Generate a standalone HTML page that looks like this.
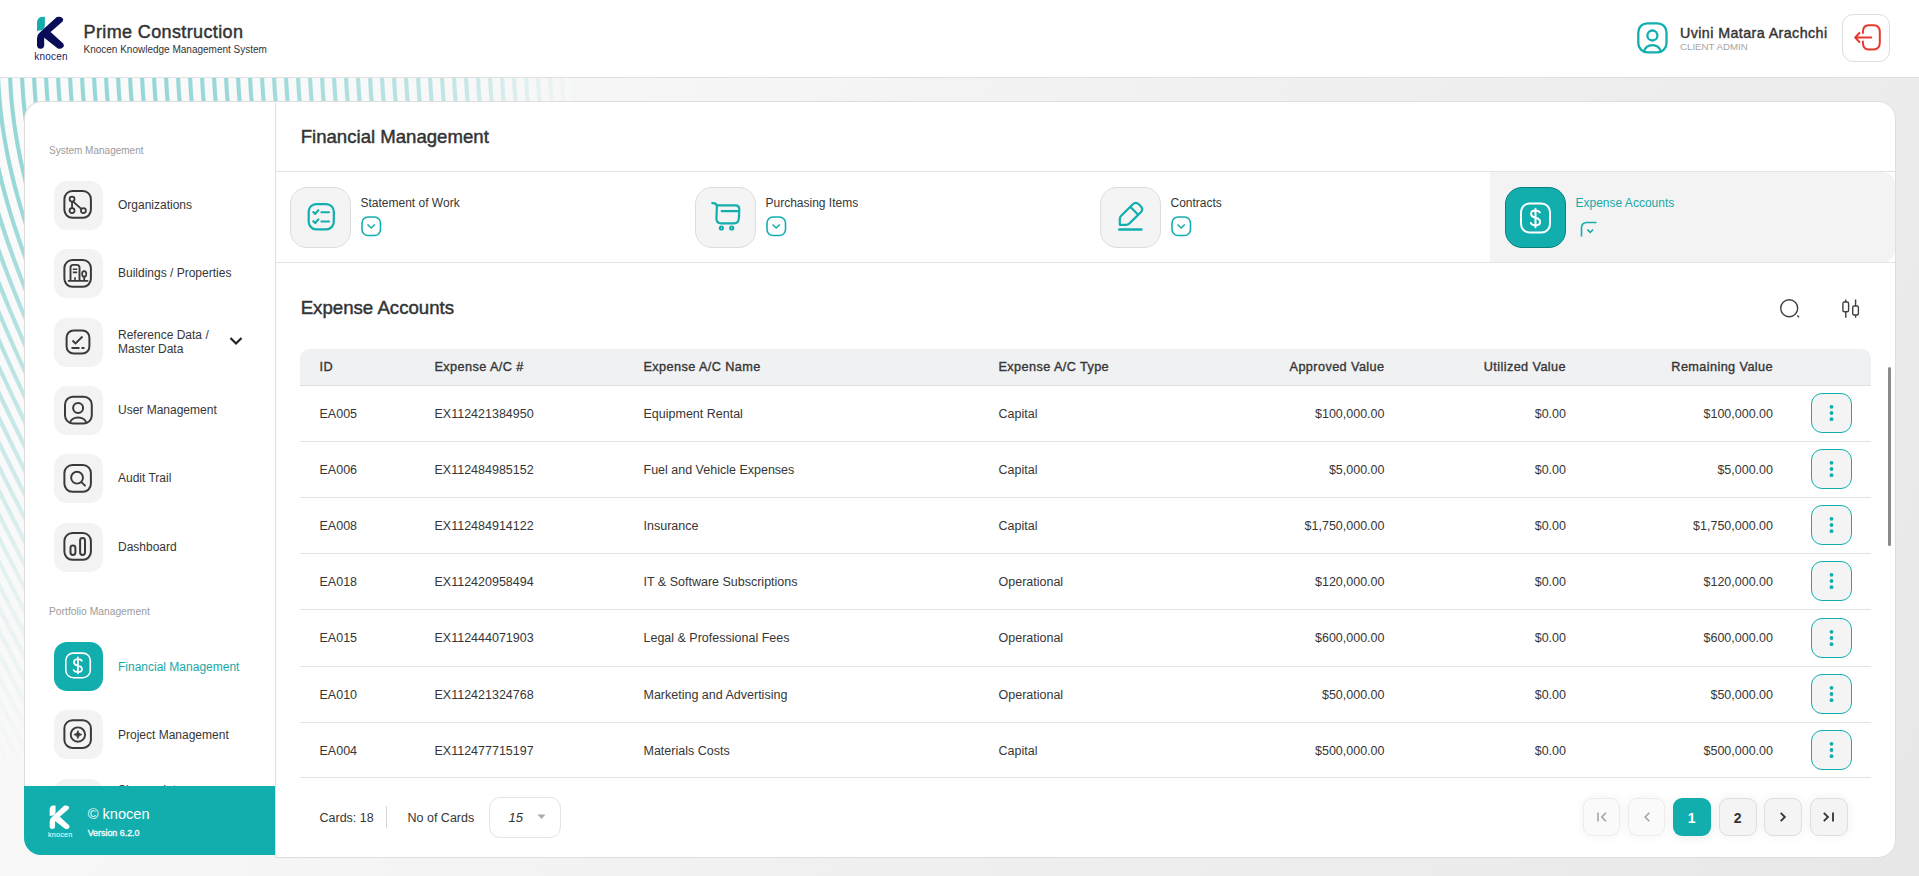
<!DOCTYPE html>
<html><head><meta charset="utf-8">
<style>
*{margin:0;padding:0;box-sizing:border-box}
html,body{width:1919px;height:876px;overflow:hidden}
body{position:relative;font-family:"Liberation Sans",sans-serif;color:#363636;background:linear-gradient(120deg,#fbfbfb 0%,#f7f7f7 25%,#efefef 60%,#ececec 80%,#e7e7e7 100%)}
.a{position:absolute;white-space:nowrap;line-height:1}
svg{overflow:visible}
</style></head><body>

<svg style="position:absolute;left:0;top:0" width="1919" height="876" viewBox="0 0 1919 876"><defs><linearGradient id="gx" gradientUnits="userSpaceOnUse" x1="0" y1="0" x2="600" y2="0"><stop offset="0" stop-color="#fff"/><stop offset="0.4" stop-color="#fff" stop-opacity="0.95"/><stop offset="0.75" stop-color="#fff" stop-opacity="0.55"/><stop offset="0.97" stop-color="#fff" stop-opacity="0"/></linearGradient><linearGradient id="gy" gradientUnits="userSpaceOnUse" x1="0" y1="78" x2="0" y2="780"><stop offset="0" stop-color="#fff"/><stop offset="0.18" stop-color="#fff" stop-opacity="0.95"/><stop offset="0.5" stop-color="#fff" stop-opacity="0.5"/><stop offset="0.72" stop-color="#fff" stop-opacity="0.2"/><stop offset="1" stop-color="#fff" stop-opacity="0"/></linearGradient><mask id="mx" maskUnits="userSpaceOnUse" x="0" y="0" width="1919" height="876"><rect x="0" y="0" width="1919" height="876" fill="url(#gx)"/></mask><mask id="my" maskUnits="userSpaceOnUse" x="0" y="0" width="1919" height="876"><rect x="0" y="0" width="1919" height="876" fill="url(#gy)"/></mask></defs><g mask="url(#mx)"><g mask="url(#my)"><g fill="none" stroke="#94d6d6" stroke-width="4.1"><polyline transform="translate(-830.2,0)" points="0.09,70 0.33,78 0.71,86 1.23,94 1.90,102 2.71,110 3.65,118 4.73,126 5.95,134 7.30,142 8.78,150 10.39,158 12.11,166 13.96,174 15.92,182 18.00,190 20.18,198 22.47,206 24.86,214 27.35,222 29.93,230 32.60,238 35.35,246 38.19,254 41.11,262 44.10,270 47.16,278 50.29,286 53.49,294 56.74,302 60.06,310 63.42,318 66.85,326 70.32,334 73.83,342 77.39,350 81.00,358 84.64,366 88.32,374 92.03,382 95.78,390 99.55,398 103.36,406 107.20,414 111.05,422 114.94,430 118.84,438 122.77,446 126.72,454 130.69,462 134.67,470 138.67,478 142.69,486 146.72,494 150.76,502 154.82,510 158.89,518 162.97,526 167.06,534 171.16,542 175.27,550 179.38,558 183.51,566 187.64,574 191.78,582 195.93,590 200.08,598 204.24,606 208.40,614 212.57,622 216.75,630 220.93,638 225.11,646 229.29,654 233.48,662 237.68,670 241.87,678 246.07,686 250.27,694 254.48,702 258.68,710 262.89,718 267.10,726 271.31,734 275.53,742 279.75,750 283.96,758 288.18,766 292.40,774 296.63,782 300.85,790 305.07,798 309.30,806 313.52,814 317.75,822 321.98,830 326.21,838 330.44,846 334.67,854 338.90,862 343.13,870 347.36,878"/><polyline transform="translate(-818.2,0)" points="0.09,70 0.33,78 0.71,86 1.23,94 1.90,102 2.71,110 3.65,118 4.73,126 5.95,134 7.30,142 8.78,150 10.39,158 12.11,166 13.96,174 15.92,182 18.00,190 20.18,198 22.47,206 24.86,214 27.35,222 29.93,230 32.60,238 35.35,246 38.19,254 41.11,262 44.10,270 47.16,278 50.29,286 53.49,294 56.74,302 60.06,310 63.42,318 66.85,326 70.32,334 73.83,342 77.39,350 81.00,358 84.64,366 88.32,374 92.03,382 95.78,390 99.55,398 103.36,406 107.20,414 111.05,422 114.94,430 118.84,438 122.77,446 126.72,454 130.69,462 134.67,470 138.67,478 142.69,486 146.72,494 150.76,502 154.82,510 158.89,518 162.97,526 167.06,534 171.16,542 175.27,550 179.38,558 183.51,566 187.64,574 191.78,582 195.93,590 200.08,598 204.24,606 208.40,614 212.57,622 216.75,630 220.93,638 225.11,646 229.29,654 233.48,662 237.68,670 241.87,678 246.07,686 250.27,694 254.48,702 258.68,710 262.89,718 267.10,726 271.31,734 275.53,742 279.75,750 283.96,758 288.18,766 292.40,774 296.63,782 300.85,790 305.07,798 309.30,806 313.52,814 317.75,822 321.98,830 326.21,838 330.44,846 334.67,854 338.90,862 343.13,870 347.36,878"/><polyline transform="translate(-806.2,0)" points="0.09,70 0.33,78 0.71,86 1.23,94 1.90,102 2.71,110 3.65,118 4.73,126 5.95,134 7.30,142 8.78,150 10.39,158 12.11,166 13.96,174 15.92,182 18.00,190 20.18,198 22.47,206 24.86,214 27.35,222 29.93,230 32.60,238 35.35,246 38.19,254 41.11,262 44.10,270 47.16,278 50.29,286 53.49,294 56.74,302 60.06,310 63.42,318 66.85,326 70.32,334 73.83,342 77.39,350 81.00,358 84.64,366 88.32,374 92.03,382 95.78,390 99.55,398 103.36,406 107.20,414 111.05,422 114.94,430 118.84,438 122.77,446 126.72,454 130.69,462 134.67,470 138.67,478 142.69,486 146.72,494 150.76,502 154.82,510 158.89,518 162.97,526 167.06,534 171.16,542 175.27,550 179.38,558 183.51,566 187.64,574 191.78,582 195.93,590 200.08,598 204.24,606 208.40,614 212.57,622 216.75,630 220.93,638 225.11,646 229.29,654 233.48,662 237.68,670 241.87,678 246.07,686 250.27,694 254.48,702 258.68,710 262.89,718 267.10,726 271.31,734 275.53,742 279.75,750 283.96,758 288.18,766 292.40,774 296.63,782 300.85,790 305.07,798 309.30,806 313.52,814 317.75,822 321.98,830 326.21,838 330.44,846 334.67,854 338.90,862 343.13,870 347.36,878"/><polyline transform="translate(-794.2,0)" points="0.09,70 0.33,78 0.71,86 1.23,94 1.90,102 2.71,110 3.65,118 4.73,126 5.95,134 7.30,142 8.78,150 10.39,158 12.11,166 13.96,174 15.92,182 18.00,190 20.18,198 22.47,206 24.86,214 27.35,222 29.93,230 32.60,238 35.35,246 38.19,254 41.11,262 44.10,270 47.16,278 50.29,286 53.49,294 56.74,302 60.06,310 63.42,318 66.85,326 70.32,334 73.83,342 77.39,350 81.00,358 84.64,366 88.32,374 92.03,382 95.78,390 99.55,398 103.36,406 107.20,414 111.05,422 114.94,430 118.84,438 122.77,446 126.72,454 130.69,462 134.67,470 138.67,478 142.69,486 146.72,494 150.76,502 154.82,510 158.89,518 162.97,526 167.06,534 171.16,542 175.27,550 179.38,558 183.51,566 187.64,574 191.78,582 195.93,590 200.08,598 204.24,606 208.40,614 212.57,622 216.75,630 220.93,638 225.11,646 229.29,654 233.48,662 237.68,670 241.87,678 246.07,686 250.27,694 254.48,702 258.68,710 262.89,718 267.10,726 271.31,734 275.53,742 279.75,750 283.96,758 288.18,766 292.40,774 296.63,782 300.85,790 305.07,798 309.30,806 313.52,814 317.75,822 321.98,830 326.21,838 330.44,846 334.67,854 338.90,862 343.13,870 347.36,878"/><polyline transform="translate(-782.2,0)" points="0.09,70 0.33,78 0.71,86 1.23,94 1.90,102 2.71,110 3.65,118 4.73,126 5.95,134 7.30,142 8.78,150 10.39,158 12.11,166 13.96,174 15.92,182 18.00,190 20.18,198 22.47,206 24.86,214 27.35,222 29.93,230 32.60,238 35.35,246 38.19,254 41.11,262 44.10,270 47.16,278 50.29,286 53.49,294 56.74,302 60.06,310 63.42,318 66.85,326 70.32,334 73.83,342 77.39,350 81.00,358 84.64,366 88.32,374 92.03,382 95.78,390 99.55,398 103.36,406 107.20,414 111.05,422 114.94,430 118.84,438 122.77,446 126.72,454 130.69,462 134.67,470 138.67,478 142.69,486 146.72,494 150.76,502 154.82,510 158.89,518 162.97,526 167.06,534 171.16,542 175.27,550 179.38,558 183.51,566 187.64,574 191.78,582 195.93,590 200.08,598 204.24,606 208.40,614 212.57,622 216.75,630 220.93,638 225.11,646 229.29,654 233.48,662 237.68,670 241.87,678 246.07,686 250.27,694 254.48,702 258.68,710 262.89,718 267.10,726 271.31,734 275.53,742 279.75,750 283.96,758 288.18,766 292.40,774 296.63,782 300.85,790 305.07,798 309.30,806 313.52,814 317.75,822 321.98,830 326.21,838 330.44,846 334.67,854 338.90,862 343.13,870 347.36,878"/><polyline transform="translate(-770.2,0)" points="0.09,70 0.33,78 0.71,86 1.23,94 1.90,102 2.71,110 3.65,118 4.73,126 5.95,134 7.30,142 8.78,150 10.39,158 12.11,166 13.96,174 15.92,182 18.00,190 20.18,198 22.47,206 24.86,214 27.35,222 29.93,230 32.60,238 35.35,246 38.19,254 41.11,262 44.10,270 47.16,278 50.29,286 53.49,294 56.74,302 60.06,310 63.42,318 66.85,326 70.32,334 73.83,342 77.39,350 81.00,358 84.64,366 88.32,374 92.03,382 95.78,390 99.55,398 103.36,406 107.20,414 111.05,422 114.94,430 118.84,438 122.77,446 126.72,454 130.69,462 134.67,470 138.67,478 142.69,486 146.72,494 150.76,502 154.82,510 158.89,518 162.97,526 167.06,534 171.16,542 175.27,550 179.38,558 183.51,566 187.64,574 191.78,582 195.93,590 200.08,598 204.24,606 208.40,614 212.57,622 216.75,630 220.93,638 225.11,646 229.29,654 233.48,662 237.68,670 241.87,678 246.07,686 250.27,694 254.48,702 258.68,710 262.89,718 267.10,726 271.31,734 275.53,742 279.75,750 283.96,758 288.18,766 292.40,774 296.63,782 300.85,790 305.07,798 309.30,806 313.52,814 317.75,822 321.98,830 326.21,838 330.44,846 334.67,854 338.90,862 343.13,870 347.36,878"/><polyline transform="translate(-758.2,0)" points="0.09,70 0.33,78 0.71,86 1.23,94 1.90,102 2.71,110 3.65,118 4.73,126 5.95,134 7.30,142 8.78,150 10.39,158 12.11,166 13.96,174 15.92,182 18.00,190 20.18,198 22.47,206 24.86,214 27.35,222 29.93,230 32.60,238 35.35,246 38.19,254 41.11,262 44.10,270 47.16,278 50.29,286 53.49,294 56.74,302 60.06,310 63.42,318 66.85,326 70.32,334 73.83,342 77.39,350 81.00,358 84.64,366 88.32,374 92.03,382 95.78,390 99.55,398 103.36,406 107.20,414 111.05,422 114.94,430 118.84,438 122.77,446 126.72,454 130.69,462 134.67,470 138.67,478 142.69,486 146.72,494 150.76,502 154.82,510 158.89,518 162.97,526 167.06,534 171.16,542 175.27,550 179.38,558 183.51,566 187.64,574 191.78,582 195.93,590 200.08,598 204.24,606 208.40,614 212.57,622 216.75,630 220.93,638 225.11,646 229.29,654 233.48,662 237.68,670 241.87,678 246.07,686 250.27,694 254.48,702 258.68,710 262.89,718 267.10,726 271.31,734 275.53,742 279.75,750 283.96,758 288.18,766 292.40,774 296.63,782 300.85,790 305.07,798 309.30,806 313.52,814 317.75,822 321.98,830 326.21,838 330.44,846 334.67,854 338.90,862 343.13,870 347.36,878"/><polyline transform="translate(-746.2,0)" points="0.09,70 0.33,78 0.71,86 1.23,94 1.90,102 2.71,110 3.65,118 4.73,126 5.95,134 7.30,142 8.78,150 10.39,158 12.11,166 13.96,174 15.92,182 18.00,190 20.18,198 22.47,206 24.86,214 27.35,222 29.93,230 32.60,238 35.35,246 38.19,254 41.11,262 44.10,270 47.16,278 50.29,286 53.49,294 56.74,302 60.06,310 63.42,318 66.85,326 70.32,334 73.83,342 77.39,350 81.00,358 84.64,366 88.32,374 92.03,382 95.78,390 99.55,398 103.36,406 107.20,414 111.05,422 114.94,430 118.84,438 122.77,446 126.72,454 130.69,462 134.67,470 138.67,478 142.69,486 146.72,494 150.76,502 154.82,510 158.89,518 162.97,526 167.06,534 171.16,542 175.27,550 179.38,558 183.51,566 187.64,574 191.78,582 195.93,590 200.08,598 204.24,606 208.40,614 212.57,622 216.75,630 220.93,638 225.11,646 229.29,654 233.48,662 237.68,670 241.87,678 246.07,686 250.27,694 254.48,702 258.68,710 262.89,718 267.10,726 271.31,734 275.53,742 279.75,750 283.96,758 288.18,766 292.40,774 296.63,782 300.85,790 305.07,798 309.30,806 313.52,814 317.75,822 321.98,830 326.21,838 330.44,846 334.67,854 338.90,862 343.13,870 347.36,878"/><polyline transform="translate(-734.2,0)" points="0.09,70 0.33,78 0.71,86 1.23,94 1.90,102 2.71,110 3.65,118 4.73,126 5.95,134 7.30,142 8.78,150 10.39,158 12.11,166 13.96,174 15.92,182 18.00,190 20.18,198 22.47,206 24.86,214 27.35,222 29.93,230 32.60,238 35.35,246 38.19,254 41.11,262 44.10,270 47.16,278 50.29,286 53.49,294 56.74,302 60.06,310 63.42,318 66.85,326 70.32,334 73.83,342 77.39,350 81.00,358 84.64,366 88.32,374 92.03,382 95.78,390 99.55,398 103.36,406 107.20,414 111.05,422 114.94,430 118.84,438 122.77,446 126.72,454 130.69,462 134.67,470 138.67,478 142.69,486 146.72,494 150.76,502 154.82,510 158.89,518 162.97,526 167.06,534 171.16,542 175.27,550 179.38,558 183.51,566 187.64,574 191.78,582 195.93,590 200.08,598 204.24,606 208.40,614 212.57,622 216.75,630 220.93,638 225.11,646 229.29,654 233.48,662 237.68,670 241.87,678 246.07,686 250.27,694 254.48,702 258.68,710 262.89,718 267.10,726 271.31,734 275.53,742 279.75,750 283.96,758 288.18,766 292.40,774 296.63,782 300.85,790 305.07,798 309.30,806 313.52,814 317.75,822 321.98,830 326.21,838 330.44,846 334.67,854 338.90,862 343.13,870 347.36,878"/><polyline transform="translate(-722.2,0)" points="0.09,70 0.33,78 0.71,86 1.23,94 1.90,102 2.71,110 3.65,118 4.73,126 5.95,134 7.30,142 8.78,150 10.39,158 12.11,166 13.96,174 15.92,182 18.00,190 20.18,198 22.47,206 24.86,214 27.35,222 29.93,230 32.60,238 35.35,246 38.19,254 41.11,262 44.10,270 47.16,278 50.29,286 53.49,294 56.74,302 60.06,310 63.42,318 66.85,326 70.32,334 73.83,342 77.39,350 81.00,358 84.64,366 88.32,374 92.03,382 95.78,390 99.55,398 103.36,406 107.20,414 111.05,422 114.94,430 118.84,438 122.77,446 126.72,454 130.69,462 134.67,470 138.67,478 142.69,486 146.72,494 150.76,502 154.82,510 158.89,518 162.97,526 167.06,534 171.16,542 175.27,550 179.38,558 183.51,566 187.64,574 191.78,582 195.93,590 200.08,598 204.24,606 208.40,614 212.57,622 216.75,630 220.93,638 225.11,646 229.29,654 233.48,662 237.68,670 241.87,678 246.07,686 250.27,694 254.48,702 258.68,710 262.89,718 267.10,726 271.31,734 275.53,742 279.75,750 283.96,758 288.18,766 292.40,774 296.63,782 300.85,790 305.07,798 309.30,806 313.52,814 317.75,822 321.98,830 326.21,838 330.44,846 334.67,854 338.90,862 343.13,870 347.36,878"/><polyline transform="translate(-710.2,0)" points="0.09,70 0.33,78 0.71,86 1.23,94 1.90,102 2.71,110 3.65,118 4.73,126 5.95,134 7.30,142 8.78,150 10.39,158 12.11,166 13.96,174 15.92,182 18.00,190 20.18,198 22.47,206 24.86,214 27.35,222 29.93,230 32.60,238 35.35,246 38.19,254 41.11,262 44.10,270 47.16,278 50.29,286 53.49,294 56.74,302 60.06,310 63.42,318 66.85,326 70.32,334 73.83,342 77.39,350 81.00,358 84.64,366 88.32,374 92.03,382 95.78,390 99.55,398 103.36,406 107.20,414 111.05,422 114.94,430 118.84,438 122.77,446 126.72,454 130.69,462 134.67,470 138.67,478 142.69,486 146.72,494 150.76,502 154.82,510 158.89,518 162.97,526 167.06,534 171.16,542 175.27,550 179.38,558 183.51,566 187.64,574 191.78,582 195.93,590 200.08,598 204.24,606 208.40,614 212.57,622 216.75,630 220.93,638 225.11,646 229.29,654 233.48,662 237.68,670 241.87,678 246.07,686 250.27,694 254.48,702 258.68,710 262.89,718 267.10,726 271.31,734 275.53,742 279.75,750 283.96,758 288.18,766 292.40,774 296.63,782 300.85,790 305.07,798 309.30,806 313.52,814 317.75,822 321.98,830 326.21,838 330.44,846 334.67,854 338.90,862 343.13,870 347.36,878"/><polyline transform="translate(-698.2,0)" points="0.09,70 0.33,78 0.71,86 1.23,94 1.90,102 2.71,110 3.65,118 4.73,126 5.95,134 7.30,142 8.78,150 10.39,158 12.11,166 13.96,174 15.92,182 18.00,190 20.18,198 22.47,206 24.86,214 27.35,222 29.93,230 32.60,238 35.35,246 38.19,254 41.11,262 44.10,270 47.16,278 50.29,286 53.49,294 56.74,302 60.06,310 63.42,318 66.85,326 70.32,334 73.83,342 77.39,350 81.00,358 84.64,366 88.32,374 92.03,382 95.78,390 99.55,398 103.36,406 107.20,414 111.05,422 114.94,430 118.84,438 122.77,446 126.72,454 130.69,462 134.67,470 138.67,478 142.69,486 146.72,494 150.76,502 154.82,510 158.89,518 162.97,526 167.06,534 171.16,542 175.27,550 179.38,558 183.51,566 187.64,574 191.78,582 195.93,590 200.08,598 204.24,606 208.40,614 212.57,622 216.75,630 220.93,638 225.11,646 229.29,654 233.48,662 237.68,670 241.87,678 246.07,686 250.27,694 254.48,702 258.68,710 262.89,718 267.10,726 271.31,734 275.53,742 279.75,750 283.96,758 288.18,766 292.40,774 296.63,782 300.85,790 305.07,798 309.30,806 313.52,814 317.75,822 321.98,830 326.21,838 330.44,846 334.67,854 338.90,862 343.13,870 347.36,878"/><polyline transform="translate(-686.2,0)" points="0.09,70 0.33,78 0.71,86 1.23,94 1.90,102 2.71,110 3.65,118 4.73,126 5.95,134 7.30,142 8.78,150 10.39,158 12.11,166 13.96,174 15.92,182 18.00,190 20.18,198 22.47,206 24.86,214 27.35,222 29.93,230 32.60,238 35.35,246 38.19,254 41.11,262 44.10,270 47.16,278 50.29,286 53.49,294 56.74,302 60.06,310 63.42,318 66.85,326 70.32,334 73.83,342 77.39,350 81.00,358 84.64,366 88.32,374 92.03,382 95.78,390 99.55,398 103.36,406 107.20,414 111.05,422 114.94,430 118.84,438 122.77,446 126.72,454 130.69,462 134.67,470 138.67,478 142.69,486 146.72,494 150.76,502 154.82,510 158.89,518 162.97,526 167.06,534 171.16,542 175.27,550 179.38,558 183.51,566 187.64,574 191.78,582 195.93,590 200.08,598 204.24,606 208.40,614 212.57,622 216.75,630 220.93,638 225.11,646 229.29,654 233.48,662 237.68,670 241.87,678 246.07,686 250.27,694 254.48,702 258.68,710 262.89,718 267.10,726 271.31,734 275.53,742 279.75,750 283.96,758 288.18,766 292.40,774 296.63,782 300.85,790 305.07,798 309.30,806 313.52,814 317.75,822 321.98,830 326.21,838 330.44,846 334.67,854 338.90,862 343.13,870 347.36,878"/><polyline transform="translate(-674.2,0)" points="0.09,70 0.33,78 0.71,86 1.23,94 1.90,102 2.71,110 3.65,118 4.73,126 5.95,134 7.30,142 8.78,150 10.39,158 12.11,166 13.96,174 15.92,182 18.00,190 20.18,198 22.47,206 24.86,214 27.35,222 29.93,230 32.60,238 35.35,246 38.19,254 41.11,262 44.10,270 47.16,278 50.29,286 53.49,294 56.74,302 60.06,310 63.42,318 66.85,326 70.32,334 73.83,342 77.39,350 81.00,358 84.64,366 88.32,374 92.03,382 95.78,390 99.55,398 103.36,406 107.20,414 111.05,422 114.94,430 118.84,438 122.77,446 126.72,454 130.69,462 134.67,470 138.67,478 142.69,486 146.72,494 150.76,502 154.82,510 158.89,518 162.97,526 167.06,534 171.16,542 175.27,550 179.38,558 183.51,566 187.64,574 191.78,582 195.93,590 200.08,598 204.24,606 208.40,614 212.57,622 216.75,630 220.93,638 225.11,646 229.29,654 233.48,662 237.68,670 241.87,678 246.07,686 250.27,694 254.48,702 258.68,710 262.89,718 267.10,726 271.31,734 275.53,742 279.75,750 283.96,758 288.18,766 292.40,774 296.63,782 300.85,790 305.07,798 309.30,806 313.52,814 317.75,822 321.98,830 326.21,838 330.44,846 334.67,854 338.90,862 343.13,870 347.36,878"/><polyline transform="translate(-662.2,0)" points="0.09,70 0.33,78 0.71,86 1.23,94 1.90,102 2.71,110 3.65,118 4.73,126 5.95,134 7.30,142 8.78,150 10.39,158 12.11,166 13.96,174 15.92,182 18.00,190 20.18,198 22.47,206 24.86,214 27.35,222 29.93,230 32.60,238 35.35,246 38.19,254 41.11,262 44.10,270 47.16,278 50.29,286 53.49,294 56.74,302 60.06,310 63.42,318 66.85,326 70.32,334 73.83,342 77.39,350 81.00,358 84.64,366 88.32,374 92.03,382 95.78,390 99.55,398 103.36,406 107.20,414 111.05,422 114.94,430 118.84,438 122.77,446 126.72,454 130.69,462 134.67,470 138.67,478 142.69,486 146.72,494 150.76,502 154.82,510 158.89,518 162.97,526 167.06,534 171.16,542 175.27,550 179.38,558 183.51,566 187.64,574 191.78,582 195.93,590 200.08,598 204.24,606 208.40,614 212.57,622 216.75,630 220.93,638 225.11,646 229.29,654 233.48,662 237.68,670 241.87,678 246.07,686 250.27,694 254.48,702 258.68,710 262.89,718 267.10,726 271.31,734 275.53,742 279.75,750 283.96,758 288.18,766 292.40,774 296.63,782 300.85,790 305.07,798 309.30,806 313.52,814 317.75,822 321.98,830 326.21,838 330.44,846 334.67,854 338.90,862 343.13,870 347.36,878"/><polyline transform="translate(-650.2,0)" points="0.09,70 0.33,78 0.71,86 1.23,94 1.90,102 2.71,110 3.65,118 4.73,126 5.95,134 7.30,142 8.78,150 10.39,158 12.11,166 13.96,174 15.92,182 18.00,190 20.18,198 22.47,206 24.86,214 27.35,222 29.93,230 32.60,238 35.35,246 38.19,254 41.11,262 44.10,270 47.16,278 50.29,286 53.49,294 56.74,302 60.06,310 63.42,318 66.85,326 70.32,334 73.83,342 77.39,350 81.00,358 84.64,366 88.32,374 92.03,382 95.78,390 99.55,398 103.36,406 107.20,414 111.05,422 114.94,430 118.84,438 122.77,446 126.72,454 130.69,462 134.67,470 138.67,478 142.69,486 146.72,494 150.76,502 154.82,510 158.89,518 162.97,526 167.06,534 171.16,542 175.27,550 179.38,558 183.51,566 187.64,574 191.78,582 195.93,590 200.08,598 204.24,606 208.40,614 212.57,622 216.75,630 220.93,638 225.11,646 229.29,654 233.48,662 237.68,670 241.87,678 246.07,686 250.27,694 254.48,702 258.68,710 262.89,718 267.10,726 271.31,734 275.53,742 279.75,750 283.96,758 288.18,766 292.40,774 296.63,782 300.85,790 305.07,798 309.30,806 313.52,814 317.75,822 321.98,830 326.21,838 330.44,846 334.67,854 338.90,862 343.13,870 347.36,878"/><polyline transform="translate(-638.2,0)" points="0.09,70 0.33,78 0.71,86 1.23,94 1.90,102 2.71,110 3.65,118 4.73,126 5.95,134 7.30,142 8.78,150 10.39,158 12.11,166 13.96,174 15.92,182 18.00,190 20.18,198 22.47,206 24.86,214 27.35,222 29.93,230 32.60,238 35.35,246 38.19,254 41.11,262 44.10,270 47.16,278 50.29,286 53.49,294 56.74,302 60.06,310 63.42,318 66.85,326 70.32,334 73.83,342 77.39,350 81.00,358 84.64,366 88.32,374 92.03,382 95.78,390 99.55,398 103.36,406 107.20,414 111.05,422 114.94,430 118.84,438 122.77,446 126.72,454 130.69,462 134.67,470 138.67,478 142.69,486 146.72,494 150.76,502 154.82,510 158.89,518 162.97,526 167.06,534 171.16,542 175.27,550 179.38,558 183.51,566 187.64,574 191.78,582 195.93,590 200.08,598 204.24,606 208.40,614 212.57,622 216.75,630 220.93,638 225.11,646 229.29,654 233.48,662 237.68,670 241.87,678 246.07,686 250.27,694 254.48,702 258.68,710 262.89,718 267.10,726 271.31,734 275.53,742 279.75,750 283.96,758 288.18,766 292.40,774 296.63,782 300.85,790 305.07,798 309.30,806 313.52,814 317.75,822 321.98,830 326.21,838 330.44,846 334.67,854 338.90,862 343.13,870 347.36,878"/><polyline transform="translate(-626.2,0)" points="0.09,70 0.33,78 0.71,86 1.23,94 1.90,102 2.71,110 3.65,118 4.73,126 5.95,134 7.30,142 8.78,150 10.39,158 12.11,166 13.96,174 15.92,182 18.00,190 20.18,198 22.47,206 24.86,214 27.35,222 29.93,230 32.60,238 35.35,246 38.19,254 41.11,262 44.10,270 47.16,278 50.29,286 53.49,294 56.74,302 60.06,310 63.42,318 66.85,326 70.32,334 73.83,342 77.39,350 81.00,358 84.64,366 88.32,374 92.03,382 95.78,390 99.55,398 103.36,406 107.20,414 111.05,422 114.94,430 118.84,438 122.77,446 126.72,454 130.69,462 134.67,470 138.67,478 142.69,486 146.72,494 150.76,502 154.82,510 158.89,518 162.97,526 167.06,534 171.16,542 175.27,550 179.38,558 183.51,566 187.64,574 191.78,582 195.93,590 200.08,598 204.24,606 208.40,614 212.57,622 216.75,630 220.93,638 225.11,646 229.29,654 233.48,662 237.68,670 241.87,678 246.07,686 250.27,694 254.48,702 258.68,710 262.89,718 267.10,726 271.31,734 275.53,742 279.75,750 283.96,758 288.18,766 292.40,774 296.63,782 300.85,790 305.07,798 309.30,806 313.52,814 317.75,822 321.98,830 326.21,838 330.44,846 334.67,854 338.90,862 343.13,870 347.36,878"/><polyline transform="translate(-614.2,0)" points="0.09,70 0.33,78 0.71,86 1.23,94 1.90,102 2.71,110 3.65,118 4.73,126 5.95,134 7.30,142 8.78,150 10.39,158 12.11,166 13.96,174 15.92,182 18.00,190 20.18,198 22.47,206 24.86,214 27.35,222 29.93,230 32.60,238 35.35,246 38.19,254 41.11,262 44.10,270 47.16,278 50.29,286 53.49,294 56.74,302 60.06,310 63.42,318 66.85,326 70.32,334 73.83,342 77.39,350 81.00,358 84.64,366 88.32,374 92.03,382 95.78,390 99.55,398 103.36,406 107.20,414 111.05,422 114.94,430 118.84,438 122.77,446 126.72,454 130.69,462 134.67,470 138.67,478 142.69,486 146.72,494 150.76,502 154.82,510 158.89,518 162.97,526 167.06,534 171.16,542 175.27,550 179.38,558 183.51,566 187.64,574 191.78,582 195.93,590 200.08,598 204.24,606 208.40,614 212.57,622 216.75,630 220.93,638 225.11,646 229.29,654 233.48,662 237.68,670 241.87,678 246.07,686 250.27,694 254.48,702 258.68,710 262.89,718 267.10,726 271.31,734 275.53,742 279.75,750 283.96,758 288.18,766 292.40,774 296.63,782 300.85,790 305.07,798 309.30,806 313.52,814 317.75,822 321.98,830 326.21,838 330.44,846 334.67,854 338.90,862 343.13,870 347.36,878"/><polyline transform="translate(-602.2,0)" points="0.09,70 0.33,78 0.71,86 1.23,94 1.90,102 2.71,110 3.65,118 4.73,126 5.95,134 7.30,142 8.78,150 10.39,158 12.11,166 13.96,174 15.92,182 18.00,190 20.18,198 22.47,206 24.86,214 27.35,222 29.93,230 32.60,238 35.35,246 38.19,254 41.11,262 44.10,270 47.16,278 50.29,286 53.49,294 56.74,302 60.06,310 63.42,318 66.85,326 70.32,334 73.83,342 77.39,350 81.00,358 84.64,366 88.32,374 92.03,382 95.78,390 99.55,398 103.36,406 107.20,414 111.05,422 114.94,430 118.84,438 122.77,446 126.72,454 130.69,462 134.67,470 138.67,478 142.69,486 146.72,494 150.76,502 154.82,510 158.89,518 162.97,526 167.06,534 171.16,542 175.27,550 179.38,558 183.51,566 187.64,574 191.78,582 195.93,590 200.08,598 204.24,606 208.40,614 212.57,622 216.75,630 220.93,638 225.11,646 229.29,654 233.48,662 237.68,670 241.87,678 246.07,686 250.27,694 254.48,702 258.68,710 262.89,718 267.10,726 271.31,734 275.53,742 279.75,750 283.96,758 288.18,766 292.40,774 296.63,782 300.85,790 305.07,798 309.30,806 313.52,814 317.75,822 321.98,830 326.21,838 330.44,846 334.67,854 338.90,862 343.13,870 347.36,878"/><polyline transform="translate(-590.2,0)" points="0.09,70 0.33,78 0.71,86 1.23,94 1.90,102 2.71,110 3.65,118 4.73,126 5.95,134 7.30,142 8.78,150 10.39,158 12.11,166 13.96,174 15.92,182 18.00,190 20.18,198 22.47,206 24.86,214 27.35,222 29.93,230 32.60,238 35.35,246 38.19,254 41.11,262 44.10,270 47.16,278 50.29,286 53.49,294 56.74,302 60.06,310 63.42,318 66.85,326 70.32,334 73.83,342 77.39,350 81.00,358 84.64,366 88.32,374 92.03,382 95.78,390 99.55,398 103.36,406 107.20,414 111.05,422 114.94,430 118.84,438 122.77,446 126.72,454 130.69,462 134.67,470 138.67,478 142.69,486 146.72,494 150.76,502 154.82,510 158.89,518 162.97,526 167.06,534 171.16,542 175.27,550 179.38,558 183.51,566 187.64,574 191.78,582 195.93,590 200.08,598 204.24,606 208.40,614 212.57,622 216.75,630 220.93,638 225.11,646 229.29,654 233.48,662 237.68,670 241.87,678 246.07,686 250.27,694 254.48,702 258.68,710 262.89,718 267.10,726 271.31,734 275.53,742 279.75,750 283.96,758 288.18,766 292.40,774 296.63,782 300.85,790 305.07,798 309.30,806 313.52,814 317.75,822 321.98,830 326.21,838 330.44,846 334.67,854 338.90,862 343.13,870 347.36,878"/><polyline transform="translate(-578.2,0)" points="0.09,70 0.33,78 0.71,86 1.23,94 1.90,102 2.71,110 3.65,118 4.73,126 5.95,134 7.30,142 8.78,150 10.39,158 12.11,166 13.96,174 15.92,182 18.00,190 20.18,198 22.47,206 24.86,214 27.35,222 29.93,230 32.60,238 35.35,246 38.19,254 41.11,262 44.10,270 47.16,278 50.29,286 53.49,294 56.74,302 60.06,310 63.42,318 66.85,326 70.32,334 73.83,342 77.39,350 81.00,358 84.64,366 88.32,374 92.03,382 95.78,390 99.55,398 103.36,406 107.20,414 111.05,422 114.94,430 118.84,438 122.77,446 126.72,454 130.69,462 134.67,470 138.67,478 142.69,486 146.72,494 150.76,502 154.82,510 158.89,518 162.97,526 167.06,534 171.16,542 175.27,550 179.38,558 183.51,566 187.64,574 191.78,582 195.93,590 200.08,598 204.24,606 208.40,614 212.57,622 216.75,630 220.93,638 225.11,646 229.29,654 233.48,662 237.68,670 241.87,678 246.07,686 250.27,694 254.48,702 258.68,710 262.89,718 267.10,726 271.31,734 275.53,742 279.75,750 283.96,758 288.18,766 292.40,774 296.63,782 300.85,790 305.07,798 309.30,806 313.52,814 317.75,822 321.98,830 326.21,838 330.44,846 334.67,854 338.90,862 343.13,870 347.36,878"/><polyline transform="translate(-566.2,0)" points="0.09,70 0.33,78 0.71,86 1.23,94 1.90,102 2.71,110 3.65,118 4.73,126 5.95,134 7.30,142 8.78,150 10.39,158 12.11,166 13.96,174 15.92,182 18.00,190 20.18,198 22.47,206 24.86,214 27.35,222 29.93,230 32.60,238 35.35,246 38.19,254 41.11,262 44.10,270 47.16,278 50.29,286 53.49,294 56.74,302 60.06,310 63.42,318 66.85,326 70.32,334 73.83,342 77.39,350 81.00,358 84.64,366 88.32,374 92.03,382 95.78,390 99.55,398 103.36,406 107.20,414 111.05,422 114.94,430 118.84,438 122.77,446 126.72,454 130.69,462 134.67,470 138.67,478 142.69,486 146.72,494 150.76,502 154.82,510 158.89,518 162.97,526 167.06,534 171.16,542 175.27,550 179.38,558 183.51,566 187.64,574 191.78,582 195.93,590 200.08,598 204.24,606 208.40,614 212.57,622 216.75,630 220.93,638 225.11,646 229.29,654 233.48,662 237.68,670 241.87,678 246.07,686 250.27,694 254.48,702 258.68,710 262.89,718 267.10,726 271.31,734 275.53,742 279.75,750 283.96,758 288.18,766 292.40,774 296.63,782 300.85,790 305.07,798 309.30,806 313.52,814 317.75,822 321.98,830 326.21,838 330.44,846 334.67,854 338.90,862 343.13,870 347.36,878"/><polyline transform="translate(-554.2,0)" points="0.09,70 0.33,78 0.71,86 1.23,94 1.90,102 2.71,110 3.65,118 4.73,126 5.95,134 7.30,142 8.78,150 10.39,158 12.11,166 13.96,174 15.92,182 18.00,190 20.18,198 22.47,206 24.86,214 27.35,222 29.93,230 32.60,238 35.35,246 38.19,254 41.11,262 44.10,270 47.16,278 50.29,286 53.49,294 56.74,302 60.06,310 63.42,318 66.85,326 70.32,334 73.83,342 77.39,350 81.00,358 84.64,366 88.32,374 92.03,382 95.78,390 99.55,398 103.36,406 107.20,414 111.05,422 114.94,430 118.84,438 122.77,446 126.72,454 130.69,462 134.67,470 138.67,478 142.69,486 146.72,494 150.76,502 154.82,510 158.89,518 162.97,526 167.06,534 171.16,542 175.27,550 179.38,558 183.51,566 187.64,574 191.78,582 195.93,590 200.08,598 204.24,606 208.40,614 212.57,622 216.75,630 220.93,638 225.11,646 229.29,654 233.48,662 237.68,670 241.87,678 246.07,686 250.27,694 254.48,702 258.68,710 262.89,718 267.10,726 271.31,734 275.53,742 279.75,750 283.96,758 288.18,766 292.40,774 296.63,782 300.85,790 305.07,798 309.30,806 313.52,814 317.75,822 321.98,830 326.21,838 330.44,846 334.67,854 338.90,862 343.13,870 347.36,878"/><polyline transform="translate(-542.2,0)" points="0.09,70 0.33,78 0.71,86 1.23,94 1.90,102 2.71,110 3.65,118 4.73,126 5.95,134 7.30,142 8.78,150 10.39,158 12.11,166 13.96,174 15.92,182 18.00,190 20.18,198 22.47,206 24.86,214 27.35,222 29.93,230 32.60,238 35.35,246 38.19,254 41.11,262 44.10,270 47.16,278 50.29,286 53.49,294 56.74,302 60.06,310 63.42,318 66.85,326 70.32,334 73.83,342 77.39,350 81.00,358 84.64,366 88.32,374 92.03,382 95.78,390 99.55,398 103.36,406 107.20,414 111.05,422 114.94,430 118.84,438 122.77,446 126.72,454 130.69,462 134.67,470 138.67,478 142.69,486 146.72,494 150.76,502 154.82,510 158.89,518 162.97,526 167.06,534 171.16,542 175.27,550 179.38,558 183.51,566 187.64,574 191.78,582 195.93,590 200.08,598 204.24,606 208.40,614 212.57,622 216.75,630 220.93,638 225.11,646 229.29,654 233.48,662 237.68,670 241.87,678 246.07,686 250.27,694 254.48,702 258.68,710 262.89,718 267.10,726 271.31,734 275.53,742 279.75,750 283.96,758 288.18,766 292.40,774 296.63,782 300.85,790 305.07,798 309.30,806 313.52,814 317.75,822 321.98,830 326.21,838 330.44,846 334.67,854 338.90,862 343.13,870 347.36,878"/><polyline transform="translate(-530.2,0)" points="0.09,70 0.33,78 0.71,86 1.23,94 1.90,102 2.71,110 3.65,118 4.73,126 5.95,134 7.30,142 8.78,150 10.39,158 12.11,166 13.96,174 15.92,182 18.00,190 20.18,198 22.47,206 24.86,214 27.35,222 29.93,230 32.60,238 35.35,246 38.19,254 41.11,262 44.10,270 47.16,278 50.29,286 53.49,294 56.74,302 60.06,310 63.42,318 66.85,326 70.32,334 73.83,342 77.39,350 81.00,358 84.64,366 88.32,374 92.03,382 95.78,390 99.55,398 103.36,406 107.20,414 111.05,422 114.94,430 118.84,438 122.77,446 126.72,454 130.69,462 134.67,470 138.67,478 142.69,486 146.72,494 150.76,502 154.82,510 158.89,518 162.97,526 167.06,534 171.16,542 175.27,550 179.38,558 183.51,566 187.64,574 191.78,582 195.93,590 200.08,598 204.24,606 208.40,614 212.57,622 216.75,630 220.93,638 225.11,646 229.29,654 233.48,662 237.68,670 241.87,678 246.07,686 250.27,694 254.48,702 258.68,710 262.89,718 267.10,726 271.31,734 275.53,742 279.75,750 283.96,758 288.18,766 292.40,774 296.63,782 300.85,790 305.07,798 309.30,806 313.52,814 317.75,822 321.98,830 326.21,838 330.44,846 334.67,854 338.90,862 343.13,870 347.36,878"/><polyline transform="translate(-518.2,0)" points="0.09,70 0.33,78 0.71,86 1.23,94 1.90,102 2.71,110 3.65,118 4.73,126 5.95,134 7.30,142 8.78,150 10.39,158 12.11,166 13.96,174 15.92,182 18.00,190 20.18,198 22.47,206 24.86,214 27.35,222 29.93,230 32.60,238 35.35,246 38.19,254 41.11,262 44.10,270 47.16,278 50.29,286 53.49,294 56.74,302 60.06,310 63.42,318 66.85,326 70.32,334 73.83,342 77.39,350 81.00,358 84.64,366 88.32,374 92.03,382 95.78,390 99.55,398 103.36,406 107.20,414 111.05,422 114.94,430 118.84,438 122.77,446 126.72,454 130.69,462 134.67,470 138.67,478 142.69,486 146.72,494 150.76,502 154.82,510 158.89,518 162.97,526 167.06,534 171.16,542 175.27,550 179.38,558 183.51,566 187.64,574 191.78,582 195.93,590 200.08,598 204.24,606 208.40,614 212.57,622 216.75,630 220.93,638 225.11,646 229.29,654 233.48,662 237.68,670 241.87,678 246.07,686 250.27,694 254.48,702 258.68,710 262.89,718 267.10,726 271.31,734 275.53,742 279.75,750 283.96,758 288.18,766 292.40,774 296.63,782 300.85,790 305.07,798 309.30,806 313.52,814 317.75,822 321.98,830 326.21,838 330.44,846 334.67,854 338.90,862 343.13,870 347.36,878"/><polyline transform="translate(-506.2,0)" points="0.09,70 0.33,78 0.71,86 1.23,94 1.90,102 2.71,110 3.65,118 4.73,126 5.95,134 7.30,142 8.78,150 10.39,158 12.11,166 13.96,174 15.92,182 18.00,190 20.18,198 22.47,206 24.86,214 27.35,222 29.93,230 32.60,238 35.35,246 38.19,254 41.11,262 44.10,270 47.16,278 50.29,286 53.49,294 56.74,302 60.06,310 63.42,318 66.85,326 70.32,334 73.83,342 77.39,350 81.00,358 84.64,366 88.32,374 92.03,382 95.78,390 99.55,398 103.36,406 107.20,414 111.05,422 114.94,430 118.84,438 122.77,446 126.72,454 130.69,462 134.67,470 138.67,478 142.69,486 146.72,494 150.76,502 154.82,510 158.89,518 162.97,526 167.06,534 171.16,542 175.27,550 179.38,558 183.51,566 187.64,574 191.78,582 195.93,590 200.08,598 204.24,606 208.40,614 212.57,622 216.75,630 220.93,638 225.11,646 229.29,654 233.48,662 237.68,670 241.87,678 246.07,686 250.27,694 254.48,702 258.68,710 262.89,718 267.10,726 271.31,734 275.53,742 279.75,750 283.96,758 288.18,766 292.40,774 296.63,782 300.85,790 305.07,798 309.30,806 313.52,814 317.75,822 321.98,830 326.21,838 330.44,846 334.67,854 338.90,862 343.13,870 347.36,878"/><polyline transform="translate(-494.2,0)" points="0.09,70 0.33,78 0.71,86 1.23,94 1.90,102 2.71,110 3.65,118 4.73,126 5.95,134 7.30,142 8.78,150 10.39,158 12.11,166 13.96,174 15.92,182 18.00,190 20.18,198 22.47,206 24.86,214 27.35,222 29.93,230 32.60,238 35.35,246 38.19,254 41.11,262 44.10,270 47.16,278 50.29,286 53.49,294 56.74,302 60.06,310 63.42,318 66.85,326 70.32,334 73.83,342 77.39,350 81.00,358 84.64,366 88.32,374 92.03,382 95.78,390 99.55,398 103.36,406 107.20,414 111.05,422 114.94,430 118.84,438 122.77,446 126.72,454 130.69,462 134.67,470 138.67,478 142.69,486 146.72,494 150.76,502 154.82,510 158.89,518 162.97,526 167.06,534 171.16,542 175.27,550 179.38,558 183.51,566 187.64,574 191.78,582 195.93,590 200.08,598 204.24,606 208.40,614 212.57,622 216.75,630 220.93,638 225.11,646 229.29,654 233.48,662 237.68,670 241.87,678 246.07,686 250.27,694 254.48,702 258.68,710 262.89,718 267.10,726 271.31,734 275.53,742 279.75,750 283.96,758 288.18,766 292.40,774 296.63,782 300.85,790 305.07,798 309.30,806 313.52,814 317.75,822 321.98,830 326.21,838 330.44,846 334.67,854 338.90,862 343.13,870 347.36,878"/><polyline transform="translate(-482.2,0)" points="0.09,70 0.33,78 0.71,86 1.23,94 1.90,102 2.71,110 3.65,118 4.73,126 5.95,134 7.30,142 8.78,150 10.39,158 12.11,166 13.96,174 15.92,182 18.00,190 20.18,198 22.47,206 24.86,214 27.35,222 29.93,230 32.60,238 35.35,246 38.19,254 41.11,262 44.10,270 47.16,278 50.29,286 53.49,294 56.74,302 60.06,310 63.42,318 66.85,326 70.32,334 73.83,342 77.39,350 81.00,358 84.64,366 88.32,374 92.03,382 95.78,390 99.55,398 103.36,406 107.20,414 111.05,422 114.94,430 118.84,438 122.77,446 126.72,454 130.69,462 134.67,470 138.67,478 142.69,486 146.72,494 150.76,502 154.82,510 158.89,518 162.97,526 167.06,534 171.16,542 175.27,550 179.38,558 183.51,566 187.64,574 191.78,582 195.93,590 200.08,598 204.24,606 208.40,614 212.57,622 216.75,630 220.93,638 225.11,646 229.29,654 233.48,662 237.68,670 241.87,678 246.07,686 250.27,694 254.48,702 258.68,710 262.89,718 267.10,726 271.31,734 275.53,742 279.75,750 283.96,758 288.18,766 292.40,774 296.63,782 300.85,790 305.07,798 309.30,806 313.52,814 317.75,822 321.98,830 326.21,838 330.44,846 334.67,854 338.90,862 343.13,870 347.36,878"/><polyline transform="translate(-470.2,0)" points="0.09,70 0.33,78 0.71,86 1.23,94 1.90,102 2.71,110 3.65,118 4.73,126 5.95,134 7.30,142 8.78,150 10.39,158 12.11,166 13.96,174 15.92,182 18.00,190 20.18,198 22.47,206 24.86,214 27.35,222 29.93,230 32.60,238 35.35,246 38.19,254 41.11,262 44.10,270 47.16,278 50.29,286 53.49,294 56.74,302 60.06,310 63.42,318 66.85,326 70.32,334 73.83,342 77.39,350 81.00,358 84.64,366 88.32,374 92.03,382 95.78,390 99.55,398 103.36,406 107.20,414 111.05,422 114.94,430 118.84,438 122.77,446 126.72,454 130.69,462 134.67,470 138.67,478 142.69,486 146.72,494 150.76,502 154.82,510 158.89,518 162.97,526 167.06,534 171.16,542 175.27,550 179.38,558 183.51,566 187.64,574 191.78,582 195.93,590 200.08,598 204.24,606 208.40,614 212.57,622 216.75,630 220.93,638 225.11,646 229.29,654 233.48,662 237.68,670 241.87,678 246.07,686 250.27,694 254.48,702 258.68,710 262.89,718 267.10,726 271.31,734 275.53,742 279.75,750 283.96,758 288.18,766 292.40,774 296.63,782 300.85,790 305.07,798 309.30,806 313.52,814 317.75,822 321.98,830 326.21,838 330.44,846 334.67,854 338.90,862 343.13,870 347.36,878"/><polyline transform="translate(-458.2,0)" points="0.09,70 0.33,78 0.71,86 1.23,94 1.90,102 2.71,110 3.65,118 4.73,126 5.95,134 7.30,142 8.78,150 10.39,158 12.11,166 13.96,174 15.92,182 18.00,190 20.18,198 22.47,206 24.86,214 27.35,222 29.93,230 32.60,238 35.35,246 38.19,254 41.11,262 44.10,270 47.16,278 50.29,286 53.49,294 56.74,302 60.06,310 63.42,318 66.85,326 70.32,334 73.83,342 77.39,350 81.00,358 84.64,366 88.32,374 92.03,382 95.78,390 99.55,398 103.36,406 107.20,414 111.05,422 114.94,430 118.84,438 122.77,446 126.72,454 130.69,462 134.67,470 138.67,478 142.69,486 146.72,494 150.76,502 154.82,510 158.89,518 162.97,526 167.06,534 171.16,542 175.27,550 179.38,558 183.51,566 187.64,574 191.78,582 195.93,590 200.08,598 204.24,606 208.40,614 212.57,622 216.75,630 220.93,638 225.11,646 229.29,654 233.48,662 237.68,670 241.87,678 246.07,686 250.27,694 254.48,702 258.68,710 262.89,718 267.10,726 271.31,734 275.53,742 279.75,750 283.96,758 288.18,766 292.40,774 296.63,782 300.85,790 305.07,798 309.30,806 313.52,814 317.75,822 321.98,830 326.21,838 330.44,846 334.67,854 338.90,862 343.13,870 347.36,878"/><polyline transform="translate(-446.2,0)" points="0.09,70 0.33,78 0.71,86 1.23,94 1.90,102 2.71,110 3.65,118 4.73,126 5.95,134 7.30,142 8.78,150 10.39,158 12.11,166 13.96,174 15.92,182 18.00,190 20.18,198 22.47,206 24.86,214 27.35,222 29.93,230 32.60,238 35.35,246 38.19,254 41.11,262 44.10,270 47.16,278 50.29,286 53.49,294 56.74,302 60.06,310 63.42,318 66.85,326 70.32,334 73.83,342 77.39,350 81.00,358 84.64,366 88.32,374 92.03,382 95.78,390 99.55,398 103.36,406 107.20,414 111.05,422 114.94,430 118.84,438 122.77,446 126.72,454 130.69,462 134.67,470 138.67,478 142.69,486 146.72,494 150.76,502 154.82,510 158.89,518 162.97,526 167.06,534 171.16,542 175.27,550 179.38,558 183.51,566 187.64,574 191.78,582 195.93,590 200.08,598 204.24,606 208.40,614 212.57,622 216.75,630 220.93,638 225.11,646 229.29,654 233.48,662 237.68,670 241.87,678 246.07,686 250.27,694 254.48,702 258.68,710 262.89,718 267.10,726 271.31,734 275.53,742 279.75,750 283.96,758 288.18,766 292.40,774 296.63,782 300.85,790 305.07,798 309.30,806 313.52,814 317.75,822 321.98,830 326.21,838 330.44,846 334.67,854 338.90,862 343.13,870 347.36,878"/><polyline transform="translate(-434.2,0)" points="0.09,70 0.33,78 0.71,86 1.23,94 1.90,102 2.71,110 3.65,118 4.73,126 5.95,134 7.30,142 8.78,150 10.39,158 12.11,166 13.96,174 15.92,182 18.00,190 20.18,198 22.47,206 24.86,214 27.35,222 29.93,230 32.60,238 35.35,246 38.19,254 41.11,262 44.10,270 47.16,278 50.29,286 53.49,294 56.74,302 60.06,310 63.42,318 66.85,326 70.32,334 73.83,342 77.39,350 81.00,358 84.64,366 88.32,374 92.03,382 95.78,390 99.55,398 103.36,406 107.20,414 111.05,422 114.94,430 118.84,438 122.77,446 126.72,454 130.69,462 134.67,470 138.67,478 142.69,486 146.72,494 150.76,502 154.82,510 158.89,518 162.97,526 167.06,534 171.16,542 175.27,550 179.38,558 183.51,566 187.64,574 191.78,582 195.93,590 200.08,598 204.24,606 208.40,614 212.57,622 216.75,630 220.93,638 225.11,646 229.29,654 233.48,662 237.68,670 241.87,678 246.07,686 250.27,694 254.48,702 258.68,710 262.89,718 267.10,726 271.31,734 275.53,742 279.75,750 283.96,758 288.18,766 292.40,774 296.63,782 300.85,790 305.07,798 309.30,806 313.52,814 317.75,822 321.98,830 326.21,838 330.44,846 334.67,854 338.90,862 343.13,870 347.36,878"/><polyline transform="translate(-422.2,0)" points="0.09,70 0.33,78 0.71,86 1.23,94 1.90,102 2.71,110 3.65,118 4.73,126 5.95,134 7.30,142 8.78,150 10.39,158 12.11,166 13.96,174 15.92,182 18.00,190 20.18,198 22.47,206 24.86,214 27.35,222 29.93,230 32.60,238 35.35,246 38.19,254 41.11,262 44.10,270 47.16,278 50.29,286 53.49,294 56.74,302 60.06,310 63.42,318 66.85,326 70.32,334 73.83,342 77.39,350 81.00,358 84.64,366 88.32,374 92.03,382 95.78,390 99.55,398 103.36,406 107.20,414 111.05,422 114.94,430 118.84,438 122.77,446 126.72,454 130.69,462 134.67,470 138.67,478 142.69,486 146.72,494 150.76,502 154.82,510 158.89,518 162.97,526 167.06,534 171.16,542 175.27,550 179.38,558 183.51,566 187.64,574 191.78,582 195.93,590 200.08,598 204.24,606 208.40,614 212.57,622 216.75,630 220.93,638 225.11,646 229.29,654 233.48,662 237.68,670 241.87,678 246.07,686 250.27,694 254.48,702 258.68,710 262.89,718 267.10,726 271.31,734 275.53,742 279.75,750 283.96,758 288.18,766 292.40,774 296.63,782 300.85,790 305.07,798 309.30,806 313.52,814 317.75,822 321.98,830 326.21,838 330.44,846 334.67,854 338.90,862 343.13,870 347.36,878"/><polyline transform="translate(-410.2,0)" points="0.09,70 0.33,78 0.71,86 1.23,94 1.90,102 2.71,110 3.65,118 4.73,126 5.95,134 7.30,142 8.78,150 10.39,158 12.11,166 13.96,174 15.92,182 18.00,190 20.18,198 22.47,206 24.86,214 27.35,222 29.93,230 32.60,238 35.35,246 38.19,254 41.11,262 44.10,270 47.16,278 50.29,286 53.49,294 56.74,302 60.06,310 63.42,318 66.85,326 70.32,334 73.83,342 77.39,350 81.00,358 84.64,366 88.32,374 92.03,382 95.78,390 99.55,398 103.36,406 107.20,414 111.05,422 114.94,430 118.84,438 122.77,446 126.72,454 130.69,462 134.67,470 138.67,478 142.69,486 146.72,494 150.76,502 154.82,510 158.89,518 162.97,526 167.06,534 171.16,542 175.27,550 179.38,558 183.51,566 187.64,574 191.78,582 195.93,590 200.08,598 204.24,606 208.40,614 212.57,622 216.75,630 220.93,638 225.11,646 229.29,654 233.48,662 237.68,670 241.87,678 246.07,686 250.27,694 254.48,702 258.68,710 262.89,718 267.10,726 271.31,734 275.53,742 279.75,750 283.96,758 288.18,766 292.40,774 296.63,782 300.85,790 305.07,798 309.30,806 313.52,814 317.75,822 321.98,830 326.21,838 330.44,846 334.67,854 338.90,862 343.13,870 347.36,878"/><polyline transform="translate(-398.2,0)" points="0.09,70 0.33,78 0.71,86 1.23,94 1.90,102 2.71,110 3.65,118 4.73,126 5.95,134 7.30,142 8.78,150 10.39,158 12.11,166 13.96,174 15.92,182 18.00,190 20.18,198 22.47,206 24.86,214 27.35,222 29.93,230 32.60,238 35.35,246 38.19,254 41.11,262 44.10,270 47.16,278 50.29,286 53.49,294 56.74,302 60.06,310 63.42,318 66.85,326 70.32,334 73.83,342 77.39,350 81.00,358 84.64,366 88.32,374 92.03,382 95.78,390 99.55,398 103.36,406 107.20,414 111.05,422 114.94,430 118.84,438 122.77,446 126.72,454 130.69,462 134.67,470 138.67,478 142.69,486 146.72,494 150.76,502 154.82,510 158.89,518 162.97,526 167.06,534 171.16,542 175.27,550 179.38,558 183.51,566 187.64,574 191.78,582 195.93,590 200.08,598 204.24,606 208.40,614 212.57,622 216.75,630 220.93,638 225.11,646 229.29,654 233.48,662 237.68,670 241.87,678 246.07,686 250.27,694 254.48,702 258.68,710 262.89,718 267.10,726 271.31,734 275.53,742 279.75,750 283.96,758 288.18,766 292.40,774 296.63,782 300.85,790 305.07,798 309.30,806 313.52,814 317.75,822 321.98,830 326.21,838 330.44,846 334.67,854 338.90,862 343.13,870 347.36,878"/><polyline transform="translate(-386.2,0)" points="0.09,70 0.33,78 0.71,86 1.23,94 1.90,102 2.71,110 3.65,118 4.73,126 5.95,134 7.30,142 8.78,150 10.39,158 12.11,166 13.96,174 15.92,182 18.00,190 20.18,198 22.47,206 24.86,214 27.35,222 29.93,230 32.60,238 35.35,246 38.19,254 41.11,262 44.10,270 47.16,278 50.29,286 53.49,294 56.74,302 60.06,310 63.42,318 66.85,326 70.32,334 73.83,342 77.39,350 81.00,358 84.64,366 88.32,374 92.03,382 95.78,390 99.55,398 103.36,406 107.20,414 111.05,422 114.94,430 118.84,438 122.77,446 126.72,454 130.69,462 134.67,470 138.67,478 142.69,486 146.72,494 150.76,502 154.82,510 158.89,518 162.97,526 167.06,534 171.16,542 175.27,550 179.38,558 183.51,566 187.64,574 191.78,582 195.93,590 200.08,598 204.24,606 208.40,614 212.57,622 216.75,630 220.93,638 225.11,646 229.29,654 233.48,662 237.68,670 241.87,678 246.07,686 250.27,694 254.48,702 258.68,710 262.89,718 267.10,726 271.31,734 275.53,742 279.75,750 283.96,758 288.18,766 292.40,774 296.63,782 300.85,790 305.07,798 309.30,806 313.52,814 317.75,822 321.98,830 326.21,838 330.44,846 334.67,854 338.90,862 343.13,870 347.36,878"/><polyline transform="translate(-374.2,0)" points="0.09,70 0.33,78 0.71,86 1.23,94 1.90,102 2.71,110 3.65,118 4.73,126 5.95,134 7.30,142 8.78,150 10.39,158 12.11,166 13.96,174 15.92,182 18.00,190 20.18,198 22.47,206 24.86,214 27.35,222 29.93,230 32.60,238 35.35,246 38.19,254 41.11,262 44.10,270 47.16,278 50.29,286 53.49,294 56.74,302 60.06,310 63.42,318 66.85,326 70.32,334 73.83,342 77.39,350 81.00,358 84.64,366 88.32,374 92.03,382 95.78,390 99.55,398 103.36,406 107.20,414 111.05,422 114.94,430 118.84,438 122.77,446 126.72,454 130.69,462 134.67,470 138.67,478 142.69,486 146.72,494 150.76,502 154.82,510 158.89,518 162.97,526 167.06,534 171.16,542 175.27,550 179.38,558 183.51,566 187.64,574 191.78,582 195.93,590 200.08,598 204.24,606 208.40,614 212.57,622 216.75,630 220.93,638 225.11,646 229.29,654 233.48,662 237.68,670 241.87,678 246.07,686 250.27,694 254.48,702 258.68,710 262.89,718 267.10,726 271.31,734 275.53,742 279.75,750 283.96,758 288.18,766 292.40,774 296.63,782 300.85,790 305.07,798 309.30,806 313.52,814 317.75,822 321.98,830 326.21,838 330.44,846 334.67,854 338.90,862 343.13,870 347.36,878"/><polyline transform="translate(-362.2,0)" points="0.09,70 0.33,78 0.71,86 1.23,94 1.90,102 2.71,110 3.65,118 4.73,126 5.95,134 7.30,142 8.78,150 10.39,158 12.11,166 13.96,174 15.92,182 18.00,190 20.18,198 22.47,206 24.86,214 27.35,222 29.93,230 32.60,238 35.35,246 38.19,254 41.11,262 44.10,270 47.16,278 50.29,286 53.49,294 56.74,302 60.06,310 63.42,318 66.85,326 70.32,334 73.83,342 77.39,350 81.00,358 84.64,366 88.32,374 92.03,382 95.78,390 99.55,398 103.36,406 107.20,414 111.05,422 114.94,430 118.84,438 122.77,446 126.72,454 130.69,462 134.67,470 138.67,478 142.69,486 146.72,494 150.76,502 154.82,510 158.89,518 162.97,526 167.06,534 171.16,542 175.27,550 179.38,558 183.51,566 187.64,574 191.78,582 195.93,590 200.08,598 204.24,606 208.40,614 212.57,622 216.75,630 220.93,638 225.11,646 229.29,654 233.48,662 237.68,670 241.87,678 246.07,686 250.27,694 254.48,702 258.68,710 262.89,718 267.10,726 271.31,734 275.53,742 279.75,750 283.96,758 288.18,766 292.40,774 296.63,782 300.85,790 305.07,798 309.30,806 313.52,814 317.75,822 321.98,830 326.21,838 330.44,846 334.67,854 338.90,862 343.13,870 347.36,878"/><polyline transform="translate(-350.2,0)" points="0.09,70 0.33,78 0.71,86 1.23,94 1.90,102 2.71,110 3.65,118 4.73,126 5.95,134 7.30,142 8.78,150 10.39,158 12.11,166 13.96,174 15.92,182 18.00,190 20.18,198 22.47,206 24.86,214 27.35,222 29.93,230 32.60,238 35.35,246 38.19,254 41.11,262 44.10,270 47.16,278 50.29,286 53.49,294 56.74,302 60.06,310 63.42,318 66.85,326 70.32,334 73.83,342 77.39,350 81.00,358 84.64,366 88.32,374 92.03,382 95.78,390 99.55,398 103.36,406 107.20,414 111.05,422 114.94,430 118.84,438 122.77,446 126.72,454 130.69,462 134.67,470 138.67,478 142.69,486 146.72,494 150.76,502 154.82,510 158.89,518 162.97,526 167.06,534 171.16,542 175.27,550 179.38,558 183.51,566 187.64,574 191.78,582 195.93,590 200.08,598 204.24,606 208.40,614 212.57,622 216.75,630 220.93,638 225.11,646 229.29,654 233.48,662 237.68,670 241.87,678 246.07,686 250.27,694 254.48,702 258.68,710 262.89,718 267.10,726 271.31,734 275.53,742 279.75,750 283.96,758 288.18,766 292.40,774 296.63,782 300.85,790 305.07,798 309.30,806 313.52,814 317.75,822 321.98,830 326.21,838 330.44,846 334.67,854 338.90,862 343.13,870 347.36,878"/><polyline transform="translate(-338.2,0)" points="0.09,70 0.33,78 0.71,86 1.23,94 1.90,102 2.71,110 3.65,118 4.73,126 5.95,134 7.30,142 8.78,150 10.39,158 12.11,166 13.96,174 15.92,182 18.00,190 20.18,198 22.47,206 24.86,214 27.35,222 29.93,230 32.60,238 35.35,246 38.19,254 41.11,262 44.10,270 47.16,278 50.29,286 53.49,294 56.74,302 60.06,310 63.42,318 66.85,326 70.32,334 73.83,342 77.39,350 81.00,358 84.64,366 88.32,374 92.03,382 95.78,390 99.55,398 103.36,406 107.20,414 111.05,422 114.94,430 118.84,438 122.77,446 126.72,454 130.69,462 134.67,470 138.67,478 142.69,486 146.72,494 150.76,502 154.82,510 158.89,518 162.97,526 167.06,534 171.16,542 175.27,550 179.38,558 183.51,566 187.64,574 191.78,582 195.93,590 200.08,598 204.24,606 208.40,614 212.57,622 216.75,630 220.93,638 225.11,646 229.29,654 233.48,662 237.68,670 241.87,678 246.07,686 250.27,694 254.48,702 258.68,710 262.89,718 267.10,726 271.31,734 275.53,742 279.75,750 283.96,758 288.18,766 292.40,774 296.63,782 300.85,790 305.07,798 309.30,806 313.52,814 317.75,822 321.98,830 326.21,838 330.44,846 334.67,854 338.90,862 343.13,870 347.36,878"/><polyline transform="translate(-326.2,0)" points="0.09,70 0.33,78 0.71,86 1.23,94 1.90,102 2.71,110 3.65,118 4.73,126 5.95,134 7.30,142 8.78,150 10.39,158 12.11,166 13.96,174 15.92,182 18.00,190 20.18,198 22.47,206 24.86,214 27.35,222 29.93,230 32.60,238 35.35,246 38.19,254 41.11,262 44.10,270 47.16,278 50.29,286 53.49,294 56.74,302 60.06,310 63.42,318 66.85,326 70.32,334 73.83,342 77.39,350 81.00,358 84.64,366 88.32,374 92.03,382 95.78,390 99.55,398 103.36,406 107.20,414 111.05,422 114.94,430 118.84,438 122.77,446 126.72,454 130.69,462 134.67,470 138.67,478 142.69,486 146.72,494 150.76,502 154.82,510 158.89,518 162.97,526 167.06,534 171.16,542 175.27,550 179.38,558 183.51,566 187.64,574 191.78,582 195.93,590 200.08,598 204.24,606 208.40,614 212.57,622 216.75,630 220.93,638 225.11,646 229.29,654 233.48,662 237.68,670 241.87,678 246.07,686 250.27,694 254.48,702 258.68,710 262.89,718 267.10,726 271.31,734 275.53,742 279.75,750 283.96,758 288.18,766 292.40,774 296.63,782 300.85,790 305.07,798 309.30,806 313.52,814 317.75,822 321.98,830 326.21,838 330.44,846 334.67,854 338.90,862 343.13,870 347.36,878"/><polyline transform="translate(-314.2,0)" points="0.09,70 0.33,78 0.71,86 1.23,94 1.90,102 2.71,110 3.65,118 4.73,126 5.95,134 7.30,142 8.78,150 10.39,158 12.11,166 13.96,174 15.92,182 18.00,190 20.18,198 22.47,206 24.86,214 27.35,222 29.93,230 32.60,238 35.35,246 38.19,254 41.11,262 44.10,270 47.16,278 50.29,286 53.49,294 56.74,302 60.06,310 63.42,318 66.85,326 70.32,334 73.83,342 77.39,350 81.00,358 84.64,366 88.32,374 92.03,382 95.78,390 99.55,398 103.36,406 107.20,414 111.05,422 114.94,430 118.84,438 122.77,446 126.72,454 130.69,462 134.67,470 138.67,478 142.69,486 146.72,494 150.76,502 154.82,510 158.89,518 162.97,526 167.06,534 171.16,542 175.27,550 179.38,558 183.51,566 187.64,574 191.78,582 195.93,590 200.08,598 204.24,606 208.40,614 212.57,622 216.75,630 220.93,638 225.11,646 229.29,654 233.48,662 237.68,670 241.87,678 246.07,686 250.27,694 254.48,702 258.68,710 262.89,718 267.10,726 271.31,734 275.53,742 279.75,750 283.96,758 288.18,766 292.40,774 296.63,782 300.85,790 305.07,798 309.30,806 313.52,814 317.75,822 321.98,830 326.21,838 330.44,846 334.67,854 338.90,862 343.13,870 347.36,878"/><polyline transform="translate(-302.2,0)" points="0.09,70 0.33,78 0.71,86 1.23,94 1.90,102 2.71,110 3.65,118 4.73,126 5.95,134 7.30,142 8.78,150 10.39,158 12.11,166 13.96,174 15.92,182 18.00,190 20.18,198 22.47,206 24.86,214 27.35,222 29.93,230 32.60,238 35.35,246 38.19,254 41.11,262 44.10,270 47.16,278 50.29,286 53.49,294 56.74,302 60.06,310 63.42,318 66.85,326 70.32,334 73.83,342 77.39,350 81.00,358 84.64,366 88.32,374 92.03,382 95.78,390 99.55,398 103.36,406 107.20,414 111.05,422 114.94,430 118.84,438 122.77,446 126.72,454 130.69,462 134.67,470 138.67,478 142.69,486 146.72,494 150.76,502 154.82,510 158.89,518 162.97,526 167.06,534 171.16,542 175.27,550 179.38,558 183.51,566 187.64,574 191.78,582 195.93,590 200.08,598 204.24,606 208.40,614 212.57,622 216.75,630 220.93,638 225.11,646 229.29,654 233.48,662 237.68,670 241.87,678 246.07,686 250.27,694 254.48,702 258.68,710 262.89,718 267.10,726 271.31,734 275.53,742 279.75,750 283.96,758 288.18,766 292.40,774 296.63,782 300.85,790 305.07,798 309.30,806 313.52,814 317.75,822 321.98,830 326.21,838 330.44,846 334.67,854 338.90,862 343.13,870 347.36,878"/><polyline transform="translate(-290.2,0)" points="0.09,70 0.33,78 0.71,86 1.23,94 1.90,102 2.71,110 3.65,118 4.73,126 5.95,134 7.30,142 8.78,150 10.39,158 12.11,166 13.96,174 15.92,182 18.00,190 20.18,198 22.47,206 24.86,214 27.35,222 29.93,230 32.60,238 35.35,246 38.19,254 41.11,262 44.10,270 47.16,278 50.29,286 53.49,294 56.74,302 60.06,310 63.42,318 66.85,326 70.32,334 73.83,342 77.39,350 81.00,358 84.64,366 88.32,374 92.03,382 95.78,390 99.55,398 103.36,406 107.20,414 111.05,422 114.94,430 118.84,438 122.77,446 126.72,454 130.69,462 134.67,470 138.67,478 142.69,486 146.72,494 150.76,502 154.82,510 158.89,518 162.97,526 167.06,534 171.16,542 175.27,550 179.38,558 183.51,566 187.64,574 191.78,582 195.93,590 200.08,598 204.24,606 208.40,614 212.57,622 216.75,630 220.93,638 225.11,646 229.29,654 233.48,662 237.68,670 241.87,678 246.07,686 250.27,694 254.48,702 258.68,710 262.89,718 267.10,726 271.31,734 275.53,742 279.75,750 283.96,758 288.18,766 292.40,774 296.63,782 300.85,790 305.07,798 309.30,806 313.52,814 317.75,822 321.98,830 326.21,838 330.44,846 334.67,854 338.90,862 343.13,870 347.36,878"/><polyline transform="translate(-278.2,0)" points="0.09,70 0.33,78 0.71,86 1.23,94 1.90,102 2.71,110 3.65,118 4.73,126 5.95,134 7.30,142 8.78,150 10.39,158 12.11,166 13.96,174 15.92,182 18.00,190 20.18,198 22.47,206 24.86,214 27.35,222 29.93,230 32.60,238 35.35,246 38.19,254 41.11,262 44.10,270 47.16,278 50.29,286 53.49,294 56.74,302 60.06,310 63.42,318 66.85,326 70.32,334 73.83,342 77.39,350 81.00,358 84.64,366 88.32,374 92.03,382 95.78,390 99.55,398 103.36,406 107.20,414 111.05,422 114.94,430 118.84,438 122.77,446 126.72,454 130.69,462 134.67,470 138.67,478 142.69,486 146.72,494 150.76,502 154.82,510 158.89,518 162.97,526 167.06,534 171.16,542 175.27,550 179.38,558 183.51,566 187.64,574 191.78,582 195.93,590 200.08,598 204.24,606 208.40,614 212.57,622 216.75,630 220.93,638 225.11,646 229.29,654 233.48,662 237.68,670 241.87,678 246.07,686 250.27,694 254.48,702 258.68,710 262.89,718 267.10,726 271.31,734 275.53,742 279.75,750 283.96,758 288.18,766 292.40,774 296.63,782 300.85,790 305.07,798 309.30,806 313.52,814 317.75,822 321.98,830 326.21,838 330.44,846 334.67,854 338.90,862 343.13,870 347.36,878"/><polyline transform="translate(-266.2,0)" points="0.09,70 0.33,78 0.71,86 1.23,94 1.90,102 2.71,110 3.65,118 4.73,126 5.95,134 7.30,142 8.78,150 10.39,158 12.11,166 13.96,174 15.92,182 18.00,190 20.18,198 22.47,206 24.86,214 27.35,222 29.93,230 32.60,238 35.35,246 38.19,254 41.11,262 44.10,270 47.16,278 50.29,286 53.49,294 56.74,302 60.06,310 63.42,318 66.85,326 70.32,334 73.83,342 77.39,350 81.00,358 84.64,366 88.32,374 92.03,382 95.78,390 99.55,398 103.36,406 107.20,414 111.05,422 114.94,430 118.84,438 122.77,446 126.72,454 130.69,462 134.67,470 138.67,478 142.69,486 146.72,494 150.76,502 154.82,510 158.89,518 162.97,526 167.06,534 171.16,542 175.27,550 179.38,558 183.51,566 187.64,574 191.78,582 195.93,590 200.08,598 204.24,606 208.40,614 212.57,622 216.75,630 220.93,638 225.11,646 229.29,654 233.48,662 237.68,670 241.87,678 246.07,686 250.27,694 254.48,702 258.68,710 262.89,718 267.10,726 271.31,734 275.53,742 279.75,750 283.96,758 288.18,766 292.40,774 296.63,782 300.85,790 305.07,798 309.30,806 313.52,814 317.75,822 321.98,830 326.21,838 330.44,846 334.67,854 338.90,862 343.13,870 347.36,878"/><polyline transform="translate(-254.2,0)" points="0.09,70 0.33,78 0.71,86 1.23,94 1.90,102 2.71,110 3.65,118 4.73,126 5.95,134 7.30,142 8.78,150 10.39,158 12.11,166 13.96,174 15.92,182 18.00,190 20.18,198 22.47,206 24.86,214 27.35,222 29.93,230 32.60,238 35.35,246 38.19,254 41.11,262 44.10,270 47.16,278 50.29,286 53.49,294 56.74,302 60.06,310 63.42,318 66.85,326 70.32,334 73.83,342 77.39,350 81.00,358 84.64,366 88.32,374 92.03,382 95.78,390 99.55,398 103.36,406 107.20,414 111.05,422 114.94,430 118.84,438 122.77,446 126.72,454 130.69,462 134.67,470 138.67,478 142.69,486 146.72,494 150.76,502 154.82,510 158.89,518 162.97,526 167.06,534 171.16,542 175.27,550 179.38,558 183.51,566 187.64,574 191.78,582 195.93,590 200.08,598 204.24,606 208.40,614 212.57,622 216.75,630 220.93,638 225.11,646 229.29,654 233.48,662 237.68,670 241.87,678 246.07,686 250.27,694 254.48,702 258.68,710 262.89,718 267.10,726 271.31,734 275.53,742 279.75,750 283.96,758 288.18,766 292.40,774 296.63,782 300.85,790 305.07,798 309.30,806 313.52,814 317.75,822 321.98,830 326.21,838 330.44,846 334.67,854 338.90,862 343.13,870 347.36,878"/><polyline transform="translate(-242.2,0)" points="0.09,70 0.33,78 0.71,86 1.23,94 1.90,102 2.71,110 3.65,118 4.73,126 5.95,134 7.30,142 8.78,150 10.39,158 12.11,166 13.96,174 15.92,182 18.00,190 20.18,198 22.47,206 24.86,214 27.35,222 29.93,230 32.60,238 35.35,246 38.19,254 41.11,262 44.10,270 47.16,278 50.29,286 53.49,294 56.74,302 60.06,310 63.42,318 66.85,326 70.32,334 73.83,342 77.39,350 81.00,358 84.64,366 88.32,374 92.03,382 95.78,390 99.55,398 103.36,406 107.20,414 111.05,422 114.94,430 118.84,438 122.77,446 126.72,454 130.69,462 134.67,470 138.67,478 142.69,486 146.72,494 150.76,502 154.82,510 158.89,518 162.97,526 167.06,534 171.16,542 175.27,550 179.38,558 183.51,566 187.64,574 191.78,582 195.93,590 200.08,598 204.24,606 208.40,614 212.57,622 216.75,630 220.93,638 225.11,646 229.29,654 233.48,662 237.68,670 241.87,678 246.07,686 250.27,694 254.48,702 258.68,710 262.89,718 267.10,726 271.31,734 275.53,742 279.75,750 283.96,758 288.18,766 292.40,774 296.63,782 300.85,790 305.07,798 309.30,806 313.52,814 317.75,822 321.98,830 326.21,838 330.44,846 334.67,854 338.90,862 343.13,870 347.36,878"/><polyline transform="translate(-230.2,0)" points="0.09,70 0.33,78 0.71,86 1.23,94 1.90,102 2.71,110 3.65,118 4.73,126 5.95,134 7.30,142 8.78,150 10.39,158 12.11,166 13.96,174 15.92,182 18.00,190 20.18,198 22.47,206 24.86,214 27.35,222 29.93,230 32.60,238 35.35,246 38.19,254 41.11,262 44.10,270 47.16,278 50.29,286 53.49,294 56.74,302 60.06,310 63.42,318 66.85,326 70.32,334 73.83,342 77.39,350 81.00,358 84.64,366 88.32,374 92.03,382 95.78,390 99.55,398 103.36,406 107.20,414 111.05,422 114.94,430 118.84,438 122.77,446 126.72,454 130.69,462 134.67,470 138.67,478 142.69,486 146.72,494 150.76,502 154.82,510 158.89,518 162.97,526 167.06,534 171.16,542 175.27,550 179.38,558 183.51,566 187.64,574 191.78,582 195.93,590 200.08,598 204.24,606 208.40,614 212.57,622 216.75,630 220.93,638 225.11,646 229.29,654 233.48,662 237.68,670 241.87,678 246.07,686 250.27,694 254.48,702 258.68,710 262.89,718 267.10,726 271.31,734 275.53,742 279.75,750 283.96,758 288.18,766 292.40,774 296.63,782 300.85,790 305.07,798 309.30,806 313.52,814 317.75,822 321.98,830 326.21,838 330.44,846 334.67,854 338.90,862 343.13,870 347.36,878"/><polyline transform="translate(-218.2,0)" points="0.09,70 0.33,78 0.71,86 1.23,94 1.90,102 2.71,110 3.65,118 4.73,126 5.95,134 7.30,142 8.78,150 10.39,158 12.11,166 13.96,174 15.92,182 18.00,190 20.18,198 22.47,206 24.86,214 27.35,222 29.93,230 32.60,238 35.35,246 38.19,254 41.11,262 44.10,270 47.16,278 50.29,286 53.49,294 56.74,302 60.06,310 63.42,318 66.85,326 70.32,334 73.83,342 77.39,350 81.00,358 84.64,366 88.32,374 92.03,382 95.78,390 99.55,398 103.36,406 107.20,414 111.05,422 114.94,430 118.84,438 122.77,446 126.72,454 130.69,462 134.67,470 138.67,478 142.69,486 146.72,494 150.76,502 154.82,510 158.89,518 162.97,526 167.06,534 171.16,542 175.27,550 179.38,558 183.51,566 187.64,574 191.78,582 195.93,590 200.08,598 204.24,606 208.40,614 212.57,622 216.75,630 220.93,638 225.11,646 229.29,654 233.48,662 237.68,670 241.87,678 246.07,686 250.27,694 254.48,702 258.68,710 262.89,718 267.10,726 271.31,734 275.53,742 279.75,750 283.96,758 288.18,766 292.40,774 296.63,782 300.85,790 305.07,798 309.30,806 313.52,814 317.75,822 321.98,830 326.21,838 330.44,846 334.67,854 338.90,862 343.13,870 347.36,878"/><polyline transform="translate(-206.2,0)" points="0.09,70 0.33,78 0.71,86 1.23,94 1.90,102 2.71,110 3.65,118 4.73,126 5.95,134 7.30,142 8.78,150 10.39,158 12.11,166 13.96,174 15.92,182 18.00,190 20.18,198 22.47,206 24.86,214 27.35,222 29.93,230 32.60,238 35.35,246 38.19,254 41.11,262 44.10,270 47.16,278 50.29,286 53.49,294 56.74,302 60.06,310 63.42,318 66.85,326 70.32,334 73.83,342 77.39,350 81.00,358 84.64,366 88.32,374 92.03,382 95.78,390 99.55,398 103.36,406 107.20,414 111.05,422 114.94,430 118.84,438 122.77,446 126.72,454 130.69,462 134.67,470 138.67,478 142.69,486 146.72,494 150.76,502 154.82,510 158.89,518 162.97,526 167.06,534 171.16,542 175.27,550 179.38,558 183.51,566 187.64,574 191.78,582 195.93,590 200.08,598 204.24,606 208.40,614 212.57,622 216.75,630 220.93,638 225.11,646 229.29,654 233.48,662 237.68,670 241.87,678 246.07,686 250.27,694 254.48,702 258.68,710 262.89,718 267.10,726 271.31,734 275.53,742 279.75,750 283.96,758 288.18,766 292.40,774 296.63,782 300.85,790 305.07,798 309.30,806 313.52,814 317.75,822 321.98,830 326.21,838 330.44,846 334.67,854 338.90,862 343.13,870 347.36,878"/><polyline transform="translate(-194.2,0)" points="0.09,70 0.33,78 0.71,86 1.23,94 1.90,102 2.71,110 3.65,118 4.73,126 5.95,134 7.30,142 8.78,150 10.39,158 12.11,166 13.96,174 15.92,182 18.00,190 20.18,198 22.47,206 24.86,214 27.35,222 29.93,230 32.60,238 35.35,246 38.19,254 41.11,262 44.10,270 47.16,278 50.29,286 53.49,294 56.74,302 60.06,310 63.42,318 66.85,326 70.32,334 73.83,342 77.39,350 81.00,358 84.64,366 88.32,374 92.03,382 95.78,390 99.55,398 103.36,406 107.20,414 111.05,422 114.94,430 118.84,438 122.77,446 126.72,454 130.69,462 134.67,470 138.67,478 142.69,486 146.72,494 150.76,502 154.82,510 158.89,518 162.97,526 167.06,534 171.16,542 175.27,550 179.38,558 183.51,566 187.64,574 191.78,582 195.93,590 200.08,598 204.24,606 208.40,614 212.57,622 216.75,630 220.93,638 225.11,646 229.29,654 233.48,662 237.68,670 241.87,678 246.07,686 250.27,694 254.48,702 258.68,710 262.89,718 267.10,726 271.31,734 275.53,742 279.75,750 283.96,758 288.18,766 292.40,774 296.63,782 300.85,790 305.07,798 309.30,806 313.52,814 317.75,822 321.98,830 326.21,838 330.44,846 334.67,854 338.90,862 343.13,870 347.36,878"/><polyline transform="translate(-182.2,0)" points="0.09,70 0.33,78 0.71,86 1.23,94 1.90,102 2.71,110 3.65,118 4.73,126 5.95,134 7.30,142 8.78,150 10.39,158 12.11,166 13.96,174 15.92,182 18.00,190 20.18,198 22.47,206 24.86,214 27.35,222 29.93,230 32.60,238 35.35,246 38.19,254 41.11,262 44.10,270 47.16,278 50.29,286 53.49,294 56.74,302 60.06,310 63.42,318 66.85,326 70.32,334 73.83,342 77.39,350 81.00,358 84.64,366 88.32,374 92.03,382 95.78,390 99.55,398 103.36,406 107.20,414 111.05,422 114.94,430 118.84,438 122.77,446 126.72,454 130.69,462 134.67,470 138.67,478 142.69,486 146.72,494 150.76,502 154.82,510 158.89,518 162.97,526 167.06,534 171.16,542 175.27,550 179.38,558 183.51,566 187.64,574 191.78,582 195.93,590 200.08,598 204.24,606 208.40,614 212.57,622 216.75,630 220.93,638 225.11,646 229.29,654 233.48,662 237.68,670 241.87,678 246.07,686 250.27,694 254.48,702 258.68,710 262.89,718 267.10,726 271.31,734 275.53,742 279.75,750 283.96,758 288.18,766 292.40,774 296.63,782 300.85,790 305.07,798 309.30,806 313.52,814 317.75,822 321.98,830 326.21,838 330.44,846 334.67,854 338.90,862 343.13,870 347.36,878"/><polyline transform="translate(-170.2,0)" points="0.09,70 0.33,78 0.71,86 1.23,94 1.90,102 2.71,110 3.65,118 4.73,126 5.95,134 7.30,142 8.78,150 10.39,158 12.11,166 13.96,174 15.92,182 18.00,190 20.18,198 22.47,206 24.86,214 27.35,222 29.93,230 32.60,238 35.35,246 38.19,254 41.11,262 44.10,270 47.16,278 50.29,286 53.49,294 56.74,302 60.06,310 63.42,318 66.85,326 70.32,334 73.83,342 77.39,350 81.00,358 84.64,366 88.32,374 92.03,382 95.78,390 99.55,398 103.36,406 107.20,414 111.05,422 114.94,430 118.84,438 122.77,446 126.72,454 130.69,462 134.67,470 138.67,478 142.69,486 146.72,494 150.76,502 154.82,510 158.89,518 162.97,526 167.06,534 171.16,542 175.27,550 179.38,558 183.51,566 187.64,574 191.78,582 195.93,590 200.08,598 204.24,606 208.40,614 212.57,622 216.75,630 220.93,638 225.11,646 229.29,654 233.48,662 237.68,670 241.87,678 246.07,686 250.27,694 254.48,702 258.68,710 262.89,718 267.10,726 271.31,734 275.53,742 279.75,750 283.96,758 288.18,766 292.40,774 296.63,782 300.85,790 305.07,798 309.30,806 313.52,814 317.75,822 321.98,830 326.21,838 330.44,846 334.67,854 338.90,862 343.13,870 347.36,878"/><polyline transform="translate(-158.2,0)" points="0.09,70 0.33,78 0.71,86 1.23,94 1.90,102 2.71,110 3.65,118 4.73,126 5.95,134 7.30,142 8.78,150 10.39,158 12.11,166 13.96,174 15.92,182 18.00,190 20.18,198 22.47,206 24.86,214 27.35,222 29.93,230 32.60,238 35.35,246 38.19,254 41.11,262 44.10,270 47.16,278 50.29,286 53.49,294 56.74,302 60.06,310 63.42,318 66.85,326 70.32,334 73.83,342 77.39,350 81.00,358 84.64,366 88.32,374 92.03,382 95.78,390 99.55,398 103.36,406 107.20,414 111.05,422 114.94,430 118.84,438 122.77,446 126.72,454 130.69,462 134.67,470 138.67,478 142.69,486 146.72,494 150.76,502 154.82,510 158.89,518 162.97,526 167.06,534 171.16,542 175.27,550 179.38,558 183.51,566 187.64,574 191.78,582 195.93,590 200.08,598 204.24,606 208.40,614 212.57,622 216.75,630 220.93,638 225.11,646 229.29,654 233.48,662 237.68,670 241.87,678 246.07,686 250.27,694 254.48,702 258.68,710 262.89,718 267.10,726 271.31,734 275.53,742 279.75,750 283.96,758 288.18,766 292.40,774 296.63,782 300.85,790 305.07,798 309.30,806 313.52,814 317.75,822 321.98,830 326.21,838 330.44,846 334.67,854 338.90,862 343.13,870 347.36,878"/><polyline transform="translate(-146.2,0)" points="0.09,70 0.33,78 0.71,86 1.23,94 1.90,102 2.71,110 3.65,118 4.73,126 5.95,134 7.30,142 8.78,150 10.39,158 12.11,166 13.96,174 15.92,182 18.00,190 20.18,198 22.47,206 24.86,214 27.35,222 29.93,230 32.60,238 35.35,246 38.19,254 41.11,262 44.10,270 47.16,278 50.29,286 53.49,294 56.74,302 60.06,310 63.42,318 66.85,326 70.32,334 73.83,342 77.39,350 81.00,358 84.64,366 88.32,374 92.03,382 95.78,390 99.55,398 103.36,406 107.20,414 111.05,422 114.94,430 118.84,438 122.77,446 126.72,454 130.69,462 134.67,470 138.67,478 142.69,486 146.72,494 150.76,502 154.82,510 158.89,518 162.97,526 167.06,534 171.16,542 175.27,550 179.38,558 183.51,566 187.64,574 191.78,582 195.93,590 200.08,598 204.24,606 208.40,614 212.57,622 216.75,630 220.93,638 225.11,646 229.29,654 233.48,662 237.68,670 241.87,678 246.07,686 250.27,694 254.48,702 258.68,710 262.89,718 267.10,726 271.31,734 275.53,742 279.75,750 283.96,758 288.18,766 292.40,774 296.63,782 300.85,790 305.07,798 309.30,806 313.52,814 317.75,822 321.98,830 326.21,838 330.44,846 334.67,854 338.90,862 343.13,870 347.36,878"/><polyline transform="translate(-134.2,0)" points="0.09,70 0.33,78 0.71,86 1.23,94 1.90,102 2.71,110 3.65,118 4.73,126 5.95,134 7.30,142 8.78,150 10.39,158 12.11,166 13.96,174 15.92,182 18.00,190 20.18,198 22.47,206 24.86,214 27.35,222 29.93,230 32.60,238 35.35,246 38.19,254 41.11,262 44.10,270 47.16,278 50.29,286 53.49,294 56.74,302 60.06,310 63.42,318 66.85,326 70.32,334 73.83,342 77.39,350 81.00,358 84.64,366 88.32,374 92.03,382 95.78,390 99.55,398 103.36,406 107.20,414 111.05,422 114.94,430 118.84,438 122.77,446 126.72,454 130.69,462 134.67,470 138.67,478 142.69,486 146.72,494 150.76,502 154.82,510 158.89,518 162.97,526 167.06,534 171.16,542 175.27,550 179.38,558 183.51,566 187.64,574 191.78,582 195.93,590 200.08,598 204.24,606 208.40,614 212.57,622 216.75,630 220.93,638 225.11,646 229.29,654 233.48,662 237.68,670 241.87,678 246.07,686 250.27,694 254.48,702 258.68,710 262.89,718 267.10,726 271.31,734 275.53,742 279.75,750 283.96,758 288.18,766 292.40,774 296.63,782 300.85,790 305.07,798 309.30,806 313.52,814 317.75,822 321.98,830 326.21,838 330.44,846 334.67,854 338.90,862 343.13,870 347.36,878"/><polyline transform="translate(-122.2,0)" points="0.09,70 0.33,78 0.71,86 1.23,94 1.90,102 2.71,110 3.65,118 4.73,126 5.95,134 7.30,142 8.78,150 10.39,158 12.11,166 13.96,174 15.92,182 18.00,190 20.18,198 22.47,206 24.86,214 27.35,222 29.93,230 32.60,238 35.35,246 38.19,254 41.11,262 44.10,270 47.16,278 50.29,286 53.49,294 56.74,302 60.06,310 63.42,318 66.85,326 70.32,334 73.83,342 77.39,350 81.00,358 84.64,366 88.32,374 92.03,382 95.78,390 99.55,398 103.36,406 107.20,414 111.05,422 114.94,430 118.84,438 122.77,446 126.72,454 130.69,462 134.67,470 138.67,478 142.69,486 146.72,494 150.76,502 154.82,510 158.89,518 162.97,526 167.06,534 171.16,542 175.27,550 179.38,558 183.51,566 187.64,574 191.78,582 195.93,590 200.08,598 204.24,606 208.40,614 212.57,622 216.75,630 220.93,638 225.11,646 229.29,654 233.48,662 237.68,670 241.87,678 246.07,686 250.27,694 254.48,702 258.68,710 262.89,718 267.10,726 271.31,734 275.53,742 279.75,750 283.96,758 288.18,766 292.40,774 296.63,782 300.85,790 305.07,798 309.30,806 313.52,814 317.75,822 321.98,830 326.21,838 330.44,846 334.67,854 338.90,862 343.13,870 347.36,878"/><polyline transform="translate(-110.2,0)" points="0.09,70 0.33,78 0.71,86 1.23,94 1.90,102 2.71,110 3.65,118 4.73,126 5.95,134 7.30,142 8.78,150 10.39,158 12.11,166 13.96,174 15.92,182 18.00,190 20.18,198 22.47,206 24.86,214 27.35,222 29.93,230 32.60,238 35.35,246 38.19,254 41.11,262 44.10,270 47.16,278 50.29,286 53.49,294 56.74,302 60.06,310 63.42,318 66.85,326 70.32,334 73.83,342 77.39,350 81.00,358 84.64,366 88.32,374 92.03,382 95.78,390 99.55,398 103.36,406 107.20,414 111.05,422 114.94,430 118.84,438 122.77,446 126.72,454 130.69,462 134.67,470 138.67,478 142.69,486 146.72,494 150.76,502 154.82,510 158.89,518 162.97,526 167.06,534 171.16,542 175.27,550 179.38,558 183.51,566 187.64,574 191.78,582 195.93,590 200.08,598 204.24,606 208.40,614 212.57,622 216.75,630 220.93,638 225.11,646 229.29,654 233.48,662 237.68,670 241.87,678 246.07,686 250.27,694 254.48,702 258.68,710 262.89,718 267.10,726 271.31,734 275.53,742 279.75,750 283.96,758 288.18,766 292.40,774 296.63,782 300.85,790 305.07,798 309.30,806 313.52,814 317.75,822 321.98,830 326.21,838 330.44,846 334.67,854 338.90,862 343.13,870 347.36,878"/><polyline transform="translate(-98.2,0)" points="0.09,70 0.33,78 0.71,86 1.23,94 1.90,102 2.71,110 3.65,118 4.73,126 5.95,134 7.30,142 8.78,150 10.39,158 12.11,166 13.96,174 15.92,182 18.00,190 20.18,198 22.47,206 24.86,214 27.35,222 29.93,230 32.60,238 35.35,246 38.19,254 41.11,262 44.10,270 47.16,278 50.29,286 53.49,294 56.74,302 60.06,310 63.42,318 66.85,326 70.32,334 73.83,342 77.39,350 81.00,358 84.64,366 88.32,374 92.03,382 95.78,390 99.55,398 103.36,406 107.20,414 111.05,422 114.94,430 118.84,438 122.77,446 126.72,454 130.69,462 134.67,470 138.67,478 142.69,486 146.72,494 150.76,502 154.82,510 158.89,518 162.97,526 167.06,534 171.16,542 175.27,550 179.38,558 183.51,566 187.64,574 191.78,582 195.93,590 200.08,598 204.24,606 208.40,614 212.57,622 216.75,630 220.93,638 225.11,646 229.29,654 233.48,662 237.68,670 241.87,678 246.07,686 250.27,694 254.48,702 258.68,710 262.89,718 267.10,726 271.31,734 275.53,742 279.75,750 283.96,758 288.18,766 292.40,774 296.63,782 300.85,790 305.07,798 309.30,806 313.52,814 317.75,822 321.98,830 326.21,838 330.44,846 334.67,854 338.90,862 343.13,870 347.36,878"/><polyline transform="translate(-86.2,0)" points="0.09,70 0.33,78 0.71,86 1.23,94 1.90,102 2.71,110 3.65,118 4.73,126 5.95,134 7.30,142 8.78,150 10.39,158 12.11,166 13.96,174 15.92,182 18.00,190 20.18,198 22.47,206 24.86,214 27.35,222 29.93,230 32.60,238 35.35,246 38.19,254 41.11,262 44.10,270 47.16,278 50.29,286 53.49,294 56.74,302 60.06,310 63.42,318 66.85,326 70.32,334 73.83,342 77.39,350 81.00,358 84.64,366 88.32,374 92.03,382 95.78,390 99.55,398 103.36,406 107.20,414 111.05,422 114.94,430 118.84,438 122.77,446 126.72,454 130.69,462 134.67,470 138.67,478 142.69,486 146.72,494 150.76,502 154.82,510 158.89,518 162.97,526 167.06,534 171.16,542 175.27,550 179.38,558 183.51,566 187.64,574 191.78,582 195.93,590 200.08,598 204.24,606 208.40,614 212.57,622 216.75,630 220.93,638 225.11,646 229.29,654 233.48,662 237.68,670 241.87,678 246.07,686 250.27,694 254.48,702 258.68,710 262.89,718 267.10,726 271.31,734 275.53,742 279.75,750 283.96,758 288.18,766 292.40,774 296.63,782 300.85,790 305.07,798 309.30,806 313.52,814 317.75,822 321.98,830 326.21,838 330.44,846 334.67,854 338.90,862 343.13,870 347.36,878"/><polyline transform="translate(-74.2,0)" points="0.09,70 0.33,78 0.71,86 1.23,94 1.90,102 2.71,110 3.65,118 4.73,126 5.95,134 7.30,142 8.78,150 10.39,158 12.11,166 13.96,174 15.92,182 18.00,190 20.18,198 22.47,206 24.86,214 27.35,222 29.93,230 32.60,238 35.35,246 38.19,254 41.11,262 44.10,270 47.16,278 50.29,286 53.49,294 56.74,302 60.06,310 63.42,318 66.85,326 70.32,334 73.83,342 77.39,350 81.00,358 84.64,366 88.32,374 92.03,382 95.78,390 99.55,398 103.36,406 107.20,414 111.05,422 114.94,430 118.84,438 122.77,446 126.72,454 130.69,462 134.67,470 138.67,478 142.69,486 146.72,494 150.76,502 154.82,510 158.89,518 162.97,526 167.06,534 171.16,542 175.27,550 179.38,558 183.51,566 187.64,574 191.78,582 195.93,590 200.08,598 204.24,606 208.40,614 212.57,622 216.75,630 220.93,638 225.11,646 229.29,654 233.48,662 237.68,670 241.87,678 246.07,686 250.27,694 254.48,702 258.68,710 262.89,718 267.10,726 271.31,734 275.53,742 279.75,750 283.96,758 288.18,766 292.40,774 296.63,782 300.85,790 305.07,798 309.30,806 313.52,814 317.75,822 321.98,830 326.21,838 330.44,846 334.67,854 338.90,862 343.13,870 347.36,878"/><polyline transform="translate(-62.2,0)" points="0.09,70 0.33,78 0.71,86 1.23,94 1.90,102 2.71,110 3.65,118 4.73,126 5.95,134 7.30,142 8.78,150 10.39,158 12.11,166 13.96,174 15.92,182 18.00,190 20.18,198 22.47,206 24.86,214 27.35,222 29.93,230 32.60,238 35.35,246 38.19,254 41.11,262 44.10,270 47.16,278 50.29,286 53.49,294 56.74,302 60.06,310 63.42,318 66.85,326 70.32,334 73.83,342 77.39,350 81.00,358 84.64,366 88.32,374 92.03,382 95.78,390 99.55,398 103.36,406 107.20,414 111.05,422 114.94,430 118.84,438 122.77,446 126.72,454 130.69,462 134.67,470 138.67,478 142.69,486 146.72,494 150.76,502 154.82,510 158.89,518 162.97,526 167.06,534 171.16,542 175.27,550 179.38,558 183.51,566 187.64,574 191.78,582 195.93,590 200.08,598 204.24,606 208.40,614 212.57,622 216.75,630 220.93,638 225.11,646 229.29,654 233.48,662 237.68,670 241.87,678 246.07,686 250.27,694 254.48,702 258.68,710 262.89,718 267.10,726 271.31,734 275.53,742 279.75,750 283.96,758 288.18,766 292.40,774 296.63,782 300.85,790 305.07,798 309.30,806 313.52,814 317.75,822 321.98,830 326.21,838 330.44,846 334.67,854 338.90,862 343.13,870 347.36,878"/><polyline transform="translate(-50.2,0)" points="0.09,70 0.33,78 0.71,86 1.23,94 1.90,102 2.71,110 3.65,118 4.73,126 5.95,134 7.30,142 8.78,150 10.39,158 12.11,166 13.96,174 15.92,182 18.00,190 20.18,198 22.47,206 24.86,214 27.35,222 29.93,230 32.60,238 35.35,246 38.19,254 41.11,262 44.10,270 47.16,278 50.29,286 53.49,294 56.74,302 60.06,310 63.42,318 66.85,326 70.32,334 73.83,342 77.39,350 81.00,358 84.64,366 88.32,374 92.03,382 95.78,390 99.55,398 103.36,406 107.20,414 111.05,422 114.94,430 118.84,438 122.77,446 126.72,454 130.69,462 134.67,470 138.67,478 142.69,486 146.72,494 150.76,502 154.82,510 158.89,518 162.97,526 167.06,534 171.16,542 175.27,550 179.38,558 183.51,566 187.64,574 191.78,582 195.93,590 200.08,598 204.24,606 208.40,614 212.57,622 216.75,630 220.93,638 225.11,646 229.29,654 233.48,662 237.68,670 241.87,678 246.07,686 250.27,694 254.48,702 258.68,710 262.89,718 267.10,726 271.31,734 275.53,742 279.75,750 283.96,758 288.18,766 292.40,774 296.63,782 300.85,790 305.07,798 309.30,806 313.52,814 317.75,822 321.98,830 326.21,838 330.44,846 334.67,854 338.90,862 343.13,870 347.36,878"/><polyline transform="translate(-38.2,0)" points="0.09,70 0.33,78 0.71,86 1.23,94 1.90,102 2.71,110 3.65,118 4.73,126 5.95,134 7.30,142 8.78,150 10.39,158 12.11,166 13.96,174 15.92,182 18.00,190 20.18,198 22.47,206 24.86,214 27.35,222 29.93,230 32.60,238 35.35,246 38.19,254 41.11,262 44.10,270 47.16,278 50.29,286 53.49,294 56.74,302 60.06,310 63.42,318 66.85,326 70.32,334 73.83,342 77.39,350 81.00,358 84.64,366 88.32,374 92.03,382 95.78,390 99.55,398 103.36,406 107.20,414 111.05,422 114.94,430 118.84,438 122.77,446 126.72,454 130.69,462 134.67,470 138.67,478 142.69,486 146.72,494 150.76,502 154.82,510 158.89,518 162.97,526 167.06,534 171.16,542 175.27,550 179.38,558 183.51,566 187.64,574 191.78,582 195.93,590 200.08,598 204.24,606 208.40,614 212.57,622 216.75,630 220.93,638 225.11,646 229.29,654 233.48,662 237.68,670 241.87,678 246.07,686 250.27,694 254.48,702 258.68,710 262.89,718 267.10,726 271.31,734 275.53,742 279.75,750 283.96,758 288.18,766 292.40,774 296.63,782 300.85,790 305.07,798 309.30,806 313.52,814 317.75,822 321.98,830 326.21,838 330.44,846 334.67,854 338.90,862 343.13,870 347.36,878"/><polyline transform="translate(-26.2,0)" points="0.09,70 0.33,78 0.71,86 1.23,94 1.90,102 2.71,110 3.65,118 4.73,126 5.95,134 7.30,142 8.78,150 10.39,158 12.11,166 13.96,174 15.92,182 18.00,190 20.18,198 22.47,206 24.86,214 27.35,222 29.93,230 32.60,238 35.35,246 38.19,254 41.11,262 44.10,270 47.16,278 50.29,286 53.49,294 56.74,302 60.06,310 63.42,318 66.85,326 70.32,334 73.83,342 77.39,350 81.00,358 84.64,366 88.32,374 92.03,382 95.78,390 99.55,398 103.36,406 107.20,414 111.05,422 114.94,430 118.84,438 122.77,446 126.72,454 130.69,462 134.67,470 138.67,478 142.69,486 146.72,494 150.76,502 154.82,510 158.89,518 162.97,526 167.06,534 171.16,542 175.27,550 179.38,558 183.51,566 187.64,574 191.78,582 195.93,590 200.08,598 204.24,606 208.40,614 212.57,622 216.75,630 220.93,638 225.11,646 229.29,654 233.48,662 237.68,670 241.87,678 246.07,686 250.27,694 254.48,702 258.68,710 262.89,718 267.10,726 271.31,734 275.53,742 279.75,750 283.96,758 288.18,766 292.40,774 296.63,782 300.85,790 305.07,798 309.30,806 313.52,814 317.75,822 321.98,830 326.21,838 330.44,846 334.67,854 338.90,862 343.13,870 347.36,878"/><polyline transform="translate(-14.2,0)" points="0.09,70 0.33,78 0.71,86 1.23,94 1.90,102 2.71,110 3.65,118 4.73,126 5.95,134 7.30,142 8.78,150 10.39,158 12.11,166 13.96,174 15.92,182 18.00,190 20.18,198 22.47,206 24.86,214 27.35,222 29.93,230 32.60,238 35.35,246 38.19,254 41.11,262 44.10,270 47.16,278 50.29,286 53.49,294 56.74,302 60.06,310 63.42,318 66.85,326 70.32,334 73.83,342 77.39,350 81.00,358 84.64,366 88.32,374 92.03,382 95.78,390 99.55,398 103.36,406 107.20,414 111.05,422 114.94,430 118.84,438 122.77,446 126.72,454 130.69,462 134.67,470 138.67,478 142.69,486 146.72,494 150.76,502 154.82,510 158.89,518 162.97,526 167.06,534 171.16,542 175.27,550 179.38,558 183.51,566 187.64,574 191.78,582 195.93,590 200.08,598 204.24,606 208.40,614 212.57,622 216.75,630 220.93,638 225.11,646 229.29,654 233.48,662 237.68,670 241.87,678 246.07,686 250.27,694 254.48,702 258.68,710 262.89,718 267.10,726 271.31,734 275.53,742 279.75,750 283.96,758 288.18,766 292.40,774 296.63,782 300.85,790 305.07,798 309.30,806 313.52,814 317.75,822 321.98,830 326.21,838 330.44,846 334.67,854 338.90,862 343.13,870 347.36,878"/><polyline transform="translate(-2.2,0)" points="0.09,70 0.33,78 0.71,86 1.23,94 1.90,102 2.71,110 3.65,118 4.73,126 5.95,134 7.30,142 8.78,150 10.39,158 12.11,166 13.96,174 15.92,182 18.00,190 20.18,198 22.47,206 24.86,214 27.35,222 29.93,230 32.60,238 35.35,246 38.19,254 41.11,262 44.10,270 47.16,278 50.29,286 53.49,294 56.74,302 60.06,310 63.42,318 66.85,326 70.32,334 73.83,342 77.39,350 81.00,358 84.64,366 88.32,374 92.03,382 95.78,390 99.55,398 103.36,406 107.20,414 111.05,422 114.94,430 118.84,438 122.77,446 126.72,454 130.69,462 134.67,470 138.67,478 142.69,486 146.72,494 150.76,502 154.82,510 158.89,518 162.97,526 167.06,534 171.16,542 175.27,550 179.38,558 183.51,566 187.64,574 191.78,582 195.93,590 200.08,598 204.24,606 208.40,614 212.57,622 216.75,630 220.93,638 225.11,646 229.29,654 233.48,662 237.68,670 241.87,678 246.07,686 250.27,694 254.48,702 258.68,710 262.89,718 267.10,726 271.31,734 275.53,742 279.75,750 283.96,758 288.18,766 292.40,774 296.63,782 300.85,790 305.07,798 309.30,806 313.52,814 317.75,822 321.98,830 326.21,838 330.44,846 334.67,854 338.90,862 343.13,870 347.36,878"/><polyline transform="translate(9.8,0)" points="0.09,70 0.33,78 0.71,86 1.23,94 1.90,102 2.71,110 3.65,118 4.73,126 5.95,134 7.30,142 8.78,150 10.39,158 12.11,166 13.96,174 15.92,182 18.00,190 20.18,198 22.47,206 24.86,214 27.35,222 29.93,230 32.60,238 35.35,246 38.19,254 41.11,262 44.10,270 47.16,278 50.29,286 53.49,294 56.74,302 60.06,310 63.42,318 66.85,326 70.32,334 73.83,342 77.39,350 81.00,358 84.64,366 88.32,374 92.03,382 95.78,390 99.55,398 103.36,406 107.20,414 111.05,422 114.94,430 118.84,438 122.77,446 126.72,454 130.69,462 134.67,470 138.67,478 142.69,486 146.72,494 150.76,502 154.82,510 158.89,518 162.97,526 167.06,534 171.16,542 175.27,550 179.38,558 183.51,566 187.64,574 191.78,582 195.93,590 200.08,598 204.24,606 208.40,614 212.57,622 216.75,630 220.93,638 225.11,646 229.29,654 233.48,662 237.68,670 241.87,678 246.07,686 250.27,694 254.48,702 258.68,710 262.89,718 267.10,726 271.31,734 275.53,742 279.75,750 283.96,758 288.18,766 292.40,774 296.63,782 300.85,790 305.07,798 309.30,806 313.52,814 317.75,822 321.98,830 326.21,838 330.44,846 334.67,854 338.90,862 343.13,870 347.36,878"/><polyline transform="translate(21.8,0)" points="0.09,70 0.33,78 0.71,86 1.23,94 1.90,102 2.71,110 3.65,118 4.73,126 5.95,134 7.30,142 8.78,150 10.39,158 12.11,166 13.96,174 15.92,182 18.00,190 20.18,198 22.47,206 24.86,214 27.35,222 29.93,230 32.60,238 35.35,246 38.19,254 41.11,262 44.10,270 47.16,278 50.29,286 53.49,294 56.74,302 60.06,310 63.42,318 66.85,326 70.32,334 73.83,342 77.39,350 81.00,358 84.64,366 88.32,374 92.03,382 95.78,390 99.55,398 103.36,406 107.20,414 111.05,422 114.94,430 118.84,438 122.77,446 126.72,454 130.69,462 134.67,470 138.67,478 142.69,486 146.72,494 150.76,502 154.82,510 158.89,518 162.97,526 167.06,534 171.16,542 175.27,550 179.38,558 183.51,566 187.64,574 191.78,582 195.93,590 200.08,598 204.24,606 208.40,614 212.57,622 216.75,630 220.93,638 225.11,646 229.29,654 233.48,662 237.68,670 241.87,678 246.07,686 250.27,694 254.48,702 258.68,710 262.89,718 267.10,726 271.31,734 275.53,742 279.75,750 283.96,758 288.18,766 292.40,774 296.63,782 300.85,790 305.07,798 309.30,806 313.52,814 317.75,822 321.98,830 326.21,838 330.44,846 334.67,854 338.90,862 343.13,870 347.36,878"/><polyline transform="translate(33.8,0)" points="0.09,70 0.33,78 0.71,86 1.23,94 1.90,102 2.71,110 3.65,118 4.73,126 5.95,134 7.30,142 8.78,150 10.39,158 12.11,166 13.96,174 15.92,182 18.00,190 20.18,198 22.47,206 24.86,214 27.35,222 29.93,230 32.60,238 35.35,246 38.19,254 41.11,262 44.10,270 47.16,278 50.29,286 53.49,294 56.74,302 60.06,310 63.42,318 66.85,326 70.32,334 73.83,342 77.39,350 81.00,358 84.64,366 88.32,374 92.03,382 95.78,390 99.55,398 103.36,406 107.20,414 111.05,422 114.94,430 118.84,438 122.77,446 126.72,454 130.69,462 134.67,470 138.67,478 142.69,486 146.72,494 150.76,502 154.82,510 158.89,518 162.97,526 167.06,534 171.16,542 175.27,550 179.38,558 183.51,566 187.64,574 191.78,582 195.93,590 200.08,598 204.24,606 208.40,614 212.57,622 216.75,630 220.93,638 225.11,646 229.29,654 233.48,662 237.68,670 241.87,678 246.07,686 250.27,694 254.48,702 258.68,710 262.89,718 267.10,726 271.31,734 275.53,742 279.75,750 283.96,758 288.18,766 292.40,774 296.63,782 300.85,790 305.07,798 309.30,806 313.52,814 317.75,822 321.98,830 326.21,838 330.44,846 334.67,854 338.90,862 343.13,870 347.36,878"/><polyline transform="translate(45.8,0)" points="0.09,70 0.33,78 0.71,86 1.23,94 1.90,102 2.71,110 3.65,118 4.73,126 5.95,134 7.30,142 8.78,150 10.39,158 12.11,166 13.96,174 15.92,182 18.00,190 20.18,198 22.47,206 24.86,214 27.35,222 29.93,230 32.60,238 35.35,246 38.19,254 41.11,262 44.10,270 47.16,278 50.29,286 53.49,294 56.74,302 60.06,310 63.42,318 66.85,326 70.32,334 73.83,342 77.39,350 81.00,358 84.64,366 88.32,374 92.03,382 95.78,390 99.55,398 103.36,406 107.20,414 111.05,422 114.94,430 118.84,438 122.77,446 126.72,454 130.69,462 134.67,470 138.67,478 142.69,486 146.72,494 150.76,502 154.82,510 158.89,518 162.97,526 167.06,534 171.16,542 175.27,550 179.38,558 183.51,566 187.64,574 191.78,582 195.93,590 200.08,598 204.24,606 208.40,614 212.57,622 216.75,630 220.93,638 225.11,646 229.29,654 233.48,662 237.68,670 241.87,678 246.07,686 250.27,694 254.48,702 258.68,710 262.89,718 267.10,726 271.31,734 275.53,742 279.75,750 283.96,758 288.18,766 292.40,774 296.63,782 300.85,790 305.07,798 309.30,806 313.52,814 317.75,822 321.98,830 326.21,838 330.44,846 334.67,854 338.90,862 343.13,870 347.36,878"/><polyline transform="translate(57.8,0)" points="0.09,70 0.33,78 0.71,86 1.23,94 1.90,102 2.71,110 3.65,118 4.73,126 5.95,134 7.30,142 8.78,150 10.39,158 12.11,166 13.96,174 15.92,182 18.00,190 20.18,198 22.47,206 24.86,214 27.35,222 29.93,230 32.60,238 35.35,246 38.19,254 41.11,262 44.10,270 47.16,278 50.29,286 53.49,294 56.74,302 60.06,310 63.42,318 66.85,326 70.32,334 73.83,342 77.39,350 81.00,358 84.64,366 88.32,374 92.03,382 95.78,390 99.55,398 103.36,406 107.20,414 111.05,422 114.94,430 118.84,438 122.77,446 126.72,454 130.69,462 134.67,470 138.67,478 142.69,486 146.72,494 150.76,502 154.82,510 158.89,518 162.97,526 167.06,534 171.16,542 175.27,550 179.38,558 183.51,566 187.64,574 191.78,582 195.93,590 200.08,598 204.24,606 208.40,614 212.57,622 216.75,630 220.93,638 225.11,646 229.29,654 233.48,662 237.68,670 241.87,678 246.07,686 250.27,694 254.48,702 258.68,710 262.89,718 267.10,726 271.31,734 275.53,742 279.75,750 283.96,758 288.18,766 292.40,774 296.63,782 300.85,790 305.07,798 309.30,806 313.52,814 317.75,822 321.98,830 326.21,838 330.44,846 334.67,854 338.90,862 343.13,870 347.36,878"/><polyline transform="translate(69.8,0)" points="0.09,70 0.33,78 0.71,86 1.23,94 1.90,102 2.71,110 3.65,118 4.73,126 5.95,134 7.30,142 8.78,150 10.39,158 12.11,166 13.96,174 15.92,182 18.00,190 20.18,198 22.47,206 24.86,214 27.35,222 29.93,230 32.60,238 35.35,246 38.19,254 41.11,262 44.10,270 47.16,278 50.29,286 53.49,294 56.74,302 60.06,310 63.42,318 66.85,326 70.32,334 73.83,342 77.39,350 81.00,358 84.64,366 88.32,374 92.03,382 95.78,390 99.55,398 103.36,406 107.20,414 111.05,422 114.94,430 118.84,438 122.77,446 126.72,454 130.69,462 134.67,470 138.67,478 142.69,486 146.72,494 150.76,502 154.82,510 158.89,518 162.97,526 167.06,534 171.16,542 175.27,550 179.38,558 183.51,566 187.64,574 191.78,582 195.93,590 200.08,598 204.24,606 208.40,614 212.57,622 216.75,630 220.93,638 225.11,646 229.29,654 233.48,662 237.68,670 241.87,678 246.07,686 250.27,694 254.48,702 258.68,710 262.89,718 267.10,726 271.31,734 275.53,742 279.75,750 283.96,758 288.18,766 292.40,774 296.63,782 300.85,790 305.07,798 309.30,806 313.52,814 317.75,822 321.98,830 326.21,838 330.44,846 334.67,854 338.90,862 343.13,870 347.36,878"/><polyline transform="translate(81.8,0)" points="0.09,70 0.33,78 0.71,86 1.23,94 1.90,102 2.71,110 3.65,118 4.73,126 5.95,134 7.30,142 8.78,150 10.39,158 12.11,166 13.96,174 15.92,182 18.00,190 20.18,198 22.47,206 24.86,214 27.35,222 29.93,230 32.60,238 35.35,246 38.19,254 41.11,262 44.10,270 47.16,278 50.29,286 53.49,294 56.74,302 60.06,310 63.42,318 66.85,326 70.32,334 73.83,342 77.39,350 81.00,358 84.64,366 88.32,374 92.03,382 95.78,390 99.55,398 103.36,406 107.20,414 111.05,422 114.94,430 118.84,438 122.77,446 126.72,454 130.69,462 134.67,470 138.67,478 142.69,486 146.72,494 150.76,502 154.82,510 158.89,518 162.97,526 167.06,534 171.16,542 175.27,550 179.38,558 183.51,566 187.64,574 191.78,582 195.93,590 200.08,598 204.24,606 208.40,614 212.57,622 216.75,630 220.93,638 225.11,646 229.29,654 233.48,662 237.68,670 241.87,678 246.07,686 250.27,694 254.48,702 258.68,710 262.89,718 267.10,726 271.31,734 275.53,742 279.75,750 283.96,758 288.18,766 292.40,774 296.63,782 300.85,790 305.07,798 309.30,806 313.52,814 317.75,822 321.98,830 326.21,838 330.44,846 334.67,854 338.90,862 343.13,870 347.36,878"/><polyline transform="translate(93.8,0)" points="0.09,70 0.33,78 0.71,86 1.23,94 1.90,102 2.71,110 3.65,118 4.73,126 5.95,134 7.30,142 8.78,150 10.39,158 12.11,166 13.96,174 15.92,182 18.00,190 20.18,198 22.47,206 24.86,214 27.35,222 29.93,230 32.60,238 35.35,246 38.19,254 41.11,262 44.10,270 47.16,278 50.29,286 53.49,294 56.74,302 60.06,310 63.42,318 66.85,326 70.32,334 73.83,342 77.39,350 81.00,358 84.64,366 88.32,374 92.03,382 95.78,390 99.55,398 103.36,406 107.20,414 111.05,422 114.94,430 118.84,438 122.77,446 126.72,454 130.69,462 134.67,470 138.67,478 142.69,486 146.72,494 150.76,502 154.82,510 158.89,518 162.97,526 167.06,534 171.16,542 175.27,550 179.38,558 183.51,566 187.64,574 191.78,582 195.93,590 200.08,598 204.24,606 208.40,614 212.57,622 216.75,630 220.93,638 225.11,646 229.29,654 233.48,662 237.68,670 241.87,678 246.07,686 250.27,694 254.48,702 258.68,710 262.89,718 267.10,726 271.31,734 275.53,742 279.75,750 283.96,758 288.18,766 292.40,774 296.63,782 300.85,790 305.07,798 309.30,806 313.52,814 317.75,822 321.98,830 326.21,838 330.44,846 334.67,854 338.90,862 343.13,870 347.36,878"/><polyline transform="translate(105.8,0)" points="0.09,70 0.33,78 0.71,86 1.23,94 1.90,102 2.71,110 3.65,118 4.73,126 5.95,134 7.30,142 8.78,150 10.39,158 12.11,166 13.96,174 15.92,182 18.00,190 20.18,198 22.47,206 24.86,214 27.35,222 29.93,230 32.60,238 35.35,246 38.19,254 41.11,262 44.10,270 47.16,278 50.29,286 53.49,294 56.74,302 60.06,310 63.42,318 66.85,326 70.32,334 73.83,342 77.39,350 81.00,358 84.64,366 88.32,374 92.03,382 95.78,390 99.55,398 103.36,406 107.20,414 111.05,422 114.94,430 118.84,438 122.77,446 126.72,454 130.69,462 134.67,470 138.67,478 142.69,486 146.72,494 150.76,502 154.82,510 158.89,518 162.97,526 167.06,534 171.16,542 175.27,550 179.38,558 183.51,566 187.64,574 191.78,582 195.93,590 200.08,598 204.24,606 208.40,614 212.57,622 216.75,630 220.93,638 225.11,646 229.29,654 233.48,662 237.68,670 241.87,678 246.07,686 250.27,694 254.48,702 258.68,710 262.89,718 267.10,726 271.31,734 275.53,742 279.75,750 283.96,758 288.18,766 292.40,774 296.63,782 300.85,790 305.07,798 309.30,806 313.52,814 317.75,822 321.98,830 326.21,838 330.44,846 334.67,854 338.90,862 343.13,870 347.36,878"/><polyline transform="translate(117.8,0)" points="0.09,70 0.33,78 0.71,86 1.23,94 1.90,102 2.71,110 3.65,118 4.73,126 5.95,134 7.30,142 8.78,150 10.39,158 12.11,166 13.96,174 15.92,182 18.00,190 20.18,198 22.47,206 24.86,214 27.35,222 29.93,230 32.60,238 35.35,246 38.19,254 41.11,262 44.10,270 47.16,278 50.29,286 53.49,294 56.74,302 60.06,310 63.42,318 66.85,326 70.32,334 73.83,342 77.39,350 81.00,358 84.64,366 88.32,374 92.03,382 95.78,390 99.55,398 103.36,406 107.20,414 111.05,422 114.94,430 118.84,438 122.77,446 126.72,454 130.69,462 134.67,470 138.67,478 142.69,486 146.72,494 150.76,502 154.82,510 158.89,518 162.97,526 167.06,534 171.16,542 175.27,550 179.38,558 183.51,566 187.64,574 191.78,582 195.93,590 200.08,598 204.24,606 208.40,614 212.57,622 216.75,630 220.93,638 225.11,646 229.29,654 233.48,662 237.68,670 241.87,678 246.07,686 250.27,694 254.48,702 258.68,710 262.89,718 267.10,726 271.31,734 275.53,742 279.75,750 283.96,758 288.18,766 292.40,774 296.63,782 300.85,790 305.07,798 309.30,806 313.52,814 317.75,822 321.98,830 326.21,838 330.44,846 334.67,854 338.90,862 343.13,870 347.36,878"/><polyline transform="translate(129.8,0)" points="0.09,70 0.33,78 0.71,86 1.23,94 1.90,102 2.71,110 3.65,118 4.73,126 5.95,134 7.30,142 8.78,150 10.39,158 12.11,166 13.96,174 15.92,182 18.00,190 20.18,198 22.47,206 24.86,214 27.35,222 29.93,230 32.60,238 35.35,246 38.19,254 41.11,262 44.10,270 47.16,278 50.29,286 53.49,294 56.74,302 60.06,310 63.42,318 66.85,326 70.32,334 73.83,342 77.39,350 81.00,358 84.64,366 88.32,374 92.03,382 95.78,390 99.55,398 103.36,406 107.20,414 111.05,422 114.94,430 118.84,438 122.77,446 126.72,454 130.69,462 134.67,470 138.67,478 142.69,486 146.72,494 150.76,502 154.82,510 158.89,518 162.97,526 167.06,534 171.16,542 175.27,550 179.38,558 183.51,566 187.64,574 191.78,582 195.93,590 200.08,598 204.24,606 208.40,614 212.57,622 216.75,630 220.93,638 225.11,646 229.29,654 233.48,662 237.68,670 241.87,678 246.07,686 250.27,694 254.48,702 258.68,710 262.89,718 267.10,726 271.31,734 275.53,742 279.75,750 283.96,758 288.18,766 292.40,774 296.63,782 300.85,790 305.07,798 309.30,806 313.52,814 317.75,822 321.98,830 326.21,838 330.44,846 334.67,854 338.90,862 343.13,870 347.36,878"/><polyline transform="translate(141.8,0)" points="0.09,70 0.33,78 0.71,86 1.23,94 1.90,102 2.71,110 3.65,118 4.73,126 5.95,134 7.30,142 8.78,150 10.39,158 12.11,166 13.96,174 15.92,182 18.00,190 20.18,198 22.47,206 24.86,214 27.35,222 29.93,230 32.60,238 35.35,246 38.19,254 41.11,262 44.10,270 47.16,278 50.29,286 53.49,294 56.74,302 60.06,310 63.42,318 66.85,326 70.32,334 73.83,342 77.39,350 81.00,358 84.64,366 88.32,374 92.03,382 95.78,390 99.55,398 103.36,406 107.20,414 111.05,422 114.94,430 118.84,438 122.77,446 126.72,454 130.69,462 134.67,470 138.67,478 142.69,486 146.72,494 150.76,502 154.82,510 158.89,518 162.97,526 167.06,534 171.16,542 175.27,550 179.38,558 183.51,566 187.64,574 191.78,582 195.93,590 200.08,598 204.24,606 208.40,614 212.57,622 216.75,630 220.93,638 225.11,646 229.29,654 233.48,662 237.68,670 241.87,678 246.07,686 250.27,694 254.48,702 258.68,710 262.89,718 267.10,726 271.31,734 275.53,742 279.75,750 283.96,758 288.18,766 292.40,774 296.63,782 300.85,790 305.07,798 309.30,806 313.52,814 317.75,822 321.98,830 326.21,838 330.44,846 334.67,854 338.90,862 343.13,870 347.36,878"/><polyline transform="translate(153.8,0)" points="0.09,70 0.33,78 0.71,86 1.23,94 1.90,102 2.71,110 3.65,118 4.73,126 5.95,134 7.30,142 8.78,150 10.39,158 12.11,166 13.96,174 15.92,182 18.00,190 20.18,198 22.47,206 24.86,214 27.35,222 29.93,230 32.60,238 35.35,246 38.19,254 41.11,262 44.10,270 47.16,278 50.29,286 53.49,294 56.74,302 60.06,310 63.42,318 66.85,326 70.32,334 73.83,342 77.39,350 81.00,358 84.64,366 88.32,374 92.03,382 95.78,390 99.55,398 103.36,406 107.20,414 111.05,422 114.94,430 118.84,438 122.77,446 126.72,454 130.69,462 134.67,470 138.67,478 142.69,486 146.72,494 150.76,502 154.82,510 158.89,518 162.97,526 167.06,534 171.16,542 175.27,550 179.38,558 183.51,566 187.64,574 191.78,582 195.93,590 200.08,598 204.24,606 208.40,614 212.57,622 216.75,630 220.93,638 225.11,646 229.29,654 233.48,662 237.68,670 241.87,678 246.07,686 250.27,694 254.48,702 258.68,710 262.89,718 267.10,726 271.31,734 275.53,742 279.75,750 283.96,758 288.18,766 292.40,774 296.63,782 300.85,790 305.07,798 309.30,806 313.52,814 317.75,822 321.98,830 326.21,838 330.44,846 334.67,854 338.90,862 343.13,870 347.36,878"/><polyline transform="translate(165.8,0)" points="0.09,70 0.33,78 0.71,86 1.23,94 1.90,102 2.71,110 3.65,118 4.73,126 5.95,134 7.30,142 8.78,150 10.39,158 12.11,166 13.96,174 15.92,182 18.00,190 20.18,198 22.47,206 24.86,214 27.35,222 29.93,230 32.60,238 35.35,246 38.19,254 41.11,262 44.10,270 47.16,278 50.29,286 53.49,294 56.74,302 60.06,310 63.42,318 66.85,326 70.32,334 73.83,342 77.39,350 81.00,358 84.64,366 88.32,374 92.03,382 95.78,390 99.55,398 103.36,406 107.20,414 111.05,422 114.94,430 118.84,438 122.77,446 126.72,454 130.69,462 134.67,470 138.67,478 142.69,486 146.72,494 150.76,502 154.82,510 158.89,518 162.97,526 167.06,534 171.16,542 175.27,550 179.38,558 183.51,566 187.64,574 191.78,582 195.93,590 200.08,598 204.24,606 208.40,614 212.57,622 216.75,630 220.93,638 225.11,646 229.29,654 233.48,662 237.68,670 241.87,678 246.07,686 250.27,694 254.48,702 258.68,710 262.89,718 267.10,726 271.31,734 275.53,742 279.75,750 283.96,758 288.18,766 292.40,774 296.63,782 300.85,790 305.07,798 309.30,806 313.52,814 317.75,822 321.98,830 326.21,838 330.44,846 334.67,854 338.90,862 343.13,870 347.36,878"/><polyline transform="translate(177.8,0)" points="0.09,70 0.33,78 0.71,86 1.23,94 1.90,102 2.71,110 3.65,118 4.73,126 5.95,134 7.30,142 8.78,150 10.39,158 12.11,166 13.96,174 15.92,182 18.00,190 20.18,198 22.47,206 24.86,214 27.35,222 29.93,230 32.60,238 35.35,246 38.19,254 41.11,262 44.10,270 47.16,278 50.29,286 53.49,294 56.74,302 60.06,310 63.42,318 66.85,326 70.32,334 73.83,342 77.39,350 81.00,358 84.64,366 88.32,374 92.03,382 95.78,390 99.55,398 103.36,406 107.20,414 111.05,422 114.94,430 118.84,438 122.77,446 126.72,454 130.69,462 134.67,470 138.67,478 142.69,486 146.72,494 150.76,502 154.82,510 158.89,518 162.97,526 167.06,534 171.16,542 175.27,550 179.38,558 183.51,566 187.64,574 191.78,582 195.93,590 200.08,598 204.24,606 208.40,614 212.57,622 216.75,630 220.93,638 225.11,646 229.29,654 233.48,662 237.68,670 241.87,678 246.07,686 250.27,694 254.48,702 258.68,710 262.89,718 267.10,726 271.31,734 275.53,742 279.75,750 283.96,758 288.18,766 292.40,774 296.63,782 300.85,790 305.07,798 309.30,806 313.52,814 317.75,822 321.98,830 326.21,838 330.44,846 334.67,854 338.90,862 343.13,870 347.36,878"/><polyline transform="translate(189.8,0)" points="0.09,70 0.33,78 0.71,86 1.23,94 1.90,102 2.71,110 3.65,118 4.73,126 5.95,134 7.30,142 8.78,150 10.39,158 12.11,166 13.96,174 15.92,182 18.00,190 20.18,198 22.47,206 24.86,214 27.35,222 29.93,230 32.60,238 35.35,246 38.19,254 41.11,262 44.10,270 47.16,278 50.29,286 53.49,294 56.74,302 60.06,310 63.42,318 66.85,326 70.32,334 73.83,342 77.39,350 81.00,358 84.64,366 88.32,374 92.03,382 95.78,390 99.55,398 103.36,406 107.20,414 111.05,422 114.94,430 118.84,438 122.77,446 126.72,454 130.69,462 134.67,470 138.67,478 142.69,486 146.72,494 150.76,502 154.82,510 158.89,518 162.97,526 167.06,534 171.16,542 175.27,550 179.38,558 183.51,566 187.64,574 191.78,582 195.93,590 200.08,598 204.24,606 208.40,614 212.57,622 216.75,630 220.93,638 225.11,646 229.29,654 233.48,662 237.68,670 241.87,678 246.07,686 250.27,694 254.48,702 258.68,710 262.89,718 267.10,726 271.31,734 275.53,742 279.75,750 283.96,758 288.18,766 292.40,774 296.63,782 300.85,790 305.07,798 309.30,806 313.52,814 317.75,822 321.98,830 326.21,838 330.44,846 334.67,854 338.90,862 343.13,870 347.36,878"/><polyline transform="translate(201.8,0)" points="0.09,70 0.33,78 0.71,86 1.23,94 1.90,102 2.71,110 3.65,118 4.73,126 5.95,134 7.30,142 8.78,150 10.39,158 12.11,166 13.96,174 15.92,182 18.00,190 20.18,198 22.47,206 24.86,214 27.35,222 29.93,230 32.60,238 35.35,246 38.19,254 41.11,262 44.10,270 47.16,278 50.29,286 53.49,294 56.74,302 60.06,310 63.42,318 66.85,326 70.32,334 73.83,342 77.39,350 81.00,358 84.64,366 88.32,374 92.03,382 95.78,390 99.55,398 103.36,406 107.20,414 111.05,422 114.94,430 118.84,438 122.77,446 126.72,454 130.69,462 134.67,470 138.67,478 142.69,486 146.72,494 150.76,502 154.82,510 158.89,518 162.97,526 167.06,534 171.16,542 175.27,550 179.38,558 183.51,566 187.64,574 191.78,582 195.93,590 200.08,598 204.24,606 208.40,614 212.57,622 216.75,630 220.93,638 225.11,646 229.29,654 233.48,662 237.68,670 241.87,678 246.07,686 250.27,694 254.48,702 258.68,710 262.89,718 267.10,726 271.31,734 275.53,742 279.75,750 283.96,758 288.18,766 292.40,774 296.63,782 300.85,790 305.07,798 309.30,806 313.52,814 317.75,822 321.98,830 326.21,838 330.44,846 334.67,854 338.90,862 343.13,870 347.36,878"/><polyline transform="translate(213.8,0)" points="0.09,70 0.33,78 0.71,86 1.23,94 1.90,102 2.71,110 3.65,118 4.73,126 5.95,134 7.30,142 8.78,150 10.39,158 12.11,166 13.96,174 15.92,182 18.00,190 20.18,198 22.47,206 24.86,214 27.35,222 29.93,230 32.60,238 35.35,246 38.19,254 41.11,262 44.10,270 47.16,278 50.29,286 53.49,294 56.74,302 60.06,310 63.42,318 66.85,326 70.32,334 73.83,342 77.39,350 81.00,358 84.64,366 88.32,374 92.03,382 95.78,390 99.55,398 103.36,406 107.20,414 111.05,422 114.94,430 118.84,438 122.77,446 126.72,454 130.69,462 134.67,470 138.67,478 142.69,486 146.72,494 150.76,502 154.82,510 158.89,518 162.97,526 167.06,534 171.16,542 175.27,550 179.38,558 183.51,566 187.64,574 191.78,582 195.93,590 200.08,598 204.24,606 208.40,614 212.57,622 216.75,630 220.93,638 225.11,646 229.29,654 233.48,662 237.68,670 241.87,678 246.07,686 250.27,694 254.48,702 258.68,710 262.89,718 267.10,726 271.31,734 275.53,742 279.75,750 283.96,758 288.18,766 292.40,774 296.63,782 300.85,790 305.07,798 309.30,806 313.52,814 317.75,822 321.98,830 326.21,838 330.44,846 334.67,854 338.90,862 343.13,870 347.36,878"/><polyline transform="translate(225.8,0)" points="0.09,70 0.33,78 0.71,86 1.23,94 1.90,102 2.71,110 3.65,118 4.73,126 5.95,134 7.30,142 8.78,150 10.39,158 12.11,166 13.96,174 15.92,182 18.00,190 20.18,198 22.47,206 24.86,214 27.35,222 29.93,230 32.60,238 35.35,246 38.19,254 41.11,262 44.10,270 47.16,278 50.29,286 53.49,294 56.74,302 60.06,310 63.42,318 66.85,326 70.32,334 73.83,342 77.39,350 81.00,358 84.64,366 88.32,374 92.03,382 95.78,390 99.55,398 103.36,406 107.20,414 111.05,422 114.94,430 118.84,438 122.77,446 126.72,454 130.69,462 134.67,470 138.67,478 142.69,486 146.72,494 150.76,502 154.82,510 158.89,518 162.97,526 167.06,534 171.16,542 175.27,550 179.38,558 183.51,566 187.64,574 191.78,582 195.93,590 200.08,598 204.24,606 208.40,614 212.57,622 216.75,630 220.93,638 225.11,646 229.29,654 233.48,662 237.68,670 241.87,678 246.07,686 250.27,694 254.48,702 258.68,710 262.89,718 267.10,726 271.31,734 275.53,742 279.75,750 283.96,758 288.18,766 292.40,774 296.63,782 300.85,790 305.07,798 309.30,806 313.52,814 317.75,822 321.98,830 326.21,838 330.44,846 334.67,854 338.90,862 343.13,870 347.36,878"/><polyline transform="translate(237.8,0)" points="0.09,70 0.33,78 0.71,86 1.23,94 1.90,102 2.71,110 3.65,118 4.73,126 5.95,134 7.30,142 8.78,150 10.39,158 12.11,166 13.96,174 15.92,182 18.00,190 20.18,198 22.47,206 24.86,214 27.35,222 29.93,230 32.60,238 35.35,246 38.19,254 41.11,262 44.10,270 47.16,278 50.29,286 53.49,294 56.74,302 60.06,310 63.42,318 66.85,326 70.32,334 73.83,342 77.39,350 81.00,358 84.64,366 88.32,374 92.03,382 95.78,390 99.55,398 103.36,406 107.20,414 111.05,422 114.94,430 118.84,438 122.77,446 126.72,454 130.69,462 134.67,470 138.67,478 142.69,486 146.72,494 150.76,502 154.82,510 158.89,518 162.97,526 167.06,534 171.16,542 175.27,550 179.38,558 183.51,566 187.64,574 191.78,582 195.93,590 200.08,598 204.24,606 208.40,614 212.57,622 216.75,630 220.93,638 225.11,646 229.29,654 233.48,662 237.68,670 241.87,678 246.07,686 250.27,694 254.48,702 258.68,710 262.89,718 267.10,726 271.31,734 275.53,742 279.75,750 283.96,758 288.18,766 292.40,774 296.63,782 300.85,790 305.07,798 309.30,806 313.52,814 317.75,822 321.98,830 326.21,838 330.44,846 334.67,854 338.90,862 343.13,870 347.36,878"/><polyline transform="translate(249.8,0)" points="0.09,70 0.33,78 0.71,86 1.23,94 1.90,102 2.71,110 3.65,118 4.73,126 5.95,134 7.30,142 8.78,150 10.39,158 12.11,166 13.96,174 15.92,182 18.00,190 20.18,198 22.47,206 24.86,214 27.35,222 29.93,230 32.60,238 35.35,246 38.19,254 41.11,262 44.10,270 47.16,278 50.29,286 53.49,294 56.74,302 60.06,310 63.42,318 66.85,326 70.32,334 73.83,342 77.39,350 81.00,358 84.64,366 88.32,374 92.03,382 95.78,390 99.55,398 103.36,406 107.20,414 111.05,422 114.94,430 118.84,438 122.77,446 126.72,454 130.69,462 134.67,470 138.67,478 142.69,486 146.72,494 150.76,502 154.82,510 158.89,518 162.97,526 167.06,534 171.16,542 175.27,550 179.38,558 183.51,566 187.64,574 191.78,582 195.93,590 200.08,598 204.24,606 208.40,614 212.57,622 216.75,630 220.93,638 225.11,646 229.29,654 233.48,662 237.68,670 241.87,678 246.07,686 250.27,694 254.48,702 258.68,710 262.89,718 267.10,726 271.31,734 275.53,742 279.75,750 283.96,758 288.18,766 292.40,774 296.63,782 300.85,790 305.07,798 309.30,806 313.52,814 317.75,822 321.98,830 326.21,838 330.44,846 334.67,854 338.90,862 343.13,870 347.36,878"/><polyline transform="translate(261.8,0)" points="0.09,70 0.33,78 0.71,86 1.23,94 1.90,102 2.71,110 3.65,118 4.73,126 5.95,134 7.30,142 8.78,150 10.39,158 12.11,166 13.96,174 15.92,182 18.00,190 20.18,198 22.47,206 24.86,214 27.35,222 29.93,230 32.60,238 35.35,246 38.19,254 41.11,262 44.10,270 47.16,278 50.29,286 53.49,294 56.74,302 60.06,310 63.42,318 66.85,326 70.32,334 73.83,342 77.39,350 81.00,358 84.64,366 88.32,374 92.03,382 95.78,390 99.55,398 103.36,406 107.20,414 111.05,422 114.94,430 118.84,438 122.77,446 126.72,454 130.69,462 134.67,470 138.67,478 142.69,486 146.72,494 150.76,502 154.82,510 158.89,518 162.97,526 167.06,534 171.16,542 175.27,550 179.38,558 183.51,566 187.64,574 191.78,582 195.93,590 200.08,598 204.24,606 208.40,614 212.57,622 216.75,630 220.93,638 225.11,646 229.29,654 233.48,662 237.68,670 241.87,678 246.07,686 250.27,694 254.48,702 258.68,710 262.89,718 267.10,726 271.31,734 275.53,742 279.75,750 283.96,758 288.18,766 292.40,774 296.63,782 300.85,790 305.07,798 309.30,806 313.52,814 317.75,822 321.98,830 326.21,838 330.44,846 334.67,854 338.90,862 343.13,870 347.36,878"/><polyline transform="translate(273.8,0)" points="0.09,70 0.33,78 0.71,86 1.23,94 1.90,102 2.71,110 3.65,118 4.73,126 5.95,134 7.30,142 8.78,150 10.39,158 12.11,166 13.96,174 15.92,182 18.00,190 20.18,198 22.47,206 24.86,214 27.35,222 29.93,230 32.60,238 35.35,246 38.19,254 41.11,262 44.10,270 47.16,278 50.29,286 53.49,294 56.74,302 60.06,310 63.42,318 66.85,326 70.32,334 73.83,342 77.39,350 81.00,358 84.64,366 88.32,374 92.03,382 95.78,390 99.55,398 103.36,406 107.20,414 111.05,422 114.94,430 118.84,438 122.77,446 126.72,454 130.69,462 134.67,470 138.67,478 142.69,486 146.72,494 150.76,502 154.82,510 158.89,518 162.97,526 167.06,534 171.16,542 175.27,550 179.38,558 183.51,566 187.64,574 191.78,582 195.93,590 200.08,598 204.24,606 208.40,614 212.57,622 216.75,630 220.93,638 225.11,646 229.29,654 233.48,662 237.68,670 241.87,678 246.07,686 250.27,694 254.48,702 258.68,710 262.89,718 267.10,726 271.31,734 275.53,742 279.75,750 283.96,758 288.18,766 292.40,774 296.63,782 300.85,790 305.07,798 309.30,806 313.52,814 317.75,822 321.98,830 326.21,838 330.44,846 334.67,854 338.90,862 343.13,870 347.36,878"/><polyline transform="translate(285.8,0)" points="0.09,70 0.33,78 0.71,86 1.23,94 1.90,102 2.71,110 3.65,118 4.73,126 5.95,134 7.30,142 8.78,150 10.39,158 12.11,166 13.96,174 15.92,182 18.00,190 20.18,198 22.47,206 24.86,214 27.35,222 29.93,230 32.60,238 35.35,246 38.19,254 41.11,262 44.10,270 47.16,278 50.29,286 53.49,294 56.74,302 60.06,310 63.42,318 66.85,326 70.32,334 73.83,342 77.39,350 81.00,358 84.64,366 88.32,374 92.03,382 95.78,390 99.55,398 103.36,406 107.20,414 111.05,422 114.94,430 118.84,438 122.77,446 126.72,454 130.69,462 134.67,470 138.67,478 142.69,486 146.72,494 150.76,502 154.82,510 158.89,518 162.97,526 167.06,534 171.16,542 175.27,550 179.38,558 183.51,566 187.64,574 191.78,582 195.93,590 200.08,598 204.24,606 208.40,614 212.57,622 216.75,630 220.93,638 225.11,646 229.29,654 233.48,662 237.68,670 241.87,678 246.07,686 250.27,694 254.48,702 258.68,710 262.89,718 267.10,726 271.31,734 275.53,742 279.75,750 283.96,758 288.18,766 292.40,774 296.63,782 300.85,790 305.07,798 309.30,806 313.52,814 317.75,822 321.98,830 326.21,838 330.44,846 334.67,854 338.90,862 343.13,870 347.36,878"/><polyline transform="translate(297.8,0)" points="0.09,70 0.33,78 0.71,86 1.23,94 1.90,102 2.71,110 3.65,118 4.73,126 5.95,134 7.30,142 8.78,150 10.39,158 12.11,166 13.96,174 15.92,182 18.00,190 20.18,198 22.47,206 24.86,214 27.35,222 29.93,230 32.60,238 35.35,246 38.19,254 41.11,262 44.10,270 47.16,278 50.29,286 53.49,294 56.74,302 60.06,310 63.42,318 66.85,326 70.32,334 73.83,342 77.39,350 81.00,358 84.64,366 88.32,374 92.03,382 95.78,390 99.55,398 103.36,406 107.20,414 111.05,422 114.94,430 118.84,438 122.77,446 126.72,454 130.69,462 134.67,470 138.67,478 142.69,486 146.72,494 150.76,502 154.82,510 158.89,518 162.97,526 167.06,534 171.16,542 175.27,550 179.38,558 183.51,566 187.64,574 191.78,582 195.93,590 200.08,598 204.24,606 208.40,614 212.57,622 216.75,630 220.93,638 225.11,646 229.29,654 233.48,662 237.68,670 241.87,678 246.07,686 250.27,694 254.48,702 258.68,710 262.89,718 267.10,726 271.31,734 275.53,742 279.75,750 283.96,758 288.18,766 292.40,774 296.63,782 300.85,790 305.07,798 309.30,806 313.52,814 317.75,822 321.98,830 326.21,838 330.44,846 334.67,854 338.90,862 343.13,870 347.36,878"/><polyline transform="translate(309.8,0)" points="0.09,70 0.33,78 0.71,86 1.23,94 1.90,102 2.71,110 3.65,118 4.73,126 5.95,134 7.30,142 8.78,150 10.39,158 12.11,166 13.96,174 15.92,182 18.00,190 20.18,198 22.47,206 24.86,214 27.35,222 29.93,230 32.60,238 35.35,246 38.19,254 41.11,262 44.10,270 47.16,278 50.29,286 53.49,294 56.74,302 60.06,310 63.42,318 66.85,326 70.32,334 73.83,342 77.39,350 81.00,358 84.64,366 88.32,374 92.03,382 95.78,390 99.55,398 103.36,406 107.20,414 111.05,422 114.94,430 118.84,438 122.77,446 126.72,454 130.69,462 134.67,470 138.67,478 142.69,486 146.72,494 150.76,502 154.82,510 158.89,518 162.97,526 167.06,534 171.16,542 175.27,550 179.38,558 183.51,566 187.64,574 191.78,582 195.93,590 200.08,598 204.24,606 208.40,614 212.57,622 216.75,630 220.93,638 225.11,646 229.29,654 233.48,662 237.68,670 241.87,678 246.07,686 250.27,694 254.48,702 258.68,710 262.89,718 267.10,726 271.31,734 275.53,742 279.75,750 283.96,758 288.18,766 292.40,774 296.63,782 300.85,790 305.07,798 309.30,806 313.52,814 317.75,822 321.98,830 326.21,838 330.44,846 334.67,854 338.90,862 343.13,870 347.36,878"/><polyline transform="translate(321.8,0)" points="0.09,70 0.33,78 0.71,86 1.23,94 1.90,102 2.71,110 3.65,118 4.73,126 5.95,134 7.30,142 8.78,150 10.39,158 12.11,166 13.96,174 15.92,182 18.00,190 20.18,198 22.47,206 24.86,214 27.35,222 29.93,230 32.60,238 35.35,246 38.19,254 41.11,262 44.10,270 47.16,278 50.29,286 53.49,294 56.74,302 60.06,310 63.42,318 66.85,326 70.32,334 73.83,342 77.39,350 81.00,358 84.64,366 88.32,374 92.03,382 95.78,390 99.55,398 103.36,406 107.20,414 111.05,422 114.94,430 118.84,438 122.77,446 126.72,454 130.69,462 134.67,470 138.67,478 142.69,486 146.72,494 150.76,502 154.82,510 158.89,518 162.97,526 167.06,534 171.16,542 175.27,550 179.38,558 183.51,566 187.64,574 191.78,582 195.93,590 200.08,598 204.24,606 208.40,614 212.57,622 216.75,630 220.93,638 225.11,646 229.29,654 233.48,662 237.68,670 241.87,678 246.07,686 250.27,694 254.48,702 258.68,710 262.89,718 267.10,726 271.31,734 275.53,742 279.75,750 283.96,758 288.18,766 292.40,774 296.63,782 300.85,790 305.07,798 309.30,806 313.52,814 317.75,822 321.98,830 326.21,838 330.44,846 334.67,854 338.90,862 343.13,870 347.36,878"/><polyline transform="translate(333.8,0)" points="0.09,70 0.33,78 0.71,86 1.23,94 1.90,102 2.71,110 3.65,118 4.73,126 5.95,134 7.30,142 8.78,150 10.39,158 12.11,166 13.96,174 15.92,182 18.00,190 20.18,198 22.47,206 24.86,214 27.35,222 29.93,230 32.60,238 35.35,246 38.19,254 41.11,262 44.10,270 47.16,278 50.29,286 53.49,294 56.74,302 60.06,310 63.42,318 66.85,326 70.32,334 73.83,342 77.39,350 81.00,358 84.64,366 88.32,374 92.03,382 95.78,390 99.55,398 103.36,406 107.20,414 111.05,422 114.94,430 118.84,438 122.77,446 126.72,454 130.69,462 134.67,470 138.67,478 142.69,486 146.72,494 150.76,502 154.82,510 158.89,518 162.97,526 167.06,534 171.16,542 175.27,550 179.38,558 183.51,566 187.64,574 191.78,582 195.93,590 200.08,598 204.24,606 208.40,614 212.57,622 216.75,630 220.93,638 225.11,646 229.29,654 233.48,662 237.68,670 241.87,678 246.07,686 250.27,694 254.48,702 258.68,710 262.89,718 267.10,726 271.31,734 275.53,742 279.75,750 283.96,758 288.18,766 292.40,774 296.63,782 300.85,790 305.07,798 309.30,806 313.52,814 317.75,822 321.98,830 326.21,838 330.44,846 334.67,854 338.90,862 343.13,870 347.36,878"/><polyline transform="translate(345.8,0)" points="0.09,70 0.33,78 0.71,86 1.23,94 1.90,102 2.71,110 3.65,118 4.73,126 5.95,134 7.30,142 8.78,150 10.39,158 12.11,166 13.96,174 15.92,182 18.00,190 20.18,198 22.47,206 24.86,214 27.35,222 29.93,230 32.60,238 35.35,246 38.19,254 41.11,262 44.10,270 47.16,278 50.29,286 53.49,294 56.74,302 60.06,310 63.42,318 66.85,326 70.32,334 73.83,342 77.39,350 81.00,358 84.64,366 88.32,374 92.03,382 95.78,390 99.55,398 103.36,406 107.20,414 111.05,422 114.94,430 118.84,438 122.77,446 126.72,454 130.69,462 134.67,470 138.67,478 142.69,486 146.72,494 150.76,502 154.82,510 158.89,518 162.97,526 167.06,534 171.16,542 175.27,550 179.38,558 183.51,566 187.64,574 191.78,582 195.93,590 200.08,598 204.24,606 208.40,614 212.57,622 216.75,630 220.93,638 225.11,646 229.29,654 233.48,662 237.68,670 241.87,678 246.07,686 250.27,694 254.48,702 258.68,710 262.89,718 267.10,726 271.31,734 275.53,742 279.75,750 283.96,758 288.18,766 292.40,774 296.63,782 300.85,790 305.07,798 309.30,806 313.52,814 317.75,822 321.98,830 326.21,838 330.44,846 334.67,854 338.90,862 343.13,870 347.36,878"/><polyline transform="translate(357.8,0)" points="0.09,70 0.33,78 0.71,86 1.23,94 1.90,102 2.71,110 3.65,118 4.73,126 5.95,134 7.30,142 8.78,150 10.39,158 12.11,166 13.96,174 15.92,182 18.00,190 20.18,198 22.47,206 24.86,214 27.35,222 29.93,230 32.60,238 35.35,246 38.19,254 41.11,262 44.10,270 47.16,278 50.29,286 53.49,294 56.74,302 60.06,310 63.42,318 66.85,326 70.32,334 73.83,342 77.39,350 81.00,358 84.64,366 88.32,374 92.03,382 95.78,390 99.55,398 103.36,406 107.20,414 111.05,422 114.94,430 118.84,438 122.77,446 126.72,454 130.69,462 134.67,470 138.67,478 142.69,486 146.72,494 150.76,502 154.82,510 158.89,518 162.97,526 167.06,534 171.16,542 175.27,550 179.38,558 183.51,566 187.64,574 191.78,582 195.93,590 200.08,598 204.24,606 208.40,614 212.57,622 216.75,630 220.93,638 225.11,646 229.29,654 233.48,662 237.68,670 241.87,678 246.07,686 250.27,694 254.48,702 258.68,710 262.89,718 267.10,726 271.31,734 275.53,742 279.75,750 283.96,758 288.18,766 292.40,774 296.63,782 300.85,790 305.07,798 309.30,806 313.52,814 317.75,822 321.98,830 326.21,838 330.44,846 334.67,854 338.90,862 343.13,870 347.36,878"/><polyline transform="translate(369.8,0)" points="0.09,70 0.33,78 0.71,86 1.23,94 1.90,102 2.71,110 3.65,118 4.73,126 5.95,134 7.30,142 8.78,150 10.39,158 12.11,166 13.96,174 15.92,182 18.00,190 20.18,198 22.47,206 24.86,214 27.35,222 29.93,230 32.60,238 35.35,246 38.19,254 41.11,262 44.10,270 47.16,278 50.29,286 53.49,294 56.74,302 60.06,310 63.42,318 66.85,326 70.32,334 73.83,342 77.39,350 81.00,358 84.64,366 88.32,374 92.03,382 95.78,390 99.55,398 103.36,406 107.20,414 111.05,422 114.94,430 118.84,438 122.77,446 126.72,454 130.69,462 134.67,470 138.67,478 142.69,486 146.72,494 150.76,502 154.82,510 158.89,518 162.97,526 167.06,534 171.16,542 175.27,550 179.38,558 183.51,566 187.64,574 191.78,582 195.93,590 200.08,598 204.24,606 208.40,614 212.57,622 216.75,630 220.93,638 225.11,646 229.29,654 233.48,662 237.68,670 241.87,678 246.07,686 250.27,694 254.48,702 258.68,710 262.89,718 267.10,726 271.31,734 275.53,742 279.75,750 283.96,758 288.18,766 292.40,774 296.63,782 300.85,790 305.07,798 309.30,806 313.52,814 317.75,822 321.98,830 326.21,838 330.44,846 334.67,854 338.90,862 343.13,870 347.36,878"/><polyline transform="translate(381.8,0)" points="0.09,70 0.33,78 0.71,86 1.23,94 1.90,102 2.71,110 3.65,118 4.73,126 5.95,134 7.30,142 8.78,150 10.39,158 12.11,166 13.96,174 15.92,182 18.00,190 20.18,198 22.47,206 24.86,214 27.35,222 29.93,230 32.60,238 35.35,246 38.19,254 41.11,262 44.10,270 47.16,278 50.29,286 53.49,294 56.74,302 60.06,310 63.42,318 66.85,326 70.32,334 73.83,342 77.39,350 81.00,358 84.64,366 88.32,374 92.03,382 95.78,390 99.55,398 103.36,406 107.20,414 111.05,422 114.94,430 118.84,438 122.77,446 126.72,454 130.69,462 134.67,470 138.67,478 142.69,486 146.72,494 150.76,502 154.82,510 158.89,518 162.97,526 167.06,534 171.16,542 175.27,550 179.38,558 183.51,566 187.64,574 191.78,582 195.93,590 200.08,598 204.24,606 208.40,614 212.57,622 216.75,630 220.93,638 225.11,646 229.29,654 233.48,662 237.68,670 241.87,678 246.07,686 250.27,694 254.48,702 258.68,710 262.89,718 267.10,726 271.31,734 275.53,742 279.75,750 283.96,758 288.18,766 292.40,774 296.63,782 300.85,790 305.07,798 309.30,806 313.52,814 317.75,822 321.98,830 326.21,838 330.44,846 334.67,854 338.90,862 343.13,870 347.36,878"/><polyline transform="translate(393.8,0)" points="0.09,70 0.33,78 0.71,86 1.23,94 1.90,102 2.71,110 3.65,118 4.73,126 5.95,134 7.30,142 8.78,150 10.39,158 12.11,166 13.96,174 15.92,182 18.00,190 20.18,198 22.47,206 24.86,214 27.35,222 29.93,230 32.60,238 35.35,246 38.19,254 41.11,262 44.10,270 47.16,278 50.29,286 53.49,294 56.74,302 60.06,310 63.42,318 66.85,326 70.32,334 73.83,342 77.39,350 81.00,358 84.64,366 88.32,374 92.03,382 95.78,390 99.55,398 103.36,406 107.20,414 111.05,422 114.94,430 118.84,438 122.77,446 126.72,454 130.69,462 134.67,470 138.67,478 142.69,486 146.72,494 150.76,502 154.82,510 158.89,518 162.97,526 167.06,534 171.16,542 175.27,550 179.38,558 183.51,566 187.64,574 191.78,582 195.93,590 200.08,598 204.24,606 208.40,614 212.57,622 216.75,630 220.93,638 225.11,646 229.29,654 233.48,662 237.68,670 241.87,678 246.07,686 250.27,694 254.48,702 258.68,710 262.89,718 267.10,726 271.31,734 275.53,742 279.75,750 283.96,758 288.18,766 292.40,774 296.63,782 300.85,790 305.07,798 309.30,806 313.52,814 317.75,822 321.98,830 326.21,838 330.44,846 334.67,854 338.90,862 343.13,870 347.36,878"/><polyline transform="translate(405.8,0)" points="0.09,70 0.33,78 0.71,86 1.23,94 1.90,102 2.71,110 3.65,118 4.73,126 5.95,134 7.30,142 8.78,150 10.39,158 12.11,166 13.96,174 15.92,182 18.00,190 20.18,198 22.47,206 24.86,214 27.35,222 29.93,230 32.60,238 35.35,246 38.19,254 41.11,262 44.10,270 47.16,278 50.29,286 53.49,294 56.74,302 60.06,310 63.42,318 66.85,326 70.32,334 73.83,342 77.39,350 81.00,358 84.64,366 88.32,374 92.03,382 95.78,390 99.55,398 103.36,406 107.20,414 111.05,422 114.94,430 118.84,438 122.77,446 126.72,454 130.69,462 134.67,470 138.67,478 142.69,486 146.72,494 150.76,502 154.82,510 158.89,518 162.97,526 167.06,534 171.16,542 175.27,550 179.38,558 183.51,566 187.64,574 191.78,582 195.93,590 200.08,598 204.24,606 208.40,614 212.57,622 216.75,630 220.93,638 225.11,646 229.29,654 233.48,662 237.68,670 241.87,678 246.07,686 250.27,694 254.48,702 258.68,710 262.89,718 267.10,726 271.31,734 275.53,742 279.75,750 283.96,758 288.18,766 292.40,774 296.63,782 300.85,790 305.07,798 309.30,806 313.52,814 317.75,822 321.98,830 326.21,838 330.44,846 334.67,854 338.90,862 343.13,870 347.36,878"/><polyline transform="translate(417.8,0)" points="0.09,70 0.33,78 0.71,86 1.23,94 1.90,102 2.71,110 3.65,118 4.73,126 5.95,134 7.30,142 8.78,150 10.39,158 12.11,166 13.96,174 15.92,182 18.00,190 20.18,198 22.47,206 24.86,214 27.35,222 29.93,230 32.60,238 35.35,246 38.19,254 41.11,262 44.10,270 47.16,278 50.29,286 53.49,294 56.74,302 60.06,310 63.42,318 66.85,326 70.32,334 73.83,342 77.39,350 81.00,358 84.64,366 88.32,374 92.03,382 95.78,390 99.55,398 103.36,406 107.20,414 111.05,422 114.94,430 118.84,438 122.77,446 126.72,454 130.69,462 134.67,470 138.67,478 142.69,486 146.72,494 150.76,502 154.82,510 158.89,518 162.97,526 167.06,534 171.16,542 175.27,550 179.38,558 183.51,566 187.64,574 191.78,582 195.93,590 200.08,598 204.24,606 208.40,614 212.57,622 216.75,630 220.93,638 225.11,646 229.29,654 233.48,662 237.68,670 241.87,678 246.07,686 250.27,694 254.48,702 258.68,710 262.89,718 267.10,726 271.31,734 275.53,742 279.75,750 283.96,758 288.18,766 292.40,774 296.63,782 300.85,790 305.07,798 309.30,806 313.52,814 317.75,822 321.98,830 326.21,838 330.44,846 334.67,854 338.90,862 343.13,870 347.36,878"/><polyline transform="translate(429.8,0)" points="0.09,70 0.33,78 0.71,86 1.23,94 1.90,102 2.71,110 3.65,118 4.73,126 5.95,134 7.30,142 8.78,150 10.39,158 12.11,166 13.96,174 15.92,182 18.00,190 20.18,198 22.47,206 24.86,214 27.35,222 29.93,230 32.60,238 35.35,246 38.19,254 41.11,262 44.10,270 47.16,278 50.29,286 53.49,294 56.74,302 60.06,310 63.42,318 66.85,326 70.32,334 73.83,342 77.39,350 81.00,358 84.64,366 88.32,374 92.03,382 95.78,390 99.55,398 103.36,406 107.20,414 111.05,422 114.94,430 118.84,438 122.77,446 126.72,454 130.69,462 134.67,470 138.67,478 142.69,486 146.72,494 150.76,502 154.82,510 158.89,518 162.97,526 167.06,534 171.16,542 175.27,550 179.38,558 183.51,566 187.64,574 191.78,582 195.93,590 200.08,598 204.24,606 208.40,614 212.57,622 216.75,630 220.93,638 225.11,646 229.29,654 233.48,662 237.68,670 241.87,678 246.07,686 250.27,694 254.48,702 258.68,710 262.89,718 267.10,726 271.31,734 275.53,742 279.75,750 283.96,758 288.18,766 292.40,774 296.63,782 300.85,790 305.07,798 309.30,806 313.52,814 317.75,822 321.98,830 326.21,838 330.44,846 334.67,854 338.90,862 343.13,870 347.36,878"/><polyline transform="translate(441.8,0)" points="0.09,70 0.33,78 0.71,86 1.23,94 1.90,102 2.71,110 3.65,118 4.73,126 5.95,134 7.30,142 8.78,150 10.39,158 12.11,166 13.96,174 15.92,182 18.00,190 20.18,198 22.47,206 24.86,214 27.35,222 29.93,230 32.60,238 35.35,246 38.19,254 41.11,262 44.10,270 47.16,278 50.29,286 53.49,294 56.74,302 60.06,310 63.42,318 66.85,326 70.32,334 73.83,342 77.39,350 81.00,358 84.64,366 88.32,374 92.03,382 95.78,390 99.55,398 103.36,406 107.20,414 111.05,422 114.94,430 118.84,438 122.77,446 126.72,454 130.69,462 134.67,470 138.67,478 142.69,486 146.72,494 150.76,502 154.82,510 158.89,518 162.97,526 167.06,534 171.16,542 175.27,550 179.38,558 183.51,566 187.64,574 191.78,582 195.93,590 200.08,598 204.24,606 208.40,614 212.57,622 216.75,630 220.93,638 225.11,646 229.29,654 233.48,662 237.68,670 241.87,678 246.07,686 250.27,694 254.48,702 258.68,710 262.89,718 267.10,726 271.31,734 275.53,742 279.75,750 283.96,758 288.18,766 292.40,774 296.63,782 300.85,790 305.07,798 309.30,806 313.52,814 317.75,822 321.98,830 326.21,838 330.44,846 334.67,854 338.90,862 343.13,870 347.36,878"/><polyline transform="translate(453.8,0)" points="0.09,70 0.33,78 0.71,86 1.23,94 1.90,102 2.71,110 3.65,118 4.73,126 5.95,134 7.30,142 8.78,150 10.39,158 12.11,166 13.96,174 15.92,182 18.00,190 20.18,198 22.47,206 24.86,214 27.35,222 29.93,230 32.60,238 35.35,246 38.19,254 41.11,262 44.10,270 47.16,278 50.29,286 53.49,294 56.74,302 60.06,310 63.42,318 66.85,326 70.32,334 73.83,342 77.39,350 81.00,358 84.64,366 88.32,374 92.03,382 95.78,390 99.55,398 103.36,406 107.20,414 111.05,422 114.94,430 118.84,438 122.77,446 126.72,454 130.69,462 134.67,470 138.67,478 142.69,486 146.72,494 150.76,502 154.82,510 158.89,518 162.97,526 167.06,534 171.16,542 175.27,550 179.38,558 183.51,566 187.64,574 191.78,582 195.93,590 200.08,598 204.24,606 208.40,614 212.57,622 216.75,630 220.93,638 225.11,646 229.29,654 233.48,662 237.68,670 241.87,678 246.07,686 250.27,694 254.48,702 258.68,710 262.89,718 267.10,726 271.31,734 275.53,742 279.75,750 283.96,758 288.18,766 292.40,774 296.63,782 300.85,790 305.07,798 309.30,806 313.52,814 317.75,822 321.98,830 326.21,838 330.44,846 334.67,854 338.90,862 343.13,870 347.36,878"/><polyline transform="translate(465.8,0)" points="0.09,70 0.33,78 0.71,86 1.23,94 1.90,102 2.71,110 3.65,118 4.73,126 5.95,134 7.30,142 8.78,150 10.39,158 12.11,166 13.96,174 15.92,182 18.00,190 20.18,198 22.47,206 24.86,214 27.35,222 29.93,230 32.60,238 35.35,246 38.19,254 41.11,262 44.10,270 47.16,278 50.29,286 53.49,294 56.74,302 60.06,310 63.42,318 66.85,326 70.32,334 73.83,342 77.39,350 81.00,358 84.64,366 88.32,374 92.03,382 95.78,390 99.55,398 103.36,406 107.20,414 111.05,422 114.94,430 118.84,438 122.77,446 126.72,454 130.69,462 134.67,470 138.67,478 142.69,486 146.72,494 150.76,502 154.82,510 158.89,518 162.97,526 167.06,534 171.16,542 175.27,550 179.38,558 183.51,566 187.64,574 191.78,582 195.93,590 200.08,598 204.24,606 208.40,614 212.57,622 216.75,630 220.93,638 225.11,646 229.29,654 233.48,662 237.68,670 241.87,678 246.07,686 250.27,694 254.48,702 258.68,710 262.89,718 267.10,726 271.31,734 275.53,742 279.75,750 283.96,758 288.18,766 292.40,774 296.63,782 300.85,790 305.07,798 309.30,806 313.52,814 317.75,822 321.98,830 326.21,838 330.44,846 334.67,854 338.90,862 343.13,870 347.36,878"/><polyline transform="translate(477.8,0)" points="0.09,70 0.33,78 0.71,86 1.23,94 1.90,102 2.71,110 3.65,118 4.73,126 5.95,134 7.30,142 8.78,150 10.39,158 12.11,166 13.96,174 15.92,182 18.00,190 20.18,198 22.47,206 24.86,214 27.35,222 29.93,230 32.60,238 35.35,246 38.19,254 41.11,262 44.10,270 47.16,278 50.29,286 53.49,294 56.74,302 60.06,310 63.42,318 66.85,326 70.32,334 73.83,342 77.39,350 81.00,358 84.64,366 88.32,374 92.03,382 95.78,390 99.55,398 103.36,406 107.20,414 111.05,422 114.94,430 118.84,438 122.77,446 126.72,454 130.69,462 134.67,470 138.67,478 142.69,486 146.72,494 150.76,502 154.82,510 158.89,518 162.97,526 167.06,534 171.16,542 175.27,550 179.38,558 183.51,566 187.64,574 191.78,582 195.93,590 200.08,598 204.24,606 208.40,614 212.57,622 216.75,630 220.93,638 225.11,646 229.29,654 233.48,662 237.68,670 241.87,678 246.07,686 250.27,694 254.48,702 258.68,710 262.89,718 267.10,726 271.31,734 275.53,742 279.75,750 283.96,758 288.18,766 292.40,774 296.63,782 300.85,790 305.07,798 309.30,806 313.52,814 317.75,822 321.98,830 326.21,838 330.44,846 334.67,854 338.90,862 343.13,870 347.36,878"/><polyline transform="translate(489.8,0)" points="0.09,70 0.33,78 0.71,86 1.23,94 1.90,102 2.71,110 3.65,118 4.73,126 5.95,134 7.30,142 8.78,150 10.39,158 12.11,166 13.96,174 15.92,182 18.00,190 20.18,198 22.47,206 24.86,214 27.35,222 29.93,230 32.60,238 35.35,246 38.19,254 41.11,262 44.10,270 47.16,278 50.29,286 53.49,294 56.74,302 60.06,310 63.42,318 66.85,326 70.32,334 73.83,342 77.39,350 81.00,358 84.64,366 88.32,374 92.03,382 95.78,390 99.55,398 103.36,406 107.20,414 111.05,422 114.94,430 118.84,438 122.77,446 126.72,454 130.69,462 134.67,470 138.67,478 142.69,486 146.72,494 150.76,502 154.82,510 158.89,518 162.97,526 167.06,534 171.16,542 175.27,550 179.38,558 183.51,566 187.64,574 191.78,582 195.93,590 200.08,598 204.24,606 208.40,614 212.57,622 216.75,630 220.93,638 225.11,646 229.29,654 233.48,662 237.68,670 241.87,678 246.07,686 250.27,694 254.48,702 258.68,710 262.89,718 267.10,726 271.31,734 275.53,742 279.75,750 283.96,758 288.18,766 292.40,774 296.63,782 300.85,790 305.07,798 309.30,806 313.52,814 317.75,822 321.98,830 326.21,838 330.44,846 334.67,854 338.90,862 343.13,870 347.36,878"/><polyline transform="translate(501.8,0)" points="0.09,70 0.33,78 0.71,86 1.23,94 1.90,102 2.71,110 3.65,118 4.73,126 5.95,134 7.30,142 8.78,150 10.39,158 12.11,166 13.96,174 15.92,182 18.00,190 20.18,198 22.47,206 24.86,214 27.35,222 29.93,230 32.60,238 35.35,246 38.19,254 41.11,262 44.10,270 47.16,278 50.29,286 53.49,294 56.74,302 60.06,310 63.42,318 66.85,326 70.32,334 73.83,342 77.39,350 81.00,358 84.64,366 88.32,374 92.03,382 95.78,390 99.55,398 103.36,406 107.20,414 111.05,422 114.94,430 118.84,438 122.77,446 126.72,454 130.69,462 134.67,470 138.67,478 142.69,486 146.72,494 150.76,502 154.82,510 158.89,518 162.97,526 167.06,534 171.16,542 175.27,550 179.38,558 183.51,566 187.64,574 191.78,582 195.93,590 200.08,598 204.24,606 208.40,614 212.57,622 216.75,630 220.93,638 225.11,646 229.29,654 233.48,662 237.68,670 241.87,678 246.07,686 250.27,694 254.48,702 258.68,710 262.89,718 267.10,726 271.31,734 275.53,742 279.75,750 283.96,758 288.18,766 292.40,774 296.63,782 300.85,790 305.07,798 309.30,806 313.52,814 317.75,822 321.98,830 326.21,838 330.44,846 334.67,854 338.90,862 343.13,870 347.36,878"/><polyline transform="translate(513.8,0)" points="0.09,70 0.33,78 0.71,86 1.23,94 1.90,102 2.71,110 3.65,118 4.73,126 5.95,134 7.30,142 8.78,150 10.39,158 12.11,166 13.96,174 15.92,182 18.00,190 20.18,198 22.47,206 24.86,214 27.35,222 29.93,230 32.60,238 35.35,246 38.19,254 41.11,262 44.10,270 47.16,278 50.29,286 53.49,294 56.74,302 60.06,310 63.42,318 66.85,326 70.32,334 73.83,342 77.39,350 81.00,358 84.64,366 88.32,374 92.03,382 95.78,390 99.55,398 103.36,406 107.20,414 111.05,422 114.94,430 118.84,438 122.77,446 126.72,454 130.69,462 134.67,470 138.67,478 142.69,486 146.72,494 150.76,502 154.82,510 158.89,518 162.97,526 167.06,534 171.16,542 175.27,550 179.38,558 183.51,566 187.64,574 191.78,582 195.93,590 200.08,598 204.24,606 208.40,614 212.57,622 216.75,630 220.93,638 225.11,646 229.29,654 233.48,662 237.68,670 241.87,678 246.07,686 250.27,694 254.48,702 258.68,710 262.89,718 267.10,726 271.31,734 275.53,742 279.75,750 283.96,758 288.18,766 292.40,774 296.63,782 300.85,790 305.07,798 309.30,806 313.52,814 317.75,822 321.98,830 326.21,838 330.44,846 334.67,854 338.90,862 343.13,870 347.36,878"/><polyline transform="translate(525.8,0)" points="0.09,70 0.33,78 0.71,86 1.23,94 1.90,102 2.71,110 3.65,118 4.73,126 5.95,134 7.30,142 8.78,150 10.39,158 12.11,166 13.96,174 15.92,182 18.00,190 20.18,198 22.47,206 24.86,214 27.35,222 29.93,230 32.60,238 35.35,246 38.19,254 41.11,262 44.10,270 47.16,278 50.29,286 53.49,294 56.74,302 60.06,310 63.42,318 66.85,326 70.32,334 73.83,342 77.39,350 81.00,358 84.64,366 88.32,374 92.03,382 95.78,390 99.55,398 103.36,406 107.20,414 111.05,422 114.94,430 118.84,438 122.77,446 126.72,454 130.69,462 134.67,470 138.67,478 142.69,486 146.72,494 150.76,502 154.82,510 158.89,518 162.97,526 167.06,534 171.16,542 175.27,550 179.38,558 183.51,566 187.64,574 191.78,582 195.93,590 200.08,598 204.24,606 208.40,614 212.57,622 216.75,630 220.93,638 225.11,646 229.29,654 233.48,662 237.68,670 241.87,678 246.07,686 250.27,694 254.48,702 258.68,710 262.89,718 267.10,726 271.31,734 275.53,742 279.75,750 283.96,758 288.18,766 292.40,774 296.63,782 300.85,790 305.07,798 309.30,806 313.52,814 317.75,822 321.98,830 326.21,838 330.44,846 334.67,854 338.90,862 343.13,870 347.36,878"/><polyline transform="translate(537.8,0)" points="0.09,70 0.33,78 0.71,86 1.23,94 1.90,102 2.71,110 3.65,118 4.73,126 5.95,134 7.30,142 8.78,150 10.39,158 12.11,166 13.96,174 15.92,182 18.00,190 20.18,198 22.47,206 24.86,214 27.35,222 29.93,230 32.60,238 35.35,246 38.19,254 41.11,262 44.10,270 47.16,278 50.29,286 53.49,294 56.74,302 60.06,310 63.42,318 66.85,326 70.32,334 73.83,342 77.39,350 81.00,358 84.64,366 88.32,374 92.03,382 95.78,390 99.55,398 103.36,406 107.20,414 111.05,422 114.94,430 118.84,438 122.77,446 126.72,454 130.69,462 134.67,470 138.67,478 142.69,486 146.72,494 150.76,502 154.82,510 158.89,518 162.97,526 167.06,534 171.16,542 175.27,550 179.38,558 183.51,566 187.64,574 191.78,582 195.93,590 200.08,598 204.24,606 208.40,614 212.57,622 216.75,630 220.93,638 225.11,646 229.29,654 233.48,662 237.68,670 241.87,678 246.07,686 250.27,694 254.48,702 258.68,710 262.89,718 267.10,726 271.31,734 275.53,742 279.75,750 283.96,758 288.18,766 292.40,774 296.63,782 300.85,790 305.07,798 309.30,806 313.52,814 317.75,822 321.98,830 326.21,838 330.44,846 334.67,854 338.90,862 343.13,870 347.36,878"/><polyline transform="translate(549.8,0)" points="0.09,70 0.33,78 0.71,86 1.23,94 1.90,102 2.71,110 3.65,118 4.73,126 5.95,134 7.30,142 8.78,150 10.39,158 12.11,166 13.96,174 15.92,182 18.00,190 20.18,198 22.47,206 24.86,214 27.35,222 29.93,230 32.60,238 35.35,246 38.19,254 41.11,262 44.10,270 47.16,278 50.29,286 53.49,294 56.74,302 60.06,310 63.42,318 66.85,326 70.32,334 73.83,342 77.39,350 81.00,358 84.64,366 88.32,374 92.03,382 95.78,390 99.55,398 103.36,406 107.20,414 111.05,422 114.94,430 118.84,438 122.77,446 126.72,454 130.69,462 134.67,470 138.67,478 142.69,486 146.72,494 150.76,502 154.82,510 158.89,518 162.97,526 167.06,534 171.16,542 175.27,550 179.38,558 183.51,566 187.64,574 191.78,582 195.93,590 200.08,598 204.24,606 208.40,614 212.57,622 216.75,630 220.93,638 225.11,646 229.29,654 233.48,662 237.68,670 241.87,678 246.07,686 250.27,694 254.48,702 258.68,710 262.89,718 267.10,726 271.31,734 275.53,742 279.75,750 283.96,758 288.18,766 292.40,774 296.63,782 300.85,790 305.07,798 309.30,806 313.52,814 317.75,822 321.98,830 326.21,838 330.44,846 334.67,854 338.90,862 343.13,870 347.36,878"/><polyline transform="translate(561.8,0)" points="0.09,70 0.33,78 0.71,86 1.23,94 1.90,102 2.71,110 3.65,118 4.73,126 5.95,134 7.30,142 8.78,150 10.39,158 12.11,166 13.96,174 15.92,182 18.00,190 20.18,198 22.47,206 24.86,214 27.35,222 29.93,230 32.60,238 35.35,246 38.19,254 41.11,262 44.10,270 47.16,278 50.29,286 53.49,294 56.74,302 60.06,310 63.42,318 66.85,326 70.32,334 73.83,342 77.39,350 81.00,358 84.64,366 88.32,374 92.03,382 95.78,390 99.55,398 103.36,406 107.20,414 111.05,422 114.94,430 118.84,438 122.77,446 126.72,454 130.69,462 134.67,470 138.67,478 142.69,486 146.72,494 150.76,502 154.82,510 158.89,518 162.97,526 167.06,534 171.16,542 175.27,550 179.38,558 183.51,566 187.64,574 191.78,582 195.93,590 200.08,598 204.24,606 208.40,614 212.57,622 216.75,630 220.93,638 225.11,646 229.29,654 233.48,662 237.68,670 241.87,678 246.07,686 250.27,694 254.48,702 258.68,710 262.89,718 267.10,726 271.31,734 275.53,742 279.75,750 283.96,758 288.18,766 292.40,774 296.63,782 300.85,790 305.07,798 309.30,806 313.52,814 317.75,822 321.98,830 326.21,838 330.44,846 334.67,854 338.90,862 343.13,870 347.36,878"/><polyline transform="translate(573.8,0)" points="0.09,70 0.33,78 0.71,86 1.23,94 1.90,102 2.71,110 3.65,118 4.73,126 5.95,134 7.30,142 8.78,150 10.39,158 12.11,166 13.96,174 15.92,182 18.00,190 20.18,198 22.47,206 24.86,214 27.35,222 29.93,230 32.60,238 35.35,246 38.19,254 41.11,262 44.10,270 47.16,278 50.29,286 53.49,294 56.74,302 60.06,310 63.42,318 66.85,326 70.32,334 73.83,342 77.39,350 81.00,358 84.64,366 88.32,374 92.03,382 95.78,390 99.55,398 103.36,406 107.20,414 111.05,422 114.94,430 118.84,438 122.77,446 126.72,454 130.69,462 134.67,470 138.67,478 142.69,486 146.72,494 150.76,502 154.82,510 158.89,518 162.97,526 167.06,534 171.16,542 175.27,550 179.38,558 183.51,566 187.64,574 191.78,582 195.93,590 200.08,598 204.24,606 208.40,614 212.57,622 216.75,630 220.93,638 225.11,646 229.29,654 233.48,662 237.68,670 241.87,678 246.07,686 250.27,694 254.48,702 258.68,710 262.89,718 267.10,726 271.31,734 275.53,742 279.75,750 283.96,758 288.18,766 292.40,774 296.63,782 300.85,790 305.07,798 309.30,806 313.52,814 317.75,822 321.98,830 326.21,838 330.44,846 334.67,854 338.90,862 343.13,870 347.36,878"/><polyline transform="translate(585.8,0)" points="0.09,70 0.33,78 0.71,86 1.23,94 1.90,102 2.71,110 3.65,118 4.73,126 5.95,134 7.30,142 8.78,150 10.39,158 12.11,166 13.96,174 15.92,182 18.00,190 20.18,198 22.47,206 24.86,214 27.35,222 29.93,230 32.60,238 35.35,246 38.19,254 41.11,262 44.10,270 47.16,278 50.29,286 53.49,294 56.74,302 60.06,310 63.42,318 66.85,326 70.32,334 73.83,342 77.39,350 81.00,358 84.64,366 88.32,374 92.03,382 95.78,390 99.55,398 103.36,406 107.20,414 111.05,422 114.94,430 118.84,438 122.77,446 126.72,454 130.69,462 134.67,470 138.67,478 142.69,486 146.72,494 150.76,502 154.82,510 158.89,518 162.97,526 167.06,534 171.16,542 175.27,550 179.38,558 183.51,566 187.64,574 191.78,582 195.93,590 200.08,598 204.24,606 208.40,614 212.57,622 216.75,630 220.93,638 225.11,646 229.29,654 233.48,662 237.68,670 241.87,678 246.07,686 250.27,694 254.48,702 258.68,710 262.89,718 267.10,726 271.31,734 275.53,742 279.75,750 283.96,758 288.18,766 292.40,774 296.63,782 300.85,790 305.07,798 309.30,806 313.52,814 317.75,822 321.98,830 326.21,838 330.44,846 334.67,854 338.90,862 343.13,870 347.36,878"/><polyline transform="translate(597.8,0)" points="0.09,70 0.33,78 0.71,86 1.23,94 1.90,102 2.71,110 3.65,118 4.73,126 5.95,134 7.30,142 8.78,150 10.39,158 12.11,166 13.96,174 15.92,182 18.00,190 20.18,198 22.47,206 24.86,214 27.35,222 29.93,230 32.60,238 35.35,246 38.19,254 41.11,262 44.10,270 47.16,278 50.29,286 53.49,294 56.74,302 60.06,310 63.42,318 66.85,326 70.32,334 73.83,342 77.39,350 81.00,358 84.64,366 88.32,374 92.03,382 95.78,390 99.55,398 103.36,406 107.20,414 111.05,422 114.94,430 118.84,438 122.77,446 126.72,454 130.69,462 134.67,470 138.67,478 142.69,486 146.72,494 150.76,502 154.82,510 158.89,518 162.97,526 167.06,534 171.16,542 175.27,550 179.38,558 183.51,566 187.64,574 191.78,582 195.93,590 200.08,598 204.24,606 208.40,614 212.57,622 216.75,630 220.93,638 225.11,646 229.29,654 233.48,662 237.68,670 241.87,678 246.07,686 250.27,694 254.48,702 258.68,710 262.89,718 267.10,726 271.31,734 275.53,742 279.75,750 283.96,758 288.18,766 292.40,774 296.63,782 300.85,790 305.07,798 309.30,806 313.52,814 317.75,822 321.98,830 326.21,838 330.44,846 334.67,854 338.90,862 343.13,870 347.36,878"/><polyline transform="translate(609.8,0)" points="0.09,70 0.33,78 0.71,86 1.23,94 1.90,102 2.71,110 3.65,118 4.73,126 5.95,134 7.30,142 8.78,150 10.39,158 12.11,166 13.96,174 15.92,182 18.00,190 20.18,198 22.47,206 24.86,214 27.35,222 29.93,230 32.60,238 35.35,246 38.19,254 41.11,262 44.10,270 47.16,278 50.29,286 53.49,294 56.74,302 60.06,310 63.42,318 66.85,326 70.32,334 73.83,342 77.39,350 81.00,358 84.64,366 88.32,374 92.03,382 95.78,390 99.55,398 103.36,406 107.20,414 111.05,422 114.94,430 118.84,438 122.77,446 126.72,454 130.69,462 134.67,470 138.67,478 142.69,486 146.72,494 150.76,502 154.82,510 158.89,518 162.97,526 167.06,534 171.16,542 175.27,550 179.38,558 183.51,566 187.64,574 191.78,582 195.93,590 200.08,598 204.24,606 208.40,614 212.57,622 216.75,630 220.93,638 225.11,646 229.29,654 233.48,662 237.68,670 241.87,678 246.07,686 250.27,694 254.48,702 258.68,710 262.89,718 267.10,726 271.31,734 275.53,742 279.75,750 283.96,758 288.18,766 292.40,774 296.63,782 300.85,790 305.07,798 309.30,806 313.52,814 317.75,822 321.98,830 326.21,838 330.44,846 334.67,854 338.90,862 343.13,870 347.36,878"/><polyline transform="translate(621.8,0)" points="0.09,70 0.33,78 0.71,86 1.23,94 1.90,102 2.71,110 3.65,118 4.73,126 5.95,134 7.30,142 8.78,150 10.39,158 12.11,166 13.96,174 15.92,182 18.00,190 20.18,198 22.47,206 24.86,214 27.35,222 29.93,230 32.60,238 35.35,246 38.19,254 41.11,262 44.10,270 47.16,278 50.29,286 53.49,294 56.74,302 60.06,310 63.42,318 66.85,326 70.32,334 73.83,342 77.39,350 81.00,358 84.64,366 88.32,374 92.03,382 95.78,390 99.55,398 103.36,406 107.20,414 111.05,422 114.94,430 118.84,438 122.77,446 126.72,454 130.69,462 134.67,470 138.67,478 142.69,486 146.72,494 150.76,502 154.82,510 158.89,518 162.97,526 167.06,534 171.16,542 175.27,550 179.38,558 183.51,566 187.64,574 191.78,582 195.93,590 200.08,598 204.24,606 208.40,614 212.57,622 216.75,630 220.93,638 225.11,646 229.29,654 233.48,662 237.68,670 241.87,678 246.07,686 250.27,694 254.48,702 258.68,710 262.89,718 267.10,726 271.31,734 275.53,742 279.75,750 283.96,758 288.18,766 292.40,774 296.63,782 300.85,790 305.07,798 309.30,806 313.52,814 317.75,822 321.98,830 326.21,838 330.44,846 334.67,854 338.90,862 343.13,870 347.36,878"/></g></g></g></svg>
<div style="position:absolute;left:0px;top:0px;width:1919px;height:78px;background:#fff;border-bottom:1px solid #e1e1e1"></div>
<svg style="position:absolute;left:32px;top:14px" width="40" height="50" viewBox="0 0 40 50">
<path d="M12.9 2.7 L12.9 11.5 Q12.9 14.5 10.5 16 L5 17 L5 9 Q5 4 9 3 Z" fill="#14acac"/>
<path d="M24.8 3 Q27.8 2.2 30.2 3.8 Q32.2 5.6 30.6 7.6 L18.6 18.1 L31.2 29.4 Q32.8 31.6 30.8 33.5 Q28.6 35.3 25.8 34.4 L12.2 23.8 L12.2 31 Q12.2 34.7 8.6 34.7 Q5 34.7 5 31 L5 24.2 Q5 20.8 8 18.3 Z" fill="#0b0c58"/>
<text x="2.2" y="46" font-size="10" letter-spacing="0.25" fill="#1a1b62" font-family="Liberation Sans">knocen</text></svg>
<div class="a" style="left:83.5px;top:23.06px;font-size:18px;color:#333;-webkit-text-stroke:0.45px #333;letter-spacing:0.38px;">Prime Construction</div>
<div class="a" style="left:83.5px;top:45.13px;font-size:10px;color:#333;">Knocen Knowledge Management System</div>
<svg style="position:absolute;left:1636px;top:22px" width="33" height="33" viewBox="0 0 33 33">
<rect x="2.3" y="1.3" width="28.2" height="29" rx="9" fill="none" stroke="#12aeae" stroke-width="2.3"/>
<circle cx="16.4" cy="13.5" r="5" fill="none" stroke="#12aeae" stroke-width="2.3"/>
<path d="M7.6 30.3 Q9.5 23.2 16.4 23.2 Q23.3 23.2 25.2 30.3" fill="none" stroke="#12aeae" stroke-width="2.3"/></svg>
<div class="a" style="left:1680px;top:26.30px;font-size:14.3px;color:#333;-webkit-text-stroke:0.4px #333;letter-spacing:0.4px;">Uvini Matara Arachchi</div>
<div class="a" style="left:1680px;top:42.19px;font-size:9.7px;color:#a6a6a6;">CLIENT ADMIN</div>
<div style="position:absolute;left:1842px;top:14px;width:48px;height:48px;border:1px solid #dedede;border-radius:11px;background:#fff"></div>
<svg style="position:absolute;left:1842px;top:14px" width="48" height="48" viewBox="0 0 48 48">
<path d="M20.9 19 L20.9 18.5 Q20.9 11.2 26.5 11.2 L31.5 11.2 Q37.8 11.2 37.8 18 L37.8 28.5 Q37.8 35.4 31.5 35.4 L26.5 35.4 Q20.9 35.4 20.9 28.5 L20.9 27.6" fill="none" stroke="#e9392f" stroke-width="2" stroke-linecap="round"/>
<path d="M29.3 23.5 L13.4 23.5 M17.4 19 L13.2 23.5 L17.4 28" fill="none" stroke="#e9392f" stroke-width="2" stroke-linecap="round" stroke-linejoin="round"/></svg>
<div style="position:absolute;left:24px;top:101px;width:252px;height:754px;background:#fff;border:1px solid #dedede;border-right:none;border-radius:18px 0 0 18px"></div>
<div style="position:absolute;left:275px;top:101px;width:1621px;height:757px;background:#fff;border:1px solid #dedede;border-radius:0 18px 18px 0"></div>
<div class="a" style="left:49px;top:146.33px;font-size:10px;color:#9b9b9b;">System Management</div>
<div style="position:absolute;left:54px;top:181px;width:49px;height:49px;background:#f3f3f3;border-radius:13px"></div>
<svg style="position:absolute;left:54px;top:181px" width="49" height="49" viewBox="0 0 49 49"><rect x="10.4" y="10" width="26.5" height="26.8" rx="8" fill="none" stroke="#3a3a3a" stroke-width="2"/>
<circle cx="18.05" cy="18.05" r="2.5" fill="none" stroke="#3a3a3a" stroke-width="1.8"/><circle cx="18.05" cy="29.6" r="2.5" fill="none" stroke="#3a3a3a" stroke-width="1.8"/><circle cx="29.4" cy="29.6" r="2.5" fill="none" stroke="#3a3a3a" stroke-width="1.8"/>
<path d="M18.05 20.5 L18.05 27.1 M19.2 20.6 L27.2 27.9" fill="none" stroke="#3a3a3a" stroke-width="1.8"/></svg>
<div class="a" style="left:118px;top:198.84px;font-size:12px;color:#363636;">Organizations</div>
<div style="position:absolute;left:54px;top:249px;width:49px;height:49px;background:#f3f3f3;border-radius:13px"></div>
<svg style="position:absolute;left:54px;top:249px" width="49" height="49" viewBox="0 0 49 49"><rect x="10.4" y="11" width="26.5" height="26.8" rx="8" fill="none" stroke="#3a3a3a" stroke-width="2"/>
<path d="M16.5 31.6 L16.5 18.6 Q16.5 15.9 19.2 15.9 L22.8 15.9 Q25.5 15.9 25.5 18.6 L25.5 31.6" fill="none" stroke="#3a3a3a" stroke-width="1.9"/>
<path d="M18.8 20.3 L23.2 20.3 M18.8 23.4 L23.2 23.4 M21 28.3 L21 31.6" fill="none" stroke="#3a3a3a" stroke-width="1.6"/>
<ellipse cx="30.2" cy="24.9" rx="2.1" ry="2.8" fill="none" stroke="#3a3a3a" stroke-width="1.7"/><path d="M30.2 27.7 L30.2 31.6 M14.6 31.8 L33.6 31.8" fill="none" stroke="#3a3a3a" stroke-width="1.8" stroke-linecap="round"/></svg>
<div class="a" style="left:118px;top:266.84px;font-size:12px;color:#363636;">Buildings / Properties</div>
<div style="position:absolute;left:54px;top:318px;width:49px;height:49px;background:#f3f3f3;border-radius:13px"></div>
<svg style="position:absolute;left:54px;top:318px" width="49" height="49" viewBox="0 0 49 49"><rect x="12.6" y="12.5" width="22.8" height="23" rx="7" fill="none" stroke="#3a3a3a" stroke-width="2"/>
<path d="M18.5 22.5 L21.5 25.5 L28.5 18.5 M17.5 30 L25.5 30 M27.5 30 L30.5 30" fill="none" stroke="#3a3a3a" stroke-width="1.8"/></svg>
<div class="a" style="left:118px;top:329.24px;font-size:12px;color:#363636;">Reference Data /</div>
<div class="a" style="left:118px;top:342.84px;font-size:12px;color:#363636;">Master Data</div>
<svg style="position:absolute;left:228px;top:335px" width="16" height="12" viewBox="0 0 16 12"><path d="M2.5 3 L8 8.5 L13.5 3" fill="none" stroke="#222" stroke-width="2.2"/></svg>
<div style="position:absolute;left:54px;top:386px;width:49px;height:49px;background:#f3f3f3;border-radius:13px"></div>
<svg style="position:absolute;left:54px;top:386px" width="49" height="49" viewBox="0 0 49 49"><rect x="11" y="10.7" width="26.8" height="26.8" rx="8" fill="none" stroke="#3a3a3a" stroke-width="2"/>
<circle cx="24.1" cy="22.1" r="5" fill="none" stroke="#3a3a3a" stroke-width="2"/>
<path d="M15.8 37 A8.4 6.6 0 0 1 32.4 37" fill="none" stroke="#3a3a3a" stroke-width="2"/></svg>
<div class="a" style="left:118px;top:403.84px;font-size:12px;color:#363636;">User Management</div>
<div style="position:absolute;left:54px;top:454px;width:49px;height:49px;background:#f3f3f3;border-radius:13px"></div>
<svg style="position:absolute;left:54px;top:454px" width="49" height="49" viewBox="0 0 49 49"><rect x="10.4" y="11" width="26.5" height="26.8" rx="8" fill="none" stroke="#3a3a3a" stroke-width="2"/>
<circle cx="23.05" cy="23.7" r="5.9" fill="none" stroke="#3a3a3a" stroke-width="1.9"/>
<path d="M27.6 28.3 L31 31.7" fill="none" stroke="#3a3a3a" stroke-width="1.9" stroke-linecap="round"/></svg>
<div class="a" style="left:118px;top:471.84px;font-size:12px;color:#363636;">Audit Trail</div>
<div style="position:absolute;left:54px;top:523px;width:49px;height:49px;background:#f3f3f3;border-radius:13px"></div>
<svg style="position:absolute;left:54px;top:523px" width="49" height="49" viewBox="0 0 49 49"><rect x="10.4" y="10" width="26.5" height="26.8" rx="8" fill="none" stroke="#3a3a3a" stroke-width="2"/>
<rect x="16.5" y="22.4" width="4.9" height="9.6" rx="2.45" fill="none" stroke="#3a3a3a" stroke-width="2"/>
<rect x="26.1" y="15" width="4.9" height="17" rx="2.45" fill="none" stroke="#3a3a3a" stroke-width="2"/></svg>
<div class="a" style="left:118px;top:540.84px;font-size:12px;color:#363636;">Dashboard</div>
<div class="a" style="left:49px;top:607.08px;font-size:10.3px;color:#9b9b9b;">Portfolio Management</div>
<div style="position:absolute;left:54px;top:642px;width:49px;height:49px;background:#12aeae;border-radius:13px"></div>
<svg style="position:absolute;left:54px;top:642px" width="49" height="49" viewBox="0 0 49 49"><rect x="11.8" y="11.1" width="24.5" height="24.6" rx="7.5" fill="none" stroke="#fff" stroke-width="1.6"/>
<path d="M23.9 15.5 L23.9 31.3 M27.8 18.8 Q27 17.2 23.8 17.2 Q20 17.2 20 20.2 Q20 22.8 23.9 23.6 Q28 24.4 28 27.2 Q28 30 23.9 30 Q20.4 30 19.6 28" fill="none" stroke="#fff" stroke-width="1.8" stroke-linecap="round"/></svg>
<div class="a" style="left:118px;top:660.64px;font-size:12px;color:#16a9a9;">Financial Management</div>
<div style="position:absolute;left:54px;top:710.3px;width:49px;height:49px;background:#f3f3f3;border-radius:13px"></div>
<svg style="position:absolute;left:54px;top:710.3px" width="49" height="49" viewBox="0 0 49 49"><rect x="10.4" y="10.3" width="26.5" height="27.6" rx="8" fill="none" stroke="#3a3a3a" stroke-width="2"/>
<circle cx="23.9" cy="24.6" r="7.2" fill="none" stroke="#3a3a3a" stroke-width="1.9"/><path d="M23.9 20.6 Q24.4 24.1 27.9 24.6 Q24.4 25.1 23.9 28.6 Q23.4 25.1 19.9 24.6 Q23.4 24.1 23.9 20.6 Z" fill="#3a3a3a" stroke="#3a3a3a" stroke-width="0.8" stroke-linejoin="round"/></svg>
<div class="a" style="left:118px;top:728.94px;font-size:12px;color:#363636;">Project Management</div>
<div style="position:absolute;left:54px;top:779px;width:49px;height:49px;background:#f3f3f3;border-radius:13px"></div>
<div class="a" style="left:118px;top:784.04px;font-size:12px;color:#363636;">Sharepoint</div>
<div style="position:absolute;left:24px;top:786px;width:251px;height:69px;background:#12aeae;border-bottom-left-radius:17px"></div>
<svg style="position:absolute;left:46px;top:803px" width="30" height="38" viewBox="0 0 30 38"><g transform="translate(0,0.4) scale(0.74)">
<path d="M12.9 2.7 L12.9 11.5 Q12.9 14.5 10.5 16 L5 17 L5 9 Q5 4 9 3 Z" fill="#fff"/>
<path d="M24.8 3 Q27.8 2.2 30.2 3.8 Q32.2 5.6 30.6 7.6 L18.6 18.1 L31.2 29.4 Q32.8 31.6 30.8 33.5 Q28.6 35.3 25.8 34.4 L12.2 23.8 L12.2 31 Q12.2 34.7 8.6 34.7 Q5 34.7 5 31 L5 24.2 Q5 20.8 8 18.3 Z" fill="#fff"/></g>
<text x="2" y="34" font-size="7.2" letter-spacing="0.2" fill="#fff" font-family="Liberation Sans">knocen</text></svg>
<div class="a" style="left:87.7px;top:807.44px;font-size:14.6px;color:#fff;">© knocen</div>
<div class="a" style="left:87.7px;top:829.07px;font-size:8.9px;color:#fff;-webkit-text-stroke:0.3px #fff;">Version 6.2.0</div>
<div class="a" style="left:300.7px;top:127.86px;font-size:18.6px;color:#333;-webkit-text-stroke:0.45px #333;">Financial Management</div>
<div style="position:absolute;left:276px;top:171px;width:1619px;height:1px;background:#e2e2e2"></div>
<div style="position:absolute;left:276px;top:262px;width:1619px;height:1px;background:#e2e2e2"></div>
<div style="position:absolute;left:1490px;top:172px;width:405px;height:90px;background:#f3f3f3;border-top-right-radius:12px;border-bottom-right-radius:12px"></div>
<div style="position:absolute;left:290px;top:187px;width:61px;height:61px;background:#f4f4f4;border:1px solid #dddddd;border-radius:17px"></div>
<svg style="position:absolute;left:290px;top:187px" width="61" height="61" viewBox="0 0 61 61"><rect x="18.7" y="17.1" width="25.1" height="25.2" rx="7.5" fill="none" stroke="#12aeae" stroke-width="2.2"/>
<path d="M23.3 25 L25.2 26.9 L28.4 23.2 M23.3 34.2 L25.2 36.1 L28.4 32.4 M31.4 25.3 L39 25.3 M31.4 34.5 L39 34.5" fill="none" stroke="#12aeae" stroke-width="2.1" stroke-linecap="round" stroke-linejoin="round"/></svg>
<div class="a" style="left:360.5px;top:197.44px;font-size:12px;color:#363636;">Statement of Work</div>
<svg style="position:absolute;left:360.5px;top:215.5px" width="21" height="21" viewBox="0 0 21 21"><rect x="1" y="1" width="18.5" height="18.5" rx="6" fill="none" stroke="#12aeae" stroke-width="1.6"/>
<path d="M6.5 8.5 L10.2 12 L13.8 8.5" fill="none" stroke="#12aeae" stroke-width="1.6"/></svg>
<div style="position:absolute;left:695px;top:187px;width:61px;height:61px;background:#f4f4f4;border:1px solid #dddddd;border-radius:17px"></div>
<svg style="position:absolute;left:695px;top:187px" width="61" height="61" viewBox="0 0 61 61"><path d="M17.3 16.2 Q21.3 15.8 21.9 19 L21.4 31.5 Q21.5 36.3 26 36.3 L39 36.3 Q43.6 36.3 43.8 31.5 L44.3 22.5 Q44.3 18.4 40.5 18.4 L22 18.4 M26.7 24.2 L42.8 24.2" fill="none" stroke="#12aeae" stroke-width="2.2" stroke-linecap="round" stroke-linejoin="round"/>
<circle cx="26.4" cy="41" r="1.6" fill="none" stroke="#12aeae" stroke-width="2"/><circle cx="36.7" cy="41" r="1.6" fill="none" stroke="#12aeae" stroke-width="2"/></svg>
<div class="a" style="left:765.5px;top:197.44px;font-size:12px;color:#363636;">Purchasing Items</div>
<svg style="position:absolute;left:765.5px;top:215.5px" width="21" height="21" viewBox="0 0 21 21"><rect x="1" y="1" width="18.5" height="18.5" rx="6" fill="none" stroke="#12aeae" stroke-width="1.6"/>
<path d="M6.5 8.5 L10.2 12 L13.8 8.5" fill="none" stroke="#12aeae" stroke-width="1.6"/></svg>
<div style="position:absolute;left:1100px;top:187px;width:61px;height:61px;background:#f4f4f4;border:1px solid #dddddd;border-radius:17px"></div>
<svg style="position:absolute;left:1100px;top:187px" width="61" height="61" viewBox="0 0 61 61"><path d="M19.8 37.8 L19.8 32 Q19.8 30.2 21.2 28.8 L32.8 17.2 Q35.8 14.4 38.8 17.2 L40.8 19.2 Q43.6 22.2 40.8 25.2 L29.2 36.6 Q27.8 37.8 26 37.8 Z M30.2 19.8 L38.2 27.8" fill="none" stroke="#12aeae" stroke-width="2.2" stroke-linejoin="round"/>
<path d="M19.3 42.5 L41.3 42.5" stroke="#12aeae" stroke-width="2.6" stroke-linecap="round"/></svg>
<div class="a" style="left:1170.5px;top:197.44px;font-size:12px;color:#363636;">Contracts</div>
<svg style="position:absolute;left:1170.5px;top:215.5px" width="21" height="21" viewBox="0 0 21 21"><rect x="1" y="1" width="18.5" height="18.5" rx="6" fill="none" stroke="#12aeae" stroke-width="1.6"/>
<path d="M6.5 8.5 L10.2 12 L13.8 8.5" fill="none" stroke="#12aeae" stroke-width="1.6"/></svg>
<div style="position:absolute;left:1505px;top:187px;width:61px;height:61px;background:#12aeae;border:1px solid #0b7e7e;border-radius:17px"></div>
<svg style="position:absolute;left:1505px;top:187px" width="61" height="61" viewBox="0 0 61 61"><rect x="16" y="16.5" width="29" height="29" rx="8.5" fill="none" stroke="#fff" stroke-width="2"/>
<path d="M30.5 21.8 L30.5 40.2 M34.8 25.4 Q33.8 23.4 30.3 23.4 Q26.1 23.4 26.1 26.8 Q26.1 29.8 30.5 30.8 Q35.1 31.8 35.1 35 Q35.1 38.4 30.5 38.4 Q26.7 38.4 25.8 36" fill="none" stroke="#fff" stroke-width="2" stroke-linecap="round"/></svg>
<div class="a" style="left:1575.5px;top:197.44px;font-size:12px;color:#16a9a9;">Expense Accounts</div>
<svg style="position:absolute;left:1580px;top:221px" width="20" height="20" viewBox="0 0 20 20"><path d="M1.5 15.5 L1.5 7 Q1.5 1.5 7 1.5 L16.5 1.5" fill="none" stroke="#12aeae" stroke-width="1.6"/>
<path d="M7.3 8.5 L10.2 11.4 L13.1 8.5" fill="none" stroke="#12aeae" stroke-width="1.6"/></svg>
<div class="a" style="left:300.7px;top:298.81px;font-size:18.65px;color:#333;-webkit-text-stroke:0.45px #333;">Expense Accounts</div>
<svg style="position:absolute;left:1778px;top:297px" width="24" height="24" viewBox="0 0 24 24"><circle cx="11.2" cy="11.2" r="8.5" fill="none" stroke="#404040" stroke-width="1.4"/><path d="M19.3 18.6 L21 20.3" stroke="#404040" stroke-width="1.4"/></svg>
<svg style="position:absolute;left:1838px;top:297px" width="24" height="24" viewBox="0 0 24 24"><path d="M7.75 2.4 L7.75 20.8 M17.6 2.4 L17.6 20.8" stroke="#404040" stroke-width="1.4"/>
<rect x="4.9" y="5" width="5.7" height="9.7" rx="1.5" fill="#fff" stroke="#404040" stroke-width="1.4"/>
<rect x="14.7" y="9" width="5.7" height="9" rx="1.5" fill="#fff" stroke="#404040" stroke-width="1.4"/></svg>
<div style="position:absolute;left:1887.5px;top:367px;width:3px;height:179px;background:#8a8a8a;border-radius:2px"></div>
<div style="position:absolute;left:300px;top:349px;width:1571px;height:37px;background:#f0f1f2;border-top-left-radius:9px;border-top-right-radius:9px;border-bottom:1px solid #dedede"></div>
<div class="a" style="left:319.5px;top:360.85px;font-size:12.7px;color:#363636;-webkit-text-stroke:0.35px #363636;letter-spacing:0.4px;">ID</div>
<div class="a" style="left:434.5px;top:360.85px;font-size:12.7px;color:#363636;-webkit-text-stroke:0.35px #363636;letter-spacing:0.4px;">Expense A/C #</div>
<div class="a" style="left:643.5px;top:360.85px;font-size:12.7px;color:#363636;-webkit-text-stroke:0.35px #363636;letter-spacing:0.4px;">Expense A/C Name</div>
<div class="a" style="left:998.5px;top:360.85px;font-size:12.7px;color:#363636;-webkit-text-stroke:0.35px #363636;letter-spacing:0.4px;">Expense A/C Type</div>
<div class="a" style="right:534.5px;top:360.85px;font-size:12.7px;color:#363636;-webkit-text-stroke:0.35px #363636;letter-spacing:0.4px;">Approved Value</div>
<div class="a" style="right:353px;top:360.85px;font-size:12.7px;color:#363636;-webkit-text-stroke:0.35px #363636;letter-spacing:0.4px;">Utilized Value</div>
<div class="a" style="right:146px;top:360.85px;font-size:12.7px;color:#363636;-webkit-text-stroke:0.35px #363636;letter-spacing:0.4px;">Remaining Value</div>
<div style="position:absolute;left:300px;top:441px;width:1571px;height:1px;background:#e2e2e2"></div>
<div class="a" style="left:319.5px;top:408.12px;font-size:12.5px;color:#363636;">EA005</div>
<div class="a" style="left:434.5px;top:408.12px;font-size:12.5px;color:#363636;">EX112421384950</div>
<div class="a" style="left:643.5px;top:408.12px;font-size:12.5px;color:#363636;">Equipment Rental</div>
<div class="a" style="left:998.5px;top:408.12px;font-size:12.5px;color:#363636;">Capital</div>
<div class="a" style="right:534.5px;top:408.12px;font-size:12.5px;color:#363636;">$100,000.00</div>
<div class="a" style="right:353px;top:408.12px;font-size:12.5px;color:#363636;">$0.00</div>
<div class="a" style="right:146px;top:408.12px;font-size:12.5px;color:#363636;">$100,000.00</div>
<div style="position:absolute;left:1811px;top:393px;width:41px;height:40px;background:#f4f4f4;border:1.5px solid #12aeae;border-radius:11px"></div>
<svg style="position:absolute;left:1811px;top:393px" width="41" height="40" viewBox="0 0 41 40"><circle cx="20.5" cy="13.8" r="1.9" fill="#12aeae"/><circle cx="20.5" cy="20" r="1.9" fill="#12aeae"/><circle cx="20.5" cy="26.2" r="1.9" fill="#12aeae"/></svg>
<div style="position:absolute;left:300px;top:497px;width:1571px;height:1px;background:#e2e2e2"></div>
<div class="a" style="left:319.5px;top:464.20px;font-size:12.5px;color:#363636;">EA006</div>
<div class="a" style="left:434.5px;top:464.20px;font-size:12.5px;color:#363636;">EX112484985152</div>
<div class="a" style="left:643.5px;top:464.20px;font-size:12.5px;color:#363636;">Fuel and Vehicle Expenses</div>
<div class="a" style="left:998.5px;top:464.20px;font-size:12.5px;color:#363636;">Capital</div>
<div class="a" style="right:534.5px;top:464.20px;font-size:12.5px;color:#363636;">$5,000.00</div>
<div class="a" style="right:353px;top:464.20px;font-size:12.5px;color:#363636;">$0.00</div>
<div class="a" style="right:146px;top:464.20px;font-size:12.5px;color:#363636;">$5,000.00</div>
<div style="position:absolute;left:1811px;top:449px;width:41px;height:40px;background:#f4f4f4;border:1.5px solid #12aeae;border-radius:11px"></div>
<svg style="position:absolute;left:1811px;top:449px" width="41" height="40" viewBox="0 0 41 40"><circle cx="20.5" cy="13.8" r="1.9" fill="#12aeae"/><circle cx="20.5" cy="20" r="1.9" fill="#12aeae"/><circle cx="20.5" cy="26.2" r="1.9" fill="#12aeae"/></svg>
<div style="position:absolute;left:300px;top:553px;width:1571px;height:1px;background:#e2e2e2"></div>
<div class="a" style="left:319.5px;top:520.28px;font-size:12.5px;color:#363636;">EA008</div>
<div class="a" style="left:434.5px;top:520.28px;font-size:12.5px;color:#363636;">EX112484914122</div>
<div class="a" style="left:643.5px;top:520.28px;font-size:12.5px;color:#363636;">Insurance</div>
<div class="a" style="left:998.5px;top:520.28px;font-size:12.5px;color:#363636;">Capital</div>
<div class="a" style="right:534.5px;top:520.28px;font-size:12.5px;color:#363636;">$1,750,000.00</div>
<div class="a" style="right:353px;top:520.28px;font-size:12.5px;color:#363636;">$0.00</div>
<div class="a" style="right:146px;top:520.28px;font-size:12.5px;color:#363636;">$1,750,000.00</div>
<div style="position:absolute;left:1811px;top:505px;width:41px;height:40px;background:#f4f4f4;border:1.5px solid #12aeae;border-radius:11px"></div>
<svg style="position:absolute;left:1811px;top:505px" width="41" height="40" viewBox="0 0 41 40"><circle cx="20.5" cy="13.8" r="1.9" fill="#12aeae"/><circle cx="20.5" cy="20" r="1.9" fill="#12aeae"/><circle cx="20.5" cy="26.2" r="1.9" fill="#12aeae"/></svg>
<div style="position:absolute;left:300px;top:609px;width:1571px;height:1px;background:#e2e2e2"></div>
<div class="a" style="left:319.5px;top:576.36px;font-size:12.5px;color:#363636;">EA018</div>
<div class="a" style="left:434.5px;top:576.36px;font-size:12.5px;color:#363636;">EX112420958494</div>
<div class="a" style="left:643.5px;top:576.36px;font-size:12.5px;color:#363636;">IT &amp; Software Subscriptions</div>
<div class="a" style="left:998.5px;top:576.36px;font-size:12.5px;color:#363636;">Operational</div>
<div class="a" style="right:534.5px;top:576.36px;font-size:12.5px;color:#363636;">$120,000.00</div>
<div class="a" style="right:353px;top:576.36px;font-size:12.5px;color:#363636;">$0.00</div>
<div class="a" style="right:146px;top:576.36px;font-size:12.5px;color:#363636;">$120,000.00</div>
<div style="position:absolute;left:1811px;top:561px;width:41px;height:40px;background:#f4f4f4;border:1.5px solid #12aeae;border-radius:11px"></div>
<svg style="position:absolute;left:1811px;top:561px" width="41" height="40" viewBox="0 0 41 40"><circle cx="20.5" cy="13.8" r="1.9" fill="#12aeae"/><circle cx="20.5" cy="20" r="1.9" fill="#12aeae"/><circle cx="20.5" cy="26.2" r="1.9" fill="#12aeae"/></svg>
<div style="position:absolute;left:300px;top:666px;width:1571px;height:1px;background:#e2e2e2"></div>
<div class="a" style="left:319.5px;top:632.44px;font-size:12.5px;color:#363636;">EA015</div>
<div class="a" style="left:434.5px;top:632.44px;font-size:12.5px;color:#363636;">EX112444071903</div>
<div class="a" style="left:643.5px;top:632.44px;font-size:12.5px;color:#363636;">Legal &amp; Professional Fees</div>
<div class="a" style="left:998.5px;top:632.44px;font-size:12.5px;color:#363636;">Operational</div>
<div class="a" style="right:534.5px;top:632.44px;font-size:12.5px;color:#363636;">$600,000.00</div>
<div class="a" style="right:353px;top:632.44px;font-size:12.5px;color:#363636;">$0.00</div>
<div class="a" style="right:146px;top:632.44px;font-size:12.5px;color:#363636;">$600,000.00</div>
<div style="position:absolute;left:1811px;top:618px;width:41px;height:40px;background:#f4f4f4;border:1.5px solid #12aeae;border-radius:11px"></div>
<svg style="position:absolute;left:1811px;top:618px" width="41" height="40" viewBox="0 0 41 40"><circle cx="20.5" cy="13.8" r="1.9" fill="#12aeae"/><circle cx="20.5" cy="20" r="1.9" fill="#12aeae"/><circle cx="20.5" cy="26.2" r="1.9" fill="#12aeae"/></svg>
<div style="position:absolute;left:300px;top:722px;width:1571px;height:1px;background:#e2e2e2"></div>
<div class="a" style="left:319.5px;top:688.52px;font-size:12.5px;color:#363636;">EA010</div>
<div class="a" style="left:434.5px;top:688.52px;font-size:12.5px;color:#363636;">EX112421324768</div>
<div class="a" style="left:643.5px;top:688.52px;font-size:12.5px;color:#363636;">Marketing and Advertising</div>
<div class="a" style="left:998.5px;top:688.52px;font-size:12.5px;color:#363636;">Operational</div>
<div class="a" style="right:534.5px;top:688.52px;font-size:12.5px;color:#363636;">$50,000.00</div>
<div class="a" style="right:353px;top:688.52px;font-size:12.5px;color:#363636;">$0.00</div>
<div class="a" style="right:146px;top:688.52px;font-size:12.5px;color:#363636;">$50,000.00</div>
<div style="position:absolute;left:1811px;top:674px;width:41px;height:40px;background:#f4f4f4;border:1.5px solid #12aeae;border-radius:11px"></div>
<svg style="position:absolute;left:1811px;top:674px" width="41" height="40" viewBox="0 0 41 40"><circle cx="20.5" cy="13.8" r="1.9" fill="#12aeae"/><circle cx="20.5" cy="20" r="1.9" fill="#12aeae"/><circle cx="20.5" cy="26.2" r="1.9" fill="#12aeae"/></svg>
<div style="position:absolute;left:300px;top:777px;width:1571px;height:1px;background:#e2e2e2"></div>
<div class="a" style="left:319.5px;top:744.60px;font-size:12.5px;color:#363636;">EA004</div>
<div class="a" style="left:434.5px;top:744.60px;font-size:12.5px;color:#363636;">EX112477715197</div>
<div class="a" style="left:643.5px;top:744.60px;font-size:12.5px;color:#363636;">Materials Costs</div>
<div class="a" style="left:998.5px;top:744.60px;font-size:12.5px;color:#363636;">Capital</div>
<div class="a" style="right:534.5px;top:744.60px;font-size:12.5px;color:#363636;">$500,000.00</div>
<div class="a" style="right:353px;top:744.60px;font-size:12.5px;color:#363636;">$0.00</div>
<div class="a" style="right:146px;top:744.60px;font-size:12.5px;color:#363636;">$500,000.00</div>
<div style="position:absolute;left:1811px;top:730px;width:41px;height:40px;background:#f4f4f4;border:1.5px solid #12aeae;border-radius:11px"></div>
<svg style="position:absolute;left:1811px;top:730px" width="41" height="40" viewBox="0 0 41 40"><circle cx="20.5" cy="13.8" r="1.9" fill="#12aeae"/><circle cx="20.5" cy="20" r="1.9" fill="#12aeae"/><circle cx="20.5" cy="26.2" r="1.9" fill="#12aeae"/></svg>
<div class="a" style="left:319.5px;top:811.82px;font-size:12.5px;color:#363636;">Cards: 18</div>
<div style="position:absolute;left:386px;top:806px;width:1px;height:22px;background:#d6d6d6"></div>
<div class="a" style="left:407.5px;top:811.82px;font-size:12.5px;color:#363636;">No of Cards</div>
<div style="position:absolute;left:489px;top:797px;width:72px;height:41px;border:1px solid #e4e4e4;border-radius:11px;background:#fff"></div>
<div class="a" style="left:508.5px;top:811.40px;font-size:13px;color:#333;font-style:italic;">15</div>
<svg style="position:absolute;left:536px;top:813px" width="12" height="8" viewBox="0 0 12 8"><path d="M1.5 1.5 L9.5 1.5 L5.5 6 Z" fill="#a9a9a9"/></svg>
<div style="position:absolute;left:1582.5px;top:798px;width:37.5px;height:38px;background:#fafafa;border:1px solid #ececec;border-radius:9px;box-shadow:0 0 12px rgba(0,0,0,0.05)"></div>
<div style="position:absolute;left:1627.5px;top:798px;width:37.5px;height:38px;background:#fafafa;border:1px solid #ececec;border-radius:9px;box-shadow:0 0 12px rgba(0,0,0,0.05)"></div>
<div style="position:absolute;left:1673px;top:798px;width:37.5px;height:38px;background:#12aeae;border-radius:9px;box-shadow:0 2px 10px rgba(0,0,0,0.08)"></div>
<div style="position:absolute;left:1719px;top:798px;width:37.5px;height:38px;background:#f4f4f4;border:1px solid #dedede;border-radius:9px;box-shadow:0 0 12px rgba(0,0,0,0.06)"></div>
<div style="position:absolute;left:1764px;top:798px;width:37.5px;height:38px;background:#f4f4f4;border:1px solid #dedede;border-radius:9px;box-shadow:0 0 12px rgba(0,0,0,0.06)"></div>
<div style="position:absolute;left:1810px;top:798px;width:37.5px;height:38px;background:#f4f4f4;border:1px solid #dedede;border-radius:9px;box-shadow:0 0 12px rgba(0,0,0,0.06)"></div>
<svg style="position:absolute;left:1582.5px;top:798.8px" width="38" height="38" viewBox="0 0 38 38"><path d="M15 13.5 L15 22.5 M23 13.8 L18.8 18 L23 22.2" fill="none" stroke="#a0a0a0" stroke-width="1.5"/></svg>
<svg style="position:absolute;left:1627.5px;top:798.8px" width="38" height="38" viewBox="0 0 38 38"><path d="M21.3 13.8 L17.2 18 L21.3 22.2" fill="none" stroke="#a0a0a0" stroke-width="1.5"/></svg>
<div class="a" style="left:1673px;top:811px;width:37.5px;text-align:center;font-size:14px;font-weight:bold;color:#fff">1</div>
<div class="a" style="left:1719px;top:811px;width:37.5px;text-align:center;font-size:14px;font-weight:bold;color:#333">2</div>
<svg style="position:absolute;left:1764px;top:798.8px" width="38" height="38" viewBox="0 0 38 38"><path d="M16.7 13.8 L20.9 18 L16.7 22.2" fill="none" stroke="#333" stroke-width="1.8"/></svg>
<svg style="position:absolute;left:1810px;top:798.8px" width="38" height="38" viewBox="0 0 38 38"><path d="M13.8 13.8 L18 18 L13.8 22.2 M23 13.5 L23 22.5" fill="none" stroke="#333" stroke-width="1.8"/></svg>
</body></html>
